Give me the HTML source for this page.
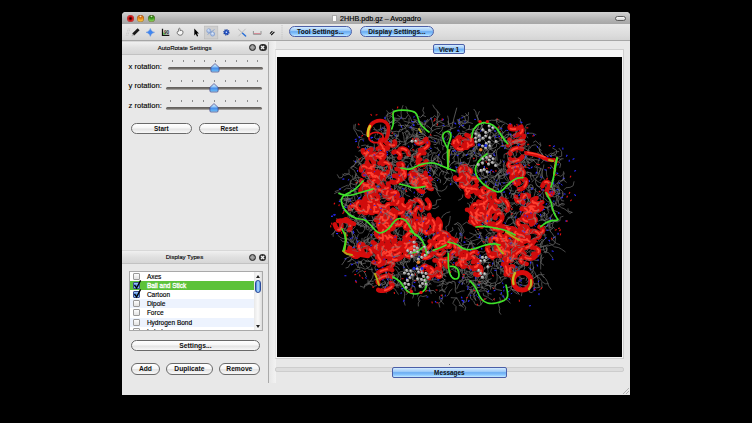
<!DOCTYPE html>
<html><head><meta charset="utf-8">
<style>
*{margin:0;padding:0;box-sizing:border-box}
html,body{width:752px;height:423px;background:#000;overflow:hidden;font-family:"Liberation Sans",sans-serif;color:#111}
.a{position:absolute}
#win{position:absolute;left:122px;top:12px;width:508px;height:383px;background:#e8e8e8;border-radius:4px 4px 0 0;overflow:hidden}
#title{position:absolute;left:0;top:0;width:508px;height:12px;background:linear-gradient(#d2d2d2,#b4b4b4 60%,#a6a6a6)}
#toolbar{position:absolute;left:0;top:12px;width:508px;height:16.6px;background:linear-gradient(#e9e9e9,#dcdcdc 70%,#d4d4d4);border-bottom:1px solid #a6a6a6}
.tl{position:absolute;top:2.8px;width:7px;height:7px;border-radius:50%;box-shadow:inset 0 0 0 0.6px rgba(60,0,0,0.45)}
.aq{position:absolute;border-radius:6px;border:1px solid #4b5fa8;background:linear-gradient(#d4ebff 0%,#9ccaf8 40%,#6aacf2 52%,#8fcaff 80%,#c8ecff 100%);font-weight:bold;text-align:center;color:#111;white-space:nowrap}
.dt{position:absolute;left:0;width:146px;height:14px;background:linear-gradient(#f0f0f0,#e0e0e0 50%,#d6d6d6);border-bottom:1px solid #c2c2c2;border-top:1px solid #d8d8d8;font-size:6.05px;line-height:13px;color:#000;-webkit-text-stroke:0.12px #000}
.dbtn{position:absolute;width:7.2px;height:7.2px;border-radius:50%;background:#2e2e2e}
.fbtn{position:absolute;width:7.2px;height:7.2px;border-radius:50%;border:1.4px solid #222;background:radial-gradient(circle at 45% 45%,#b0b0b0,#747474)}
.lbl{position:absolute;font-size:7.6px;line-height:9px;color:#000;white-space:nowrap;-webkit-text-stroke:0.12px #000}
.trk{position:absolute;height:2.6px;border-radius:1.5px;background:linear-gradient(#5e5b58,#7a7672 70%,#cfcfcf)}
.tk{position:absolute;width:0.8px;height:2px;background:#8c8c8c}
.pb{position:absolute;height:11px;border-radius:6px;border:1px solid #6a6a6a;background:linear-gradient(#ffffff,#f6f6f6 45%,#e4e4e4 55%,#f8f8f8);font-weight:bold;text-align:center;line-height:9px;color:#111;white-space:nowrap}
.row{position:absolute;left:0;width:125.5px;height:9.2px;font-size:6.5px;line-height:9.4px;padding-left:17.3px;white-space:nowrap;color:#000;-webkit-text-stroke:0.15px currentColor}
.cb{position:absolute;left:3.4px;top:1px;width:7px;height:7px;border:1px solid #9a9a9a;background:linear-gradient(#fdfdfd,#e2e2e2);border-radius:1px}
.cbk{border-color:#3a4a90;background:linear-gradient(#a8d0ff,#3a7ce0 60%,#9fd8ff)}
</style></head><body>
<div id="win">
  <div id="title">
    <div class="tl" style="left:4.7px;background:radial-gradient(circle at 50% 50%,#200000 0,#700000 22%,#e02020 48%,#ff7070 78%,#b01010 100%)"></div>
    <div class="tl" style="left:15.1px;background:radial-gradient(circle at 50% 18%,#fff0d0 0,#d07010 22%,#f09020 45%,#ffd850 80%,#f0b040 100%)"></div>
    <div class="tl" style="left:25.9px;background:radial-gradient(circle at 50% 18%,#e0ffd0 0,#2a7a10 22%,#4aa828 45%,#98e068 80%,#70c050 100%)"></div>
    <div class="a" style="left:209.5px;top:2.6px;width:5.2px;height:7.4px;background:#fbfbfb;border:0.5px solid #aaa"></div>
    <div class="a" style="left:218px;top:2px;font-size:7.2px;line-height:9px;color:#000;white-space:nowrap;-webkit-text-stroke:0.15px #000">2HHB.pdb.gz – Avogadro</div>
    <div class="a" style="left:493.2px;top:3.6px;width:10.5px;height:5px;border-radius:3px;border:1px solid #5a5a5a;background:linear-gradient(#fdfdfd,#d0d0d0)"></div>
  </div>
  <div id="toolbar">
    <svg class="a" style="left:0;top:0" width="170" height="17" viewBox="122 24 170 17">
      <g stroke="#b4b4b4" stroke-width="0.7" stroke-dasharray="0.8 0.8"><path d="M126.2 35.5 L128.5 28"/><path d="M127.8 35.5 L130.1 28"/></g>
      <path d="M137.6 28.2 L139.6 30.2 L134.2 35.6 L132.2 33.6Z" fill="#1a1a1a"/>
      <path d="M132.2 33.6 L134.2 35.6 L131.4 36.6Z" fill="#b8b8b8"/>
      <path d="M150.3 28.4 Q151 31.6 154.6 32.3 Q151 33 150.3 36.4 Q149.6 33 146 32.3 Q149.6 31.6 150.3 28.4Z" fill="#3f86f0" stroke="#2a6ad8" stroke-width="0.3"/>
      <path d="M162.5 28.8 V35.3 H169.3" fill="none" stroke="#111" stroke-width="1.3"/>
      <path d="M163.3 34.6 V32 Q165 34.6 166 34.6Z" fill="#28c028"/>
      <text x="164" y="33.6" font-size="4.6" font-family="Liberation Sans" fill="#222" font-weight="bold">90</text>
      <path d="M177.5 31.5 Q176.3 33 178 34.5 Q180 36 182 34.8 Q183.6 33 182.8 31 Q181.5 30 180.2 30.6 L180 28.5 Q179.2 27.8 178.6 28.8 L178.7 31.2Z" fill="#f6f6f6" stroke="#333" stroke-width="0.6"/>
      <path d="M194.3 28.6 L194.3 35.4 L195.8 34 L197 36.6 L198.2 36 L197 33.5 L199 33.4Z" fill="#000"/>
      <rect x="204.4" y="26.1" width="13.4" height="12.8" fill="#cfcfcf" stroke="#bababa" stroke-width="0.6"/>
      <path d="M207.5 34.5 L214.5 29.5" stroke="#7a9ad0" stroke-width="0.8"/>
      <g fill="#b4c8ea" stroke="#5a82c8" stroke-width="0.5"><circle cx="208.8" cy="30.8" r="2"/><circle cx="212.6" cy="34" r="2.1"/></g>
      <g fill="#dde8f8"><circle cx="208.2" cy="30" r="0.8"/><circle cx="212.4" cy="33.3" r="0.9"/></g>
    </svg>
    <svg class="a" style="left:96px;top:0" width="70" height="17" viewBox="218 24 70 17">
      <circle cx="226.4" cy="32.3" r="2.4" fill="#2656c8" stroke="#1b3f9a" stroke-width="1.6" stroke-dasharray="1 0.7"/>
      <circle cx="226.4" cy="32.3" r="0.8" fill="#dfe8ff"/>
      <path d="M238.2 29 L242.5 33" stroke="#b0b0b0" stroke-width="0.9"/>
      <path d="M245.6 28.8 L238.4 36.3" stroke="#b8b8b8" stroke-width="0.9"/>
      <path d="M242.6 33.2 L245.6 36" stroke="#2b70d8" stroke-width="1.5" stroke-linecap="round"/>
      <path d="M253.4 31 V34.3 H261 V31" fill="none" stroke="#8a8a8a" stroke-width="0.9"/>
      <path d="M254 33.5 H260.4" stroke="#d87080" stroke-width="0.7"/>
      <path d="M270 33.6 L272.4 31.2 M271.2 35 L274.4 31.8" stroke="#111" stroke-width="1.1"/>
      <path d="M282 25 V39.5" stroke="#bdbdbd" stroke-width="0.8" stroke-dasharray="0.9 0.9"/>
    </svg>
    <div class="aq" style="left:167px;top:2.4px;width:63px;height:10.9px;font-size:6.6px;line-height:9px">Tool Settings...</div>
    <div class="aq" style="left:238.4px;top:2.4px;width:73.2px;height:10.9px;font-size:6.66px;line-height:9px">Display Settings...</div>
  </div>

  <!-- left dock -->
  <div class="dt" style="top:28.6px"><span class="a" style="left:35.7px;top:0">AutoRotate Settings</span>
    <div class="fbtn" style="left:126.75px;top:2.1px"></div>
    <div class="dbtn" style="left:137.4px;top:2.1px"></div>
    <svg class="a" style="left:137.4px;top:2.1px" width="7.2" height="7.2"><path d="M2.1 2.1 L5.1 5.1 M5.1 2.1 L2.1 5.1" stroke="#f0f0f0" stroke-width="1.4"/></svg>
  </div>
  <div class="lbl" style="left:6.5px;top:49.5px">x rotation:</div>
  <div class="lbl" style="left:6.5px;top:69.2px">y rotation:</div>
  <div class="lbl" style="left:6.5px;top:89.3px">z rotation:</div>
  <div class="trk" style="left:46px;top:55.2px;width:94.5px"></div>
  <div class="trk" style="left:43.9px;top:75px;width:96.6px"></div>
  <div class="trk" style="left:43.9px;top:95px;width:96.6px"></div>
  <div class="tk" style="left:49.9px;top:48.2px"></div>
<div class="tk" style="left:60.9px;top:48.2px"></div>
<div class="tk" style="left:72.0px;top:48.2px"></div>
<div class="tk" style="left:82.1px;top:48.2px"></div>
<div class="tk" style="left:92.8px;top:48.2px"></div>
<div class="tk" style="left:103.0px;top:48.2px"></div>
<div class="tk" style="left:114.0px;top:48.2px"></div>
<div class="tk" style="left:124.5px;top:48.2px"></div>
<div class="tk" style="left:135.2px;top:48.2px"></div>
<svg class="a" style="left:88.4px;top:51.0px" width="10" height="10" viewBox="0 0 10 10"><defs><linearGradient id="tg" x1="0" y1="0" x2="0" y2="1"><stop offset="0" stop-color="#e4f6ff"/><stop offset="0.35" stop-color="#9accf8"/><stop offset="0.55" stop-color="#4a8eea"/><stop offset="0.85" stop-color="#62b2f4"/><stop offset="1" stop-color="#b4eeff"/></linearGradient></defs><path d="M5 0.6 L9.1 4.4 V7.9 Q9.1 9 8 9 H2 Q0.9 9 0.9 7.9 V4.4Z" fill="url(#tg)" stroke="#3f3f86" stroke-width="0.7"/></svg>
<div class="tk" style="left:48.0px;top:68.0px"></div>
<div class="tk" style="left:59.0px;top:68.0px"></div>
<div class="tk" style="left:70.0px;top:68.0px"></div>
<div class="tk" style="left:81.0px;top:68.0px"></div>
<div class="tk" style="left:91.6px;top:68.0px"></div>
<div class="tk" style="left:103.0px;top:68.0px"></div>
<div class="tk" style="left:113.1px;top:68.0px"></div>
<div class="tk" style="left:124.5px;top:68.0px"></div>
<div class="tk" style="left:135.2px;top:68.0px"></div>
<svg class="a" style="left:87.2px;top:70.8px" width="10" height="10" viewBox="0 0 10 10"><defs><linearGradient id="tg" x1="0" y1="0" x2="0" y2="1"><stop offset="0" stop-color="#e4f6ff"/><stop offset="0.35" stop-color="#9accf8"/><stop offset="0.55" stop-color="#4a8eea"/><stop offset="0.85" stop-color="#62b2f4"/><stop offset="1" stop-color="#b4eeff"/></linearGradient></defs><path d="M5 0.6 L9.1 4.4 V7.9 Q9.1 9 8 9 H2 Q0.9 9 0.9 7.9 V4.4Z" fill="url(#tg)" stroke="#3f3f86" stroke-width="0.7"/></svg>
<div class="tk" style="left:48.0px;top:88.0px"></div>
<div class="tk" style="left:59.0px;top:88.0px"></div>
<div class="tk" style="left:70.0px;top:88.0px"></div>
<div class="tk" style="left:81.0px;top:88.0px"></div>
<div class="tk" style="left:91.6px;top:88.0px"></div>
<div class="tk" style="left:103.0px;top:88.0px"></div>
<div class="tk" style="left:113.1px;top:88.0px"></div>
<div class="tk" style="left:124.5px;top:88.0px"></div>
<div class="tk" style="left:135.2px;top:88.0px"></div>
<svg class="a" style="left:87.2px;top:90.8px" width="10" height="10" viewBox="0 0 10 10"><defs><linearGradient id="tg" x1="0" y1="0" x2="0" y2="1"><stop offset="0" stop-color="#e4f6ff"/><stop offset="0.35" stop-color="#9accf8"/><stop offset="0.55" stop-color="#4a8eea"/><stop offset="0.85" stop-color="#62b2f4"/><stop offset="1" stop-color="#b4eeff"/></linearGradient></defs><path d="M5 0.6 L9.1 4.4 V7.9 Q9.1 9 8 9 H2 Q0.9 9 0.9 7.9 V4.4Z" fill="url(#tg)" stroke="#3f3f86" stroke-width="0.7"/></svg>
  <div class="pb" style="left:9px;top:110.9px;width:60.8px;font-size:6.4px">Start</div>
  <div class="pb" style="left:76.8px;top:110.9px;width:60.8px;font-size:6.4px">Reset</div>

  <div class="dt" style="top:238.4px"><span class="a" style="left:43.7px;top:0">Display Types</span>
    <div class="fbtn" style="left:126.6px;top:2.8px"></div>
    <div class="dbtn" style="left:136.9px;top:2.8px"></div>
    <svg class="a" style="left:136.9px;top:2.8px" width="7.2" height="7.2"><path d="M2.1 2.1 L5.1 5.1 M5.1 2.1 L2.1 5.1" stroke="#f0f0f0" stroke-width="1.4"/></svg>
  </div>
  <div class="a" style="left:6.6px;top:258.8px;width:134px;height:60.4px;background:#fff;border:1px solid #a9a9a9;overflow:hidden">
    <div class="row" style="top:-0.2px">Axes<div class="cb"></div></div>
    <div class="row" style="top:9px;background:#5cc23a;color:#fff;-webkit-text-stroke:0.3px #fff">Ball and Stick<div class="cb cbk"></div><svg class="a" style="left:3.2px;top:-1px" width="10" height="10"><path d="M1.5 4.8 L3.6 8 L7.6 0.4" fill="none" stroke="#000" stroke-width="1.3"/></svg></div>
    <div class="row" style="top:18.2px">Cartoon<div class="cb cbk"></div><svg class="a" style="left:3.2px;top:-1px" width="10" height="10"><path d="M1.5 4.8 L3.6 8 L7.6 0.4" fill="none" stroke="#000" stroke-width="1.3"/></svg></div>
    <div class="row" style="top:27.4px;background:#edf3fe">Dipole<div class="cb"></div></div>
    <div class="row" style="top:36.6px">Force<div class="cb"></div></div>
    <div class="row" style="top:45.8px;background:#edf3fe">Hydrogen Bond<div class="cb"></div></div>
    <div class="row" style="top:55px">Label<div class="cb"></div></div>
    <div class="a" style="left:124.5px;top:0;width:8px;height:58px;background:linear-gradient(90deg,#e8e8e8,#fafafa 50%,#dcdcdc)"></div>
    <div class="a" style="left:126.2px;top:3px;width:0;height:0;border-left:2px solid transparent;border-right:2px solid transparent;border-bottom:3px solid #222"></div>
    <div class="a" style="left:126.2px;top:53px;width:0;height:0;border-left:2px solid transparent;border-right:2px solid transparent;border-top:3px solid #222"></div>
    <div class="a" style="left:125.3px;top:8.6px;width:6px;height:13px;border-radius:3px;border:0.8px solid #2a4a9a;background:linear-gradient(90deg,#3a78d8,#b8e0ff 50%,#4a8ae0)"></div>
  </div>
  <div class="pb" style="left:9px;top:328.2px;width:128.8px;font-size:6.76px">Settings...</div>
  <div class="pb" style="left:9px;top:351.4px;width:28.8px;font-size:6.7px;height:11.3px">Add</div>
  <div class="pb" style="left:44.2px;top:351.4px;width:46.4px;font-size:6.7px;height:11.3px">Duplicate</div>
  <div class="pb" style="left:96.9px;top:351.4px;width:40.9px;font-size:6.7px;height:11.3px">Remove</div>
  <div class="a" style="left:146px;top:30px;width:1px;height:341px;background:#aaa"></div>

  <!-- view frame -->
  <div class="a" style="left:147px;top:29px;width:7px;height:342px;background:linear-gradient(90deg,#e6e6e6,#eeeeee 60%,#f2f2f2)"></div>
  <div class="a" style="left:153.1px;top:37.2px;width:348.6px;height:310px;border:1px solid #cfcfcf;border-left-color:#e4e4e4;background:#f6f6f6"></div>
  <div class="a" style="left:154.7px;top:45.1px;width:345.5px;height:300.1px;background:#000"></div>
  <div class="aq" style="left:311.2px;top:32.4px;width:31.6px;height:10.1px;border-radius:2px;font-size:6.7px;line-height:9.6px">View 1</div>
  <div class="a" style="left:153.3px;top:355px;width:348.5px;height:5.3px;border-radius:2px;background:#dddddd;border:1px solid #cdcdcd"></div>
  <div class="a" style="left:326.5px;top:352px;width:1px;height:1px;background:#777"></div>
  <div class="aq" style="left:270.1px;top:355.1px;width:114.5px;height:10.5px;border-radius:2px;font-size:6.4px;line-height:9.8px">Messages</div>
  <svg class="a" style="left:499px;top:374px" width="9" height="9"><path d="M2 8 L8 2 M5 8 L8 5" stroke="#9a9a9a" stroke-width="0.7"/></svg>
</div>
<svg style="position:absolute;left:0;top:0" width="752" height="423">
<path d="M516.9 238.5 L513.2 239.5 L511.7 242.7 M396.8 153.8 L395.9 150.8 L394.4 146.9 L390.4 146.0 L388.0 148.9 M532.0 218.0 L530.0 214.9 L527.1 214.8 L525.3 217.6 L526.8 220.3 M390.9 222.2 L393.2 218.5 L392.6 215.4 L394.2 212.0 L396.3 209.3 L399.7 207.7 M526.5 283.0 L528.7 280.1 L533.2 281.4 L534.0 283.8 L538.3 283.9 L540.1 287.1 M388.4 121.8 L387.2 117.6 L387.6 113.2 M441.6 218.2 L442.6 215.8 L446.5 212.9 L450.2 211.8 M436.5 264.5 L439.6 267.0 L442.4 268.2 L444.4 269.8 L448.0 270.3 M550.4 201.6 L548.8 204.5 L551.3 207.3 L552.2 210.7 L555.5 213.2 L554.9 216.2 M432.2 246.8 L431.1 250.4 L433.4 254.8 L437.1 257.4 L440.2 257.1 M518.9 162.3 L523.7 162.2 L528.4 161.9 L529.8 158.2 L532.5 157.9 L533.3 154.0 M430.9 252.7 L428.2 256.6 L423.5 258.3 L421.1 255.9 L416.3 256.1 L414.2 254.7 M494.4 180.5 L495.7 182.9 L499.3 182.8 L501.5 186.1 M518.5 180.9 L521.4 178.8 L520.6 175.2 L518.1 171.1 L514.8 170.4 M429.8 275.0 L429.0 271.4 L430.4 269.2 M417.6 171.0 L420.2 167.6 L420.8 164.5 M408.6 167.7 L406.3 170.2 L406.8 173.7 M490.6 203.0 L490.4 198.3 L493.4 197.2 L493.8 194.5 M452.1 252.7 L451.1 256.2 L448.1 257.1 L443.8 257.8 M518.7 268.0 L517.2 271.1 L514.6 272.5 L513.3 275.4 L515.5 279.5 M472.5 169.1 L470.0 171.0 L465.9 170.3 L465.6 167.5 M446.1 276.6 L444.2 273.9 L441.2 274.1 L439.7 270.4 L442.0 267.9 M545.9 195.9 L549.1 198.2 L551.0 200.6 M419.0 128.8 L423.3 129.2 L425.2 133.3 L423.7 136.5 L423.4 140.6 M527.9 242.8 L528.6 246.2 L532.2 249.7 M495.3 189.1 L497.8 189.3 L501.0 192.6 L502.4 195.7 L505.3 199.6 M435.7 132.1 L439.9 134.3 L442.6 135.3 M488.4 296.3 L487.8 293.5 L486.2 291.0 L483.6 290.7 L479.3 291.4 M527.0 273.4 L530.6 274.2 L533.4 270.3 M525.4 146.4 L524.7 143.4 L523.0 140.1 L521.0 138.1 L516.7 137.5 L515.7 135.2 M468.4 263.1 L471.3 260.4 L474.6 258.0 L476.1 254.8 L478.3 252.0 M493.0 195.4 L493.5 200.3 L494.3 203.9 M482.7 276.5 L483.5 274.0 L483.2 270.6 L485.6 267.7 L487.9 266.5 L488.6 261.8 M405.0 255.0 L407.8 258.5 L410.3 257.7 L414.5 257.5 L415.9 255.1 L419.1 254.9 M480.7 153.0 L477.0 153.8 L475.1 151.5 L471.4 150.5 L468.9 151.0 L467.4 153.5 M487.3 176.4 L487.7 172.6 L491.5 170.5 M419.7 179.9 L418.1 184.0 L417.4 186.9 L415.4 188.6 M494.2 166.2 L498.1 164.8 L501.0 163.1 L500.4 159.4 M401.8 127.2 L399.6 122.8 L397.1 121.6 L393.7 123.9 M489.5 220.6 L486.5 223.0 L484.3 224.8 L485.4 227.2 L488.3 227.0 L491.0 223.0 M351.8 231.6 L348.8 231.4 L345.2 230.2 L341.7 227.2 M369.5 165.4 L365.2 165.3 L361.4 165.4 M420.7 193.2 L424.3 193.5 L426.5 191.8 M540.6 253.1 L537.9 257.1 L534.8 256.4 L533.8 251.8 L530.1 250.7 L526.2 253.4 M424.1 229.1 L421.5 231.9 L422.9 234.1 L421.0 236.6 L416.6 236.2 L412.7 237.1 M469.1 135.4 L472.4 131.9 L473.4 129.2 M501.6 236.2 L497.7 235.8 L493.3 236.9 M535.4 235.7 L538.3 239.0 L539.4 242.1 M410.8 154.9 L413.1 158.7 L410.9 162.5 L408.2 165.1 L407.2 169.4 M457.2 119.4 L460.2 122.9 L461.8 125.7 L464.2 128.6 M398.5 261.6 L402.1 262.8 L403.4 265.4 L405.1 268.3 L403.9 271.3 M503.4 206.6 L507.3 209.7 L509.2 211.7 M489.7 179.1 L486.3 182.4 L485.9 186.0 L485.1 190.3 M517.0 238.9 L514.1 242.5 L512.1 245.9 L511.8 249.5 L510.1 252.1 M383.9 170.8 L382.0 168.3 L382.0 163.7 L383.3 159.6 M478.7 174.0 L481.9 177.7 L480.4 180.1 L477.9 181.8 M400.8 157.7 L405.5 158.2 L408.1 158.3 M542.9 193.2 L543.6 195.9 L543.6 199.4 L540.8 203.3 L539.1 206.8 M516.0 189.8 L514.7 193.7 L514.0 196.9 L512.6 199.2 M432.0 268.6 L429.2 266.3 L425.8 264.1 L421.9 262.7 M491.9 267.6 L490.7 271.3 L493.2 275.1 M463.0 254.4 L459.5 253.9 L458.6 251.0 L459.4 247.6 L461.5 245.8 M414.8 155.8 L411.6 157.9 L410.5 162.3 L410.6 165.3 L414.3 167.7 L415.1 171.8 M533.8 275.9 L530.7 277.9 L527.6 277.4 L524.4 274.6 M447.8 273.6 L446.7 270.5 L445.2 267.3 L445.0 263.1 L443.1 258.7 M388.8 120.1 L390.1 122.7 L387.8 126.5 L389.3 131.0 L389.4 135.4 L387.6 139.8 M526.0 280.9 L526.9 277.4 L530.6 276.2 M392.4 149.1 L394.4 152.2 L392.3 155.9 L392.8 158.8 L392.3 163.1 L394.6 165.5 M502.5 206.5 L502.6 210.0 L500.1 211.1 L496.0 211.3 L494.8 215.1 L491.5 218.6 M418.4 201.4 L415.3 202.8 L414.0 205.0 L414.1 208.4 M450.9 170.8 L452.7 174.5 L451.6 177.7 L452.1 180.9 L451.8 184.9 M509.3 291.1 L511.3 289.4 L514.9 289.8 L516.7 291.8 L519.4 294.6 M420.9 130.1 L417.0 128.7 L412.7 127.6 M390.8 163.8 L391.4 167.7 L391.3 172.5 L391.2 176.3 L387.8 179.1 M432.4 249.7 L433.4 253.0 L433.6 257.8 M351.0 238.5 L350.7 242.1 L354.6 243.6 L354.2 248.3 M380.7 124.5 L380.5 128.8 L377.4 130.3 L373.3 129.4 M361.9 263.5 L357.3 262.3 L352.7 264.1 L350.2 263.7 L348.3 267.3 L345.6 268.0 M404.3 257.0 L405.1 260.2 L401.7 262.8 L399.5 264.8 L397.0 263.5 L397.3 260.6 M529.5 202.0 L533.8 200.9 L537.0 200.7 L538.8 196.1 L542.3 193.2 L544.1 189.6 M478.3 165.3 L480.2 162.4 L483.1 161.5 L487.0 159.8 L489.0 157.3 L488.0 152.6 M519.6 268.7 L515.6 271.0 L512.6 272.1 L508.8 269.6 M499.6 297.2 L500.4 300.1 L498.5 304.6 L499.7 308.4 L499.2 312.0 L501.0 314.6 M516.5 270.6 L513.2 271.1 L512.3 274.5 M457.9 154.6 L459.6 151.0 L458.6 148.2 L454.7 146.6 L450.8 146.5 M413.0 211.2 L416.7 208.5 L420.2 206.7 M396.4 119.2 L393.8 119.3 L391.8 121.5 L392.7 124.0 M467.1 287.8 L470.5 290.2 L469.9 294.4 M454.2 137.8 L459.0 139.1 L461.3 138.0 L462.8 135.0 L467.6 134.7 M525.5 252.7 L522.7 253.4 L518.3 251.4 L516.3 248.8 L514.4 244.9 L511.1 244.5 M390.5 125.1 L389.2 129.7 L385.6 130.6 L382.5 127.4 M420.1 261.3 L423.5 260.3 L423.6 257.6 M354.5 177.8 L356.2 174.3 L354.2 170.1 L351.1 168.4 M364.7 157.1 L367.8 156.4 L369.0 153.0 L369.8 150.2 L371.1 146.3 M435.2 155.0 L438.1 156.4 L438.3 159.1 L436.8 161.9 M530.8 172.3 L530.5 177.2 L532.1 180.2 M395.6 137.4 L398.3 136.1 L398.4 133.4 L399.6 129.9 M394.8 142.9 L393.0 140.5 L388.8 141.4 L384.9 143.3 M392.9 138.6 L390.2 135.3 L387.9 131.2 L384.2 128.1 L385.1 125.6 M416.0 151.4 L420.4 149.8 L425.1 149.1 L427.2 147.3 L430.8 147.0 M359.3 151.1 L362.4 150.1 L367.2 149.3 L368.0 144.5 M487.4 199.1 L491.6 201.2 L492.9 203.5 L496.6 203.7 L499.8 203.8 L501.9 201.0 M359.9 227.0 L363.2 225.5 L366.9 222.3 L365.4 218.5 M501.9 228.2 L497.4 226.4 L495.9 223.4 M386.3 171.0 L382.1 169.2 L379.3 171.8 L374.9 169.7 L371.4 170.4 M486.3 177.4 L483.4 178.2 L480.4 177.7 M432.3 184.6 L436.6 186.0 L437.7 190.6 L441.8 191.1 L445.5 189.1 L447.3 185.7 M398.3 164.6 L393.5 165.6 L390.5 162.0 M346.5 226.7 L347.0 223.9 L345.7 220.6 L343.2 218.7 L339.7 220.3 L336.1 218.6 M470.4 239.8 L471.9 243.3 L472.4 247.0 L474.1 249.5 L477.8 250.4 M422.7 225.7 L426.1 222.2 L427.1 219.0 L425.8 214.5 L423.5 213.1 M413.7 241.4 L409.5 242.6 L404.6 243.7 L399.9 242.5 L395.8 242.4 L393.9 244.8 M485.8 235.8 L487.4 233.8 L491.3 233.0 L496.0 232.0 L499.6 231.9 L503.1 234.9 M479.9 180.7 L477.6 183.3 L476.4 186.9 L474.1 190.3 L476.9 193.7 L475.0 196.6 M401.5 215.0 L403.5 211.6 L401.0 207.5 L397.1 205.0 L396.5 200.2 L393.7 197.9 M424.3 176.0 L422.1 174.8 L419.6 176.7 L417.3 179.6 L413.0 181.9 M364.3 139.0 L360.0 139.6 L358.7 142.7 L358.6 145.4 L359.9 148.0 M492.3 162.3 L496.1 162.0 L498.3 164.1 L497.5 167.6 L500.7 169.9 L504.3 168.4 M486.0 255.6 L487.2 252.6 L489.1 250.9 M495.4 140.9 L494.1 136.3 L493.4 133.5 L490.0 131.4 L486.5 132.8 M529.1 239.7 L526.1 239.0 L523.6 239.9 L519.0 240.0 L517.9 237.6 M373.9 234.0 L375.5 237.6 L373.0 240.2 L370.3 241.7 M386.9 183.0 L385.5 179.8 L385.8 177.3 L388.2 176.0 M368.3 180.6 L371.7 179.9 L375.4 177.0 L377.3 173.4 L380.9 173.8 M557.8 218.7 L556.2 220.8 L553.2 222.3 L552.3 226.4 L554.7 228.5 M438.0 280.3 L438.0 277.3 L437.0 273.3 L436.9 270.1 M446.4 142.6 L451.2 143.8 L454.3 145.6 L453.5 149.3 M516.4 245.8 L518.1 249.9 L522.4 249.7 L523.8 247.6 L527.7 245.9 M522.9 148.5 L525.9 146.8 L528.7 145.2 M397.0 185.9 L399.5 187.5 L403.9 188.5 L407.5 191.5 M427.1 295.5 L422.9 296.5 L420.4 295.7 L418.6 298.0 L418.9 301.2 M404.3 237.2 L405.4 241.3 L408.2 243.5 L409.6 246.6 M523.0 160.4 L523.3 164.6 L526.4 165.6 M523.2 173.4 L526.6 173.2 L530.4 175.8 L533.1 175.9 L534.4 179.2 L531.6 182.3 M513.3 278.9 L510.5 275.9 L506.3 275.6 L503.8 272.0 L502.0 269.6 L504.4 265.7 M467.6 136.0 L468.9 138.9 L472.3 138.9 L475.2 138.2 M495.9 149.9 L493.3 153.0 L490.6 153.9 L486.7 153.1 L483.1 155.0 L482.7 158.6 M539.1 186.5 L542.8 186.6 L544.7 182.3 L544.4 179.5 L541.7 175.5 M366.1 195.0 L363.7 196.1 L364.4 201.1 L363.0 203.4 L358.6 205.7 M468.7 121.7 L465.6 120.7 L462.9 120.8 L459.5 123.1 M511.3 250.5 L508.7 250.4 L505.3 247.3 M514.3 169.2 L516.9 171.4 L519.3 173.9 L518.9 177.0 L522.3 178.8 M485.2 276.7 L488.1 274.3 L490.3 272.5 M401.4 224.7 L404.8 223.4 L406.6 225.4 L409.9 224.2 M373.7 255.6 L375.3 253.5 L373.3 249.7 L374.6 247.4 L371.2 243.9 L366.9 244.0 M530.1 245.2 L527.4 247.2 L523.9 250.6 L519.4 249.2 L519.2 244.3 L520.5 240.0 M400.7 222.5 L403.6 222.8 L405.5 226.1 L406.2 230.7 L409.6 233.4 L410.7 236.1 M416.8 150.4 L416.2 153.3 L412.6 154.6 L411.7 159.2 L412.8 161.7 M460.3 152.8 L457.6 155.6 L458.4 159.3 L458.3 162.0 L458.9 164.6 L460.7 168.9 M465.4 253.8 L467.2 249.2 L468.6 245.9 M499.9 216.7 L504.4 216.5 L506.8 212.8 L505.2 210.2 M476.5 144.5 L476.0 149.2 L474.0 153.4 L471.3 157.4 M515.1 172.4 L517.3 170.7 L519.8 167.2 M336.1 229.6 L333.1 233.4 L333.2 236.8 M526.8 204.4 L530.4 203.0 L533.0 199.7 L534.0 197.1 L537.8 196.2 M500.8 274.2 L500.9 269.2 L500.8 265.5 M344.0 233.3 L345.1 228.5 L347.5 225.8 L347.7 220.9 L347.9 217.5 L348.4 214.2 M358.4 234.2 L357.3 237.3 L356.0 242.0 L356.7 245.2 L357.5 248.2 M485.9 256.5 L489.4 257.6 L493.2 256.5 L497.9 255.3 L499.2 257.6 L500.8 261.7 M486.8 177.1 L482.4 179.0 L479.1 178.8 L475.9 175.8 M454.8 236.5 L453.9 240.7 L451.1 244.4 L447.4 245.1 L444.4 241.8 L445.9 239.3 M428.3 184.3 L429.3 181.7 L431.8 179.8 L435.5 178.0 M474.2 164.3 L472.9 168.6 L472.5 173.2 L475.7 175.1 L475.7 178.3 L477.2 180.4 M367.0 156.4 L363.4 156.1 L362.0 153.2 L360.8 150.7 M386.6 110.4 L387.9 112.5 L391.7 114.3 L393.9 111.8 L392.4 108.9 M347.2 231.6 L345.6 228.3 L340.8 229.1 L335.9 229.1 L334.2 232.8 L331.4 234.6 M361.4 265.2 L361.4 261.0 L363.7 259.4 L366.9 261.7 L370.9 261.4 L373.6 263.9 M465.1 252.0 L460.7 250.0 L458.5 251.2 L455.1 253.5 L451.7 253.1 M517.9 117.6 L520.5 119.1 L520.2 122.5 L522.3 124.5 M452.2 236.7 L450.7 239.6 L447.9 239.7 L445.7 238.3 L443.6 235.4 L444.5 232.9 M382.1 152.9 L384.0 155.7 L387.1 157.5 L391.8 157.3 L396.8 157.0 L399.6 159.4 M401.5 117.3 L401.0 113.1 L401.5 109.5 L403.1 105.1 M523.9 286.2 L528.0 284.6 L529.4 280.0 L527.4 277.4 L525.3 274.7 M516.6 199.3 L514.3 203.5 L510.1 205.7 L508.2 204.0 L503.8 203.7 L501.5 202.4 M453.7 148.5 L451.1 148.1 L450.1 145.6 M572.5 212.5 L568.1 211.0 L568.0 208.4 M343.5 251.4 L346.9 250.7 L350.3 250.6 L351.4 246.5 M491.5 216.6 L491.5 211.9 L493.3 208.9 L493.6 205.4 L497.0 204.5 L500.0 202.6 M421.1 150.5 L425.1 151.2 L427.3 147.5 M437.8 243.6 L434.0 245.0 L430.9 246.4 M464.3 180.8 L464.5 178.2 L467.6 177.4 L472.1 178.2 L474.7 174.6 L478.9 172.2 M377.2 134.9 L378.5 131.4 L381.5 128.0 L386.1 128.8 M537.2 276.3 L539.9 278.3 L541.8 281.6 L545.3 283.8 L548.5 283.7 M511.3 136.0 L514.9 134.9 L516.8 132.0 L517.4 128.6 M370.5 254.6 L372.0 257.4 L374.3 260.4 L375.9 262.6 L380.8 262.3 M507.9 179.9 L508.2 183.5 L507.6 186.6 L509.8 190.6 L513.8 191.1 M376.8 285.5 L373.2 286.5 L370.0 283.5 L366.5 285.3 L363.4 287.2 L360.0 286.1 M445.8 292.1 L441.7 290.5 L439.2 290.1 M498.4 218.7 L496.0 216.8 L491.8 218.6 L491.5 221.3 L488.7 224.0 L490.2 227.9 M506.3 203.2 L507.3 205.9 L508.7 208.1 L509.5 211.3 L513.8 213.8 L517.5 212.7 M494.3 163.1 L495.4 160.2 L495.5 156.6 M462.6 164.5 L464.7 167.2 L467.2 170.0 L468.9 172.9 M405.1 214.2 L405.8 217.2 L406.9 220.0 L411.3 222.1 L413.9 224.5 M510.6 142.4 L515.2 142.2 L516.9 138.6 M468.1 272.6 L465.3 269.9 L460.9 270.4 L457.5 268.8 L454.7 267.7 M365.8 195.3 L368.2 191.7 L368.5 188.6 L369.2 185.6 L373.2 184.8 M408.5 132.0 L405.7 131.5 L403.0 133.5 M414.7 241.3 L417.1 243.7 L417.6 247.4 M462.9 117.3 L465.8 115.8 L468.4 115.1 L468.5 112.1 M363.8 163.4 L365.6 165.9 L365.6 168.9 L363.4 171.2 L364.8 174.9 M349.4 218.2 L349.7 215.7 L350.2 213.0 L351.7 210.6 L354.0 208.1 L355.7 204.3 M447.5 130.5 L450.9 129.0 L453.6 128.2 L456.2 127.0 M375.4 186.0 L372.4 189.1 L370.1 191.1 L370.6 193.8 M433.1 234.1 L436.8 232.6 L438.6 229.1 M524.9 253.0 L527.4 250.7 L526.9 247.8 L528.3 245.2 M475.9 137.9 L473.6 138.9 L470.9 137.9 L468.1 136.8 L466.3 132.8 L461.9 131.0 M499.9 252.5 L501.4 255.9 L503.1 260.0 M540.7 269.5 L540.7 265.0 L540.6 260.5 L540.6 257.4 L542.1 254.5 M498.4 133.9 L498.2 129.9 L499.6 126.1 L496.5 122.9 L496.6 118.5 M484.8 266.7 L483.9 269.3 L480.8 272.7 L479.6 276.5 L475.4 278.1 L475.8 281.8 M532.2 189.3 L528.4 190.3 L527.7 193.7 L527.3 196.2 L528.8 201.0 L533.0 203.1 M380.2 234.7 L378.6 237.6 L379.7 240.3 L382.9 243.5 M403.7 167.4 L408.6 168.2 L411.1 167.8 L413.0 169.8 M387.7 221.2 L387.1 216.3 L389.1 212.4 L391.4 210.7 L394.5 210.7 M392.9 162.5 L388.4 162.9 L387.0 166.8 L385.7 170.8 L389.4 173.6 L389.2 176.4 M421.2 165.8 L417.8 163.1 L414.9 164.8 L414.5 169.7 M474.8 223.7 L471.9 224.8 L469.5 223.9 L466.4 222.2 L462.4 225.0 M488.1 205.5 L491.1 206.5 L494.4 204.5 L498.7 205.8 L501.6 205.5 M456.6 289.3 L458.4 284.9 L461.3 280.9 L464.6 280.1 M446.1 233.3 L446.4 230.2 L445.8 226.8 L448.5 225.1 L449.7 220.5 L450.3 216.0 M487.5 267.7 L488.1 271.5 L487.0 276.0 L486.9 278.7 M424.9 254.4 L422.2 253.7 L419.6 253.3 L415.5 252.5 L411.7 253.6 M349.6 229.4 L352.5 229.5 L355.5 226.4 M545.6 253.3 L547.2 248.8 L545.3 246.0 L541.8 246.6 L537.2 247.3 L533.4 246.2 M363.5 244.4 L367.7 242.1 L372.2 242.6 M490.5 289.5 L490.5 286.4 L486.8 284.6 L486.0 281.6 L483.3 280.0 L479.7 282.0 M416.7 250.5 L420.2 249.5 L423.6 250.9 L428.1 252.9 L431.2 255.3 M466.9 276.9 L468.4 279.4 L467.5 282.4 M394.8 117.5 L394.0 122.1 L389.5 122.6 L388.0 119.7 L389.9 117.8 L391.7 115.7 M440.8 246.8 L437.2 244.9 L434.7 246.3 L432.0 245.8 L431.1 243.5 L432.7 239.3 M514.5 266.6 L512.9 271.2 L508.6 271.8 L506.2 270.7 L503.8 271.5 M392.3 175.5 L390.1 177.9 L391.4 180.5 L394.8 183.8 L395.0 187.4 M364.2 267.5 L361.4 264.0 L358.3 260.7 M436.4 257.7 L436.6 260.2 L439.6 262.8 L442.0 263.8 L443.3 268.0 L444.3 270.4 M551.7 214.5 L550.0 218.2 L551.1 221.1 L548.8 223.7 L550.1 227.5 L553.0 228.3 M505.3 193.8 L505.9 196.7 L505.0 201.3 M355.2 206.6 L350.5 206.4 L349.2 210.1 L346.7 211.9 M513.3 239.2 L511.6 241.1 L512.9 243.9 L510.9 246.3 M366.5 209.6 L366.1 212.1 L362.6 213.9 L359.1 212.6 L356.0 210.1 L355.6 207.5 M536.6 274.9 L538.3 279.6 L538.5 282.3 L538.5 286.5 M403.8 162.5 L401.9 160.9 L399.3 162.1 L395.4 161.9 L391.7 161.5 M428.9 231.2 L430.8 227.0 L433.0 225.6 M498.6 283.3 L501.5 281.9 L502.8 279.3 L507.2 277.8 M492.3 201.2 L489.2 200.6 L486.6 200.7 L483.2 203.9 L480.0 202.8 M527.6 214.0 L530.6 215.5 L532.8 213.7 L535.0 211.6 L533.5 207.7 M486.0 239.2 L484.8 242.6 L487.7 246.5 M480.7 231.9 L480.3 235.0 L481.5 237.3 L481.5 240.3 L484.4 244.3 M489.0 226.9 L488.8 223.6 L486.3 222.7 M394.7 265.7 L397.8 267.3 L399.4 269.8 M544.6 198.4 L547.8 201.7 L552.4 202.2 L555.1 205.4 M365.3 241.7 L362.6 242.5 L361.4 247.3 L361.7 251.5 L361.3 254.5 M360.3 269.8 L355.5 269.2 L352.3 272.2 M350.4 180.3 L350.3 183.1 L350.6 187.3 L353.1 188.5 L355.8 189.7 L359.2 188.6 M417.1 200.3 L417.3 197.2 L419.7 194.2 M560.6 198.5 L563.2 195.3 L562.1 192.3 M504.4 201.5 L502.7 205.8 L498.7 206.4 M360.5 177.5 L355.9 177.8 L351.6 179.8 L350.6 182.7 L348.0 186.7 M334.2 193.7 L337.3 192.2 L339.9 192.3 L341.0 195.2 M407.1 186.7 L404.0 189.9 L403.6 194.5 M391.6 220.5 L393.5 222.6 L396.1 225.6 L395.3 228.1 L396.4 230.8 L397.0 234.4 M547.0 189.6 L544.7 186.1 L543.2 183.8 L539.3 182.4 L535.5 179.9 M470.4 137.6 L470.5 134.0 L473.4 132.9 L477.2 134.8 L480.4 132.1 M379.1 169.5 L382.7 167.3 L386.8 167.2 L390.0 163.5 L393.1 163.1 L397.8 161.7 M377.8 187.2 L381.4 184.8 L383.7 181.9 L385.3 177.2 M488.1 289.6 L484.3 288.1 L480.8 287.1 L477.0 287.7 L473.3 290.0 L471.0 293.9 M501.7 245.5 L501.0 240.6 L503.4 236.7 L506.7 234.2 L511.5 233.6 L514.2 230.1 M401.7 153.8 L406.3 152.8 L409.3 152.8 L410.5 149.2 L413.0 147.2 L412.5 144.8 M369.2 249.7 L372.4 246.2 L375.5 246.0 L376.2 243.4 M414.0 161.6 L411.9 157.3 L409.1 155.7 L407.0 157.3 L404.6 155.7 M546.4 169.6 L546.5 174.2 L547.3 177.4 M343.4 201.0 L347.3 199.4 L351.5 201.1 L354.1 200.3 M494.2 221.2 L492.9 223.9 L489.4 224.9 L485.9 223.5 M458.1 170.3 L459.9 172.8 L463.6 174.4 L466.2 177.5 M404.3 242.4 L407.6 244.2 L411.8 244.5 L415.4 246.7 M530.3 184.4 L528.2 187.9 L529.4 190.1 L530.8 192.7 L527.9 196.4 M442.7 141.1 L439.6 139.3 L436.9 139.2 L433.2 137.4 L430.6 136.7 M529.9 210.0 L527.5 207.4 L526.7 203.6 L528.8 199.9 L528.8 197.2 L530.7 195.2 M411.9 211.3 L412.3 215.6 L417.0 216.8 M495.9 213.5 L492.4 212.1 L491.5 209.3 L487.4 207.6 L484.1 206.9 M479.0 160.9 L481.0 156.6 L482.9 152.3 L484.8 148.2 M541.4 246.8 L542.6 242.3 L543.8 240.1 M519.7 230.2 L520.4 227.0 L525.0 225.3 L527.6 222.3 L528.9 219.3 M497.3 262.9 L500.7 260.5 L499.6 255.9 L497.1 254.5 M403.2 208.0 L400.5 208.6 L397.1 209.0 L394.6 206.7 L394.8 202.1 L397.3 200.7 M497.6 240.2 L498.0 243.9 L498.9 248.2 L496.2 251.6 L495.4 254.1 L498.4 257.7 M419.4 232.1 L416.8 234.7 L414.6 238.6 M512.1 165.9 L516.4 163.4 L518.8 164.6 M378.1 216.3 L382.1 216.1 L385.9 215.5 M399.2 210.3 L396.2 207.1 L396.3 204.1 M435.5 181.0 L432.7 179.3 L428.4 178.9 L425.5 181.4 L422.4 184.2 L422.7 189.0 M465.6 263.6 L464.5 261.2 L462.6 256.8 L464.7 253.1 L467.4 251.6 M442.9 131.7 L442.3 135.2 L440.9 138.0 L441.4 141.5 L441.8 145.2 L444.1 146.2 M411.8 254.3 L412.0 251.2 L414.5 249.4 L414.9 244.7 M353.0 198.8 L348.4 198.8 L347.2 196.5 L349.5 193.7 M528.2 245.7 L531.2 245.8 L534.7 246.4 L538.5 249.7 L543.1 249.8 L546.5 248.5 M404.1 236.4 L402.7 239.4 L401.4 242.1 L400.1 245.4 M433.4 174.7 L433.4 171.1 L436.4 168.6 L435.0 164.3 L433.6 160.8 L434.3 156.7 M364.9 240.2 L367.5 239.0 L370.8 235.8 M526.7 226.6 L527.6 223.9 L529.5 220.2 L529.2 217.4 L533.2 214.5 M482.2 273.8 L478.6 277.0 L477.0 280.4 L472.9 280.4 L469.5 280.6 M423.7 230.8 L419.9 228.5 L416.1 231.0 L413.6 231.6 L411.3 229.4 M512.9 128.6 L516.0 131.6 L517.1 136.3 L514.0 138.6 L511.6 137.4 L511.5 133.8 M374.2 261.1 L376.1 257.5 L378.6 255.9 L378.7 252.7 L376.3 251.2 L373.6 253.2 M502.1 134.7 L504.5 138.1 L502.6 140.9 L499.1 139.9 M424.7 153.2 L420.7 154.9 L419.8 157.6 M363.8 174.5 L362.9 170.6 L366.2 167.6 M464.6 290.8 L461.3 291.2 L456.8 293.1 M468.0 129.1 L472.0 129.9 L476.7 130.9 L480.3 134.1 L480.2 137.5 L478.5 140.0 M422.0 242.5 L417.3 241.8 L414.3 240.4 L411.1 240.0 L409.4 235.9 L410.9 231.6 M406.2 263.1 L403.7 260.2 L405.9 256.1 L409.6 256.8 M434.2 116.0 L432.3 117.7 L429.9 119.2 L426.8 122.7 L423.8 124.7 L419.7 122.8 M345.7 195.9 L349.3 193.8 L350.9 190.8 L355.8 190.7 L356.8 194.2 M470.8 274.3 L472.2 271.2 L475.5 268.6 L477.7 269.9 L478.5 274.4 L481.1 277.4 M391.2 208.4 L390.5 213.0 L388.2 214.0 M510.9 172.8 L513.9 175.7 L514.5 179.7 L512.3 182.1 M381.9 284.9 L384.8 288.7 L386.6 293.3 M521.6 235.5 L518.6 237.3 L515.9 239.3 L516.6 242.7 L515.9 246.3 L515.0 249.2 M391.0 211.5 L393.5 212.9 L396.9 211.4 L399.7 210.0 L402.4 207.2 M519.3 226.5 L523.1 229.5 L522.1 232.2 M423.2 217.4 L423.5 221.0 L420.2 222.6 M419.2 267.6 L423.6 265.5 L425.2 260.9 L427.3 258.8 L427.2 255.8 M399.7 252.7 L398.4 250.0 L394.6 250.1 M494.0 262.2 L492.1 266.6 L487.9 266.2 M404.8 221.9 L408.9 220.5 L411.7 219.8 L416.7 219.5 L418.3 222.1 L421.1 222.8 M474.3 259.2 L478.0 257.1 L477.6 252.6 L480.2 251.5 L483.3 252.2 L485.9 250.1 M465.6 176.3 L468.1 174.8 L468.5 172.1 L470.7 170.4 L472.4 166.8 M349.5 206.3 L346.6 205.2 L342.6 207.8 M416.1 266.6 L417.4 263.2 L413.7 259.9 L414.8 257.5 L417.9 257.9 L420.2 253.7 M375.5 154.6 L374.8 152.0 L375.8 149.6 M523.6 195.4 L521.0 193.4 L521.7 189.2 L521.6 186.3 M541.1 239.3 L543.5 240.3 L546.3 237.7 M515.8 139.7 L517.0 143.7 L521.7 144.6 L523.1 141.9 M426.6 141.2 L425.7 144.5 L427.1 148.4 L430.2 150.1 L432.1 153.1 M495.8 206.0 L493.0 203.2 L493.7 200.5 L491.0 198.2 L489.8 195.9 M508.5 270.1 L506.2 267.7 L502.5 269.0 M509.4 173.9 L506.8 170.1 L503.3 169.7 L501.1 171.6 L498.2 173.6 M364.0 288.6 L364.9 284.5 L368.7 283.8 L370.8 280.6 L372.6 277.8 L373.4 274.1 M475.0 146.5 L474.3 150.0 L472.6 152.4 L470.6 154.9 M521.4 251.4 L519.2 247.1 L517.8 244.0 L514.9 242.0 L513.0 237.9 L511.0 234.0 M379.3 196.5 L377.9 198.8 L377.0 202.9 L372.8 205.4 L369.4 208.2 M390.2 177.9 L393.6 176.8 L397.2 175.0 M402.9 271.3 L399.6 272.1 L397.0 274.7 L392.4 275.9 M432.4 166.5 L435.5 167.7 L438.6 164.9 L439.0 162.3 M433.1 131.2 L430.9 129.0 L427.4 125.4 M424.9 138.5 L422.6 136.2 L420.0 136.7 L417.2 135.7 L413.9 133.6 M541.5 150.5 L538.5 147.9 L535.2 144.7 L531.7 145.7 L529.7 148.7 M409.6 185.1 L405.8 183.9 L403.3 184.0 L399.9 180.9 L395.6 180.2 L390.6 179.8 M383.1 234.2 L384.1 230.9 L386.5 229.6 L388.5 225.7 L389.9 220.9 L387.4 218.3 M419.1 192.3 L417.7 189.2 L414.7 186.2 L411.0 187.1 L409.9 190.2 M463.0 146.1 L459.4 147.7 L457.2 151.5 L454.0 154.4 L450.6 153.8 M360.1 244.9 L364.4 247.3 L367.8 247.8 L370.9 245.0 M494.5 195.3 L494.0 199.5 L497.2 203.0 L497.0 205.7 M421.0 291.5 L418.1 293.6 L417.6 296.5 M489.5 249.3 L487.1 253.0 L483.2 255.5 L481.5 259.0 M507.7 257.7 L511.8 258.6 L515.7 259.8 L517.6 263.3 L521.0 264.4 M536.7 221.5 L536.7 217.7 L534.7 216.0 L535.4 213.3 L537.5 210.0 M500.7 209.7 L505.2 210.1 L507.7 210.4 M552.0 193.9 L554.6 190.0 L553.7 185.4 L552.3 183.3 L550.0 181.9 L546.6 184.1 M399.6 158.8 L404.1 161.0 L408.4 162.3 M511.7 147.6 L516.3 146.8 L518.2 143.0 L519.8 138.8 L520.5 135.9 L523.7 135.5 M514.9 279.2 L515.8 282.1 L520.0 284.7 L523.7 285.5 L526.2 286.0 M517.2 260.4 L518.6 257.9 L521.0 253.8 L523.9 254.0 L526.5 256.5 M554.7 155.5 L558.3 157.2 L561.7 156.1 L561.6 151.6 L558.8 148.0 M357.0 267.4 L360.6 267.3 L365.1 269.2 L367.6 268.1 L370.6 265.9 L370.7 262.8 M546.0 182.6 L546.2 187.2 L549.4 189.5 L553.5 188.8 M547.2 194.9 L549.7 193.1 L552.9 193.6 M490.3 179.0 L492.1 181.3 L494.3 185.0 L498.9 185.0 M388.3 116.3 L390.7 115.6 L392.9 117.8 L397.5 118.5 L401.9 118.1 L403.7 120.2 M516.2 196.6 L515.1 193.7 L510.8 193.6 M521.0 279.1 L518.4 282.9 L518.8 285.5 L522.6 288.5 L521.8 293.5 L521.3 296.2 M499.7 294.0 L503.5 295.6 L504.5 299.1 L507.6 300.1 L510.4 303.4 M377.2 238.1 L373.7 239.0 L370.7 241.6 L369.5 244.2 L367.0 246.3 M526.6 164.6 L523.3 167.5 L524.6 172.1 L528.9 172.5 M419.0 137.2 L416.4 136.2 L412.8 135.2 L410.1 134.8 L408.9 131.6 L405.6 129.9 M506.6 180.6 L504.4 177.3 L503.8 174.2 L506.1 172.4 L508.4 169.1 M417.2 229.5 L414.3 233.3 L414.4 237.2 L415.1 239.7 M474.5 252.9 L478.2 253.4 L480.7 257.2 M417.8 272.1 L420.7 271.0 L421.1 268.3 M374.6 210.8 L377.6 213.4 L382.4 214.5 L387.0 216.4 L390.6 218.3 L393.3 218.3 M353.5 191.3 L350.2 188.6 L346.5 188.2 L343.7 190.5 M396.8 225.7 L394.5 228.6 L395.9 232.2 L398.4 234.5 L402.8 235.8 M399.3 165.2 L398.4 169.0 L399.9 172.3 L402.4 176.5 L400.6 180.6 M359.4 217.4 L363.9 216.1 L365.2 213.2 M482.1 140.3 L479.1 137.0 L475.0 137.0 M374.9 243.3 L371.0 242.8 L368.1 242.3 L367.0 237.5 L369.3 233.1 M443.7 280.9 L441.4 285.2 L436.8 286.1 M393.3 269.7 L388.5 269.3 L385.7 271.9 L385.7 274.6 L382.5 276.7 M447.0 286.5 L444.5 290.3 L441.4 289.6 L439.4 291.9 M381.1 199.7 L378.5 198.7 L378.4 195.2 L375.8 192.2 L373.2 189.7 L372.2 187.2 M439.3 144.4 L439.1 141.6 L440.9 139.8 M506.3 274.5 L507.6 271.9 L509.3 269.3 L510.2 266.4 M505.6 222.9 L507.7 218.6 L511.4 217.4 L514.8 214.0 L516.1 211.5 M410.0 252.0 L414.8 251.9 L417.6 254.3 L421.2 256.8 L423.9 257.2 M483.0 274.4 L485.1 276.5 L486.1 279.3 L489.1 282.5 M538.6 275.4 L536.3 276.5 L533.2 278.2 M523.8 225.8 L522.9 229.2 L526.6 232.2 L528.7 230.7 L532.3 231.3 M450.7 179.5 L452.4 181.3 L455.2 182.9 L456.9 184.9 L458.9 187.7 L461.0 190.5 M351.1 257.5 L348.5 254.4 L349.9 249.6 M549.0 243.0 L551.7 244.5 L554.3 246.8 L558.6 247.6 L561.6 249.2 L565.5 252.0 M446.9 236.3 L446.4 233.8 L443.5 230.1 L439.1 231.2 L438.7 235.3 M529.1 149.9 L528.7 152.7 L525.0 155.4 L525.3 159.0 L521.5 162.0 M364.2 195.7 L366.7 196.1 L370.0 194.5 L372.3 196.4 L372.3 199.8 M464.7 300.3 L462.8 303.6 L465.7 307.3 L464.8 310.9 M516.5 204.2 L515.6 199.4 L517.3 196.9 M405.0 247.0 L402.3 245.3 L400.1 243.5 L400.3 238.8 L397.9 235.3 L397.4 232.6 M523.5 265.1 L519.5 267.7 L515.0 268.3 M462.8 194.5 L462.6 197.2 L460.8 199.2 L458.3 200.3 M387.9 242.7 L390.4 241.4 L392.7 239.4 L395.8 237.6 L398.0 234.8 L399.4 230.3 M431.7 161.7 L434.8 162.5 L436.2 166.4 L437.5 169.6 L434.4 173.3 L432.3 176.6 M544.9 153.9 L547.3 155.8 L551.1 153.1 L555.9 154.4 M412.5 237.8 L412.0 233.7 L409.8 230.6 M398.4 195.2 L394.3 194.9 L392.1 197.0 L390.2 198.8 L385.8 199.7 L383.2 202.5 M503.0 246.8 L506.0 247.0 L510.0 246.0 L513.5 246.9 M435.5 182.8 L435.9 186.8 L437.1 191.6 L438.6 194.6 L440.4 196.9 M433.6 152.5 L431.4 153.9 L428.2 155.9 L423.7 156.5 L422.8 159.6 L425.0 161.7 M452.1 163.1 L454.3 161.8 L453.9 157.6 L455.2 154.4 L459.7 154.0 L461.9 152.5 M466.1 240.6 L469.2 241.7 L470.3 245.0 M510.4 179.0 L512.1 176.6 L515.8 176.3 L518.8 177.8 L520.0 181.6 M496.4 214.1 L494.6 211.1 L493.8 207.9 M434.9 235.9 L434.6 240.1 L436.5 244.0 L439.8 246.9 L442.6 250.5 L440.6 253.3 M464.0 182.6 L464.5 179.1 L466.4 175.6 L465.2 170.8 L463.6 166.3 M399.5 248.0 L399.2 252.1 L396.5 253.9 L394.1 255.6 L389.6 253.5 L387.1 253.0 M362.4 188.2 L360.2 190.1 L360.8 193.2 L361.2 196.3 L357.5 199.5 M397.3 261.5 L393.2 258.8 L393.7 256.3 L393.0 253.1 L389.9 251.2 M538.1 165.4 L538.1 161.9 L539.3 158.8 L540.6 155.5 L537.5 151.8 M452.2 177.8 L447.6 179.2 L444.1 177.5 M446.3 169.8 L447.5 172.3 L444.6 176.1 L446.8 179.7 L450.4 180.9 M537.7 174.4 L537.4 171.4 L537.2 167.7 L534.0 166.6 M486.0 210.7 L489.0 210.6 L492.0 212.8 L491.3 216.1 L491.6 221.0 L493.8 225.3 M522.4 261.4 L519.6 260.8 L516.4 263.0 M488.8 176.9 L492.8 177.4 L495.0 180.3 M393.9 172.7 L392.7 170.0 L389.6 168.7 M473.3 139.0 L475.6 137.7 L480.0 137.7 M560.6 193.6 L558.0 193.6 L556.6 190.7 L553.8 191.0 L552.2 186.9 M494.5 225.1 L498.8 227.2 L502.8 228.5 L507.6 230.0 L511.3 231.2 L513.0 235.6 M428.3 127.7 L425.6 125.0 L425.6 122.2 L428.5 120.2 M392.9 150.1 L388.2 150.5 L384.4 150.7 L383.4 147.8 L380.0 147.9 M404.9 125.0 L409.5 125.9 L412.8 128.6 L413.5 131.8 L412.4 134.6 L410.3 138.0 M522.8 134.6 L525.5 135.0 L527.8 133.3 L532.2 133.2 L536.3 134.7 M490.3 241.0 L487.7 238.6 L484.7 239.9 L482.0 240.1 L479.2 242.6 L477.0 244.5 M391.6 162.9 L388.0 165.2 L385.6 167.9 L382.8 169.8 L382.1 172.3 L377.5 173.8 M397.9 199.4 L394.8 199.6 L391.5 198.2 M438.3 123.4 L435.9 120.3 L438.4 116.8 L439.8 114.3 L437.3 110.8 M494.7 201.2 L494.1 197.3 L493.0 194.4 L496.0 191.2 M471.1 168.8 L467.4 168.0 L466.8 163.7 L462.3 162.4 M452.6 281.8 L449.7 282.3 L446.5 284.8 L443.0 283.4 L439.2 284.5 M395.3 268.5 L397.8 271.7 L399.3 274.9 L397.2 278.7 L398.6 283.0 L402.0 286.1 M533.8 209.8 L530.6 210.6 L526.8 209.6 L524.7 213.4 M391.3 144.1 L391.3 141.0 L389.6 138.3 L386.0 135.6 L385.2 131.4 L388.3 128.6 M366.9 154.3 L363.9 156.4 L359.9 158.6 L356.2 161.3 L354.1 165.8 L350.9 167.3 M505.9 260.7 L507.9 258.3 L506.1 253.7 L502.1 253.6 L499.3 254.7 M455.2 137.2 L457.3 135.6 L459.3 132.4 M552.5 239.4 L554.3 241.7 L556.5 243.4 L560.1 244.8 M520.1 214.8 L521.7 211.1 L520.2 208.2 M564.0 189.9 L565.9 187.8 L570.1 187.3 L573.1 185.8 L574.1 181.3 M442.5 275.0 L440.0 276.3 L438.5 278.4 L434.9 279.9 L431.6 279.6 M546.4 235.0 L541.8 234.9 L538.0 234.6 L534.5 233.9 L531.9 233.0 L531.6 230.2 M360.4 244.6 L361.5 242.2 L359.2 240.2 M449.1 272.0 L445.8 273.3 L441.3 274.3 L436.5 275.0 M507.1 204.7 L504.9 201.8 L505.6 198.3 L506.5 195.9 M450.8 297.6 L454.0 297.9 L456.7 297.8 L459.1 301.7 L460.5 305.0 L463.6 307.5 M356.5 173.3 L355.3 177.3 L356.6 180.1 L359.6 181.6 L362.8 182.2 L364.5 179.1 M424.4 256.6 L424.3 252.9 L422.9 250.8 L420.4 247.6 M542.7 275.9 L545.6 278.7 L547.3 281.5 L548.8 286.1 L551.4 289.6 M409.2 254.4 L407.2 250.0 L406.3 245.5 L402.5 244.6 M417.0 223.9 L419.6 225.6 L420.1 228.1 L421.9 232.6 L424.8 234.3 L427.1 236.5 M505.6 240.2 L509.3 238.1 L511.1 235.9 L509.0 231.4 L510.2 227.9 M561.2 214.1 L557.3 211.7 L553.6 210.4 L552.6 207.6 L554.0 205.5 L556.5 202.4 M437.0 138.3 L432.9 139.3 L429.8 137.1 L426.4 138.3 L422.2 138.8 L418.4 136.9 M540.8 167.8 L539.3 172.5 L540.4 174.9 L540.2 177.7 M381.9 193.7 L386.7 192.5 L389.6 195.9 L391.6 198.0 L394.8 199.6 M461.5 246.1 L465.5 244.4 L468.9 244.4 L471.3 241.2 L474.8 240.2 L478.8 238.8 M480.4 190.3 L482.6 191.9 L485.7 195.5 L489.1 195.5 L493.5 196.6 L496.8 195.0 M533.4 285.1 L531.1 287.6 L528.7 286.4 L525.0 286.6 M514.9 235.5 L514.5 232.8 L511.0 232.1 L509.0 235.4 L506.7 237.3 L503.3 236.5 M463.2 155.3 L467.9 154.2 L472.2 156.0 M538.1 260.7 L533.8 259.9 L531.6 258.0 M496.6 235.5 L492.5 237.7 L489.8 239.4 L487.5 238.3 L486.4 235.8 M437.7 269.3 L435.4 266.4 L435.9 263.7 M550.4 156.6 L551.9 154.0 L555.3 151.8 L559.1 151.6 M469.8 134.0 L467.1 137.5 L467.3 140.8 M451.5 251.0 L448.1 252.1 L444.1 250.7 L443.4 247.5 M541.3 258.7 L541.3 255.2 L538.9 253.9 L535.9 251.7 L535.9 249.0 L537.2 246.7 M432.3 150.1 L428.4 153.0 L428.1 156.1 L427.8 158.7 L429.3 162.3 M487.6 225.6 L490.0 222.0 L492.9 218.7 L491.0 214.1 L491.9 210.1 M365.9 216.2 L363.0 219.7 L358.8 221.5 L358.1 224.6 M408.3 130.0 L405.4 132.9 L406.5 136.4 L406.0 141.0 L405.8 143.8 L402.4 145.1 M372.0 216.0 L373.2 219.9 L376.7 221.8 L377.3 224.9 L375.3 226.9 L373.6 229.1 M396.0 141.0 L392.9 141.5 L390.4 142.7 M528.1 138.2 L525.4 134.4 L525.5 131.4 L525.9 128.5 M386.7 130.0 L384.3 131.4 L383.1 135.2 L382.2 137.6 L384.6 140.7 M460.1 172.1 L463.9 171.5 L465.7 175.3 L469.8 176.3 L471.0 180.7 L469.0 182.4 M401.3 142.6 L398.8 145.3 L396.2 145.9 L393.1 144.0 M393.4 163.8 L396.1 165.5 L398.0 168.7 L396.0 171.7 L395.4 174.2 L394.9 178.0 M403.6 120.9 L408.3 122.3 L411.4 123.1 L415.4 122.3 M441.9 234.5 L445.3 234.4 L449.2 232.3 L453.1 230.1 L452.4 227.3 M377.6 178.4 L377.7 182.3 L376.9 186.1 L380.3 188.2 L380.6 191.3 L379.1 195.3 M469.0 294.2 L466.7 298.5 L466.3 301.6 L463.5 302.8 L461.5 306.0 L458.8 305.3 M378.6 271.5 L375.9 270.9 L374.8 267.7 L376.5 264.4 L380.2 264.1 M390.7 130.8 L392.8 133.1 L395.5 136.0 L398.6 136.3 M509.3 256.4 L505.6 259.6 L503.3 260.9 L500.7 259.5 L497.9 260.1 M462.1 165.4 L467.0 165.6 L468.7 162.6 M551.6 196.3 L555.0 197.0 L557.3 195.3 L560.3 197.1 L561.5 200.6 L564.1 201.0 M407.5 240.3 L404.2 237.7 L403.9 234.9 L403.7 231.2 L406.3 227.4 M348.9 169.4 L349.2 173.5 L344.7 175.5 L342.3 174.1 M526.9 264.2 L524.2 263.9 L521.9 265.6 L518.1 267.1 M391.9 155.6 L390.8 152.4 L386.6 149.8 M432.4 208.5 L435.2 208.6 L438.9 206.0 M464.4 175.8 L465.2 172.3 L461.8 169.7 L458.9 167.9 M478.6 190.2 L480.8 191.5 L485.2 189.8 L487.3 186.6 L489.8 182.7 M423.2 275.3 L426.2 278.8 L424.6 283.4 L425.4 285.9 L425.3 288.5 M543.4 246.0 L543.6 249.3 L544.7 252.1 L548.4 252.5 L550.2 254.6 L553.1 258.3 M402.2 238.9 L397.4 238.6 L393.6 238.6 L390.5 240.6 L387.4 238.7 L384.9 240.9 M375.4 233.9 L372.5 234.9 L371.2 238.1 L371.0 241.6 L374.4 243.8 L377.3 241.8 M362.4 173.2 L361.5 170.4 L362.4 165.7 M545.6 238.7 L544.4 233.9 L542.5 230.2 M371.5 224.5 L373.2 228.0 L370.5 231.0 M471.9 137.6 L467.6 137.7 L465.1 133.8 L462.4 133.0 M421.6 176.5 L424.2 177.8 L423.6 181.6 L420.2 183.0 L417.4 186.1 M506.0 198.3 L507.3 201.9 L510.3 203.0 L513.8 203.0 L516.7 205.3 L520.8 203.2 M487.3 121.2 L491.5 120.2 L495.2 120.4 L498.5 122.3 L502.5 120.9 M357.9 165.6 L359.9 162.7 L361.6 160.9 L362.5 158.4 L367.3 158.8 L369.9 160.2 M491.0 229.9 L488.5 226.1 L489.8 221.7 L488.7 219.4 L486.0 216.6 M519.7 222.6 L518.7 227.2 L521.4 229.3 L522.9 232.8 L524.2 235.7 L528.0 237.4 M351.6 176.3 L349.0 174.1 L344.2 173.6 L341.9 177.6 L339.2 178.0 L337.2 174.4 M424.2 190.7 L424.6 187.4 L420.6 185.6 L417.7 182.6 L415.2 183.3 M554.1 177.3 L551.8 180.7 L553.8 184.0 M464.6 277.7 L467.2 277.0 L471.3 275.7 L473.1 272.4 M443.1 256.8 L439.6 256.4 L437.7 253.1 L437.0 249.6 M395.7 212.5 L393.3 215.5 L394.7 218.8 L398.3 218.7 M465.2 284.3 L462.4 282.1 L459.3 280.5 M373.5 126.9 L375.8 130.4 L379.6 133.4 L383.1 133.9 L386.8 132.6 M396.6 244.0 L395.0 247.2 L392.5 250.7 L389.4 252.6 L389.6 255.4 M362.4 138.1 L358.0 136.6 L356.0 132.5 L353.7 128.9 L354.0 124.5 M463.7 259.3 L467.1 260.0 L469.4 261.5 L470.7 265.9 L472.7 268.7 L474.4 271.3 M482.0 233.1 L477.9 233.9 L475.0 234.5 L472.4 237.0 L468.7 239.4 L464.8 238.2 M518.4 240.1 L518.4 242.8 L520.3 244.9 L523.6 248.6 L525.5 251.4 M456.1 167.8 L459.7 166.5 L459.9 161.8 M472.8 173.7 L469.5 176.2 L464.7 176.0 L462.9 179.8 M424.1 279.6 L420.4 281.5 L418.1 282.5 M446.4 145.3 L442.9 146.6 L442.9 150.2 M424.5 203.0 L422.3 204.3 L419.9 207.2 L416.8 209.6 L416.0 213.2 M362.3 213.7 L364.8 217.5 L367.1 220.1 L366.8 224.3 L366.1 228.9 L368.3 230.1 M497.8 187.5 L498.5 183.8 L499.6 180.3 L499.9 176.1 L496.5 173.6 M463.5 175.1 L466.9 177.8 L468.4 181.5 M417.4 199.8 L415.7 202.2 L414.9 205.9 L412.4 208.4 M402.1 287.0 L398.9 285.4 L394.6 283.6 L392.4 279.7 M379.5 174.0 L382.5 173.5 L383.4 170.6 L380.7 166.8 L379.3 164.7 M394.3 209.4 L399.1 210.8 L403.2 212.8 L406.7 210.5 L405.6 206.7 M530.1 195.1 L529.3 191.1 L526.8 189.6 L524.7 185.6 M514.8 264.7 L515.9 267.2 L515.6 270.0 L515.4 274.5 L519.5 276.0 L522.0 279.2 M374.4 155.5 L372.6 153.4 L370.2 151.1 L369.6 147.4 M553.2 221.2 L557.5 221.5 L559.9 220.7 L560.2 217.3 L563.4 216.2 M416.8 160.4 L412.0 159.6 L407.6 157.6 L404.6 158.2 M532.9 278.9 L535.7 277.0 L538.6 274.7 L541.2 274.7 L544.4 274.7 M475.3 154.6 L476.7 158.3 L476.0 160.8 L472.9 161.0 M511.2 280.6 L509.6 276.5 L508.3 272.8 L506.9 270.3 L505.5 267.8 L503.0 266.6 M530.2 153.7 L525.5 153.0 L522.6 148.9 L524.7 145.6 M512.4 244.2 L509.2 246.3 L506.1 244.2 L502.9 245.2 L501.2 247.2 L498.6 248.7 M457.2 297.9 L454.8 299.2 L452.8 303.3 L456.0 306.5 L455.9 311.2 M419.8 196.2 L422.5 196.6 L423.9 193.8 L421.4 190.0 L416.7 188.3 M406.1 212.9 L407.4 216.6 L406.9 219.9 M357.6 168.9 L354.9 167.2 L352.7 166.1 L349.9 168.4 M405.4 216.2 L409.4 216.1 L413.7 213.4 L418.3 212.7 L420.5 216.9 L420.0 219.6 M398.5 178.5 L399.3 175.9 L400.0 172.8 L401.7 169.8 L403.2 166.2 M475.0 292.1 L473.1 295.4 L475.2 297.8 L475.7 300.3 M541.8 214.8 L542.0 217.5 L544.5 220.3 L547.3 219.0 L551.1 217.1 M540.1 239.9 L541.9 241.8 L540.7 244.6 L536.4 244.9 L535.5 247.6 L533.7 249.8 M494.8 244.6 L491.8 246.2 L488.9 243.2 L489.0 240.3 L487.6 236.5 L489.9 234.6 M477.0 259.8 L473.3 260.8 L472.0 262.9 L469.2 266.7 L466.4 267.8 M549.7 210.4 L547.5 208.2 L544.3 207.1 L541.2 206.2 L541.2 201.9 L539.8 197.9 M431.0 174.4 L427.6 170.9 L427.4 168.0 L426.3 165.7 L423.2 164.5 L419.9 166.2 M358.6 240.4 L357.3 242.5 L357.5 247.1 L360.6 250.1 M517.4 294.1 L514.0 291.7 L512.0 289.9 M397.2 190.3 L401.3 191.0 L403.2 193.4 L402.9 198.4 M365.2 152.4 L369.7 151.1 L370.1 146.2 M402.0 282.3 L400.0 284.0 L397.6 285.5 L392.7 285.2 L388.6 286.3 M529.7 251.3 L530.4 253.8 L531.4 256.7 L530.0 260.8 M499.4 141.0 L495.1 142.8 L492.4 140.8 L489.2 138.2 L490.1 134.1 L491.3 129.9 M425.5 146.2 L421.9 146.9 L419.8 145.0 L416.6 142.0 M524.2 182.4 L524.6 185.8 L528.1 187.5 L532.8 188.4 L536.3 191.0 L539.4 194.1 M348.2 251.8 L352.4 248.9 L353.9 245.8 L357.2 246.1 L359.6 241.9 M405.8 294.9 L407.7 293.0 L411.0 289.9 M564.4 172.7 L563.5 175.4 L563.9 180.3 L566.6 182.5 M512.6 269.0 L514.7 267.0 L517.5 267.2 M401.4 212.7 L398.5 212.0 L396.3 213.5 M472.7 253.6 L474.1 251.3 L476.9 248.6 M386.3 210.4 L390.3 210.8 L393.4 209.1 L396.5 207.6 L399.2 206.8 M532.1 258.5 L531.7 261.6 L530.1 266.2 L530.8 271.0 M479.3 281.5 L481.8 284.8 L481.7 287.6 L484.9 289.6 M479.6 247.8 L475.2 248.8 L472.9 245.4 L470.5 242.7 M444.2 125.2 L440.7 126.2 L437.0 126.7 L432.8 125.0 M543.3 185.5 L546.7 183.6 L550.4 186.9 L554.9 188.7 L555.0 192.5 M468.7 141.1 L467.9 136.7 L466.6 133.7 L463.5 133.8 L459.4 133.1 L456.4 136.8 M542.6 176.9 L541.8 174.0 L542.3 169.2 L538.3 167.5 L535.3 165.4 M414.7 212.1 L412.2 213.6 L411.1 216.7 L411.2 221.7 L408.2 223.6 M534.4 246.2 L536.1 248.2 L536.7 251.6 L536.3 255.6 L533.0 256.8 L530.9 259.6 M405.6 228.6 L407.9 232.1 L410.5 233.7 L413.8 236.6 M432.4 137.5 L428.6 136.6 L426.2 138.6 L427.4 143.3 L426.0 146.7 L421.1 146.6 M377.7 153.4 L378.2 157.2 L376.0 160.4 L375.6 164.5 L373.1 165.3 L370.4 166.2 M515.5 192.1 L519.4 192.8 L523.9 194.8 L525.1 198.0 L529.8 198.8 M515.2 227.9 L515.2 231.1 L515.4 233.7 M353.7 196.2 L350.3 199.0 L346.8 198.6 L343.2 198.6 L339.0 200.2 M499.7 267.2 L496.8 268.8 L492.3 268.0 M435.8 157.8 L432.9 161.1 L429.2 164.2 L430.2 168.8 L431.1 171.5 M480.2 269.5 L476.2 271.8 L471.4 272.6 L466.9 271.1 L463.3 274.0 M508.1 172.6 L504.1 171.1 L503.6 167.7 L503.2 164.0 L505.5 161.8 M398.0 183.6 L395.3 182.0 L392.8 183.4 L390.3 181.5 M487.4 276.3 L485.7 279.5 L487.8 281.8 L491.6 283.4 M369.4 203.7 L367.2 206.8 L363.3 208.0 L362.6 212.1 L361.9 216.5 M383.6 239.7 L387.3 239.3 L390.7 239.0 L393.6 235.9 M397.1 162.0 L395.0 160.1 L391.9 158.6 L388.2 158.1 L386.1 154.7 M384.0 199.0 L382.2 195.3 L378.2 194.7 M502.8 264.2 L505.8 261.0 L509.1 260.9 L510.1 256.6 L514.1 256.5 M418.3 169.7 L418.4 166.7 L421.9 165.8 L424.9 164.5 L429.8 165.5 L434.4 166.0 M504.7 278.3 L505.5 275.1 L504.3 270.8 L501.9 269.7 L498.8 268.8 L495.8 265.5 M411.5 272.9 L410.2 270.3 L408.1 267.7 L406.1 264.1 L407.9 260.9 L410.0 258.6 M498.6 278.0 L501.9 277.1 L505.5 275.4 M509.4 254.7 L510.3 251.9 L511.5 249.3 L515.5 248.5 L520.2 247.2 L524.3 249.2 M508.5 287.1 L512.5 286.0 L516.2 283.5 L519.6 281.2 L522.1 283.2 M458.8 238.9 L460.4 235.8 L462.0 231.2 L460.5 226.9 L456.8 223.8 L453.9 224.5 M495.0 137.8 L497.8 137.4 L501.6 140.2 L502.4 144.6 L505.9 146.1 M452.7 257.6 L453.0 253.3 L451.8 251.0 M373.5 238.3 L374.3 242.2 L373.2 245.9 M484.0 187.9 L481.2 186.6 L478.6 187.7 L475.6 186.5 M525.7 214.6 L523.8 218.5 L525.0 220.8 L525.1 223.5 L521.5 225.5 L520.8 229.0 M517.1 237.0 L518.2 232.3 L522.1 229.7 L525.6 228.1 L527.9 225.7 L532.6 226.4 M509.9 239.5 L509.8 244.0 L512.9 246.0 M372.8 238.9 L371.0 235.5 L373.8 231.5 L378.6 231.3 M509.0 256.7 L505.6 257.6 L503.4 261.7 L503.4 265.4 L507.4 267.0 L511.5 268.9 M509.0 260.2 L511.0 264.1 L507.7 267.7 L507.3 272.3 L502.8 274.2 M350.9 231.1 L352.7 235.3 L352.2 239.8 M389.5 208.1 L386.8 209.3 L384.3 208.3 M356.7 229.1 L359.2 233.2 L362.5 232.9 L364.7 229.5 M441.1 199.3 L436.6 200.1 L436.1 204.7 L431.3 206.1 L428.9 204.7 M478.0 218.7 L480.4 221.5 L483.1 221.3 L484.4 218.4 L486.6 214.1 L485.5 211.3 M492.7 148.1 L488.8 150.0 L487.8 154.7 L487.0 158.6 L485.4 161.4 M500.3 127.1 L501.2 130.3 L503.3 132.1 L502.0 135.7 L504.1 138.6 L502.3 142.8 M426.3 136.3 L423.5 133.6 L419.1 134.7 L414.6 137.0 L411.1 136.5 L408.3 138.7 M479.8 285.8 L478.4 281.1 L476.5 279.3 L474.5 274.8 L469.9 273.6 M395.9 213.2 L392.6 210.0 L388.0 211.3 M483.1 186.9 L483.6 183.7 L487.6 182.1 L492.4 181.1 L495.5 184.2 L497.1 186.3 M381.3 239.9 L383.8 239.5 L387.9 237.6 L388.2 233.9 L384.7 231.4 M469.0 264.0 L465.6 261.2 L464.5 258.5 L467.5 254.6 L471.9 252.2 M529.3 201.1 L531.5 199.6 L534.1 196.2 L534.9 193.4 L535.5 190.6 L535.8 187.9 M352.3 235.6 L352.4 231.8 L351.2 227.6 L351.3 224.1 M546.4 246.2 L549.0 245.7 L552.7 244.7 L554.9 243.6 L555.4 239.0 L555.3 235.8 M375.2 167.2 L380.2 167.6 L383.2 168.1 L387.3 166.7 L390.9 168.5 M503.8 204.3 L499.8 206.0 L498.1 208.5 M454.5 164.2 L458.7 163.1 L462.4 165.0 M371.1 198.6 L371.7 193.7 L375.7 192.2 L378.7 189.6 M512.6 265.6 L515.8 262.1 L519.2 261.8 M431.2 294.0 L430.7 291.1 L426.3 290.4 L424.3 287.2 M488.6 244.3 L486.3 240.0 L487.2 236.2 M416.4 121.5 L411.9 121.6 L410.1 117.0 L407.1 113.0 L407.3 109.8 L405.8 106.3 M428.8 181.2 L425.6 184.1 L423.0 183.4 L420.4 187.6 L421.5 192.0 L422.9 194.7 M397.7 175.4 L395.2 173.4 L394.3 170.6 L389.9 168.7 M355.4 251.7 L354.2 254.1 L352.0 257.3 L350.6 261.1 L347.3 261.8 M549.0 228.5 L548.7 224.6 L550.2 222.0 L550.3 218.5 L552.2 214.6 L555.0 212.1 M440.6 278.0 L441.9 275.0 L440.6 272.1 L441.3 267.9 L444.7 266.8 L445.2 262.3 M390.4 254.5 L387.2 250.8 L384.0 252.1 L380.7 255.9 L377.0 255.6 L373.8 254.8 M469.7 193.7 L471.0 196.7 L473.3 199.4 M398.8 135.3 L395.3 136.1 L393.8 134.1 M554.6 173.1 L556.7 174.8 L560.7 176.3 L563.2 174.4 L563.6 171.3 M397.2 262.2 L393.2 261.1 L391.1 259.3 M431.4 284.6 L428.6 282.5 L425.6 281.5 L421.8 278.8 L419.2 277.5 M496.9 241.3 L494.5 245.5 L493.6 250.3 L492.4 253.4 L490.2 257.7 L486.4 260.2 M469.4 232.8 L473.6 234.4 L476.5 235.8 M388.9 230.5 L387.8 233.1 L391.2 236.1 L394.1 238.3 L396.4 236.8 L395.0 232.3 M489.7 237.4 L491.3 241.4 L492.9 244.0 M537.3 245.2 L533.5 247.6 L534.4 251.5 L531.8 254.6 L528.9 256.7 L525.1 255.8 M414.7 206.1 L413.0 204.0 L411.2 202.2 L407.6 202.4 M442.9 280.2 L441.0 281.8 L438.1 282.2 L434.3 281.8 L432.2 280.0 L433.7 275.9 M508.7 180.5 L506.1 176.4 L503.7 173.6 L503.3 170.7 M386.4 193.9 L388.9 194.7 L391.2 196.0 M507.6 217.3 L512.2 217.2 L515.4 217.1 L517.2 213.3 L520.3 210.6 L523.1 208.3 M559.4 180.1 L557.5 183.1 L558.6 186.6 L559.8 189.9 L558.6 192.8 M397.4 278.9 L396.9 275.5 L399.8 274.0 L403.3 274.0 L406.4 272.2 M495.2 212.2 L498.4 212.5 L501.0 212.1 L505.0 210.3 M405.6 138.3 L408.6 137.2 L409.7 133.6 M457.0 263.7 L455.6 266.1 L454.3 268.3 L451.6 269.3 L449.2 271.6 L445.7 272.1 M513.6 223.7 L513.0 220.4 L511.5 218.3 L511.8 214.5 M447.4 251.6 L450.6 253.7 L452.0 257.1 L453.7 259.9 M373.0 189.7 L370.7 186.9 L370.1 181.9 L372.0 178.7 L375.5 177.2 M389.9 253.6 L392.6 255.2 L394.9 257.5 M429.8 136.3 L431.2 132.1 L433.9 130.0 L436.5 128.8 L440.5 128.2 M385.3 243.3 L383.7 247.1 L385.1 251.2 L385.3 254.6 M501.7 263.7 L502.2 259.3 L501.3 256.7 L498.0 254.8 M437.7 160.7 L437.6 157.2 L439.2 154.4 L440.6 151.7 L437.2 148.5 L434.3 147.1 M563.3 178.7 L560.4 182.1 L557.4 183.2 L553.3 185.9 M374.1 147.2 L373.6 149.7 L372.4 153.2 L375.4 155.9 L379.5 155.4 M368.6 216.7 L369.4 214.0 L371.9 211.7 M468.5 178.2 L471.3 180.5 L472.5 182.7 L471.3 185.9 M387.7 282.1 L386.4 286.1 L383.1 287.5 L380.8 288.9 M391.9 287.8 L394.7 288.8 L396.4 291.4 L398.5 294.6 M528.9 153.0 L526.3 154.1 L523.1 154.8 L521.7 158.9 L520.3 161.7 M388.0 255.8 L392.1 254.8 L394.9 258.8 L399.0 257.8 L400.1 253.6 M541.5 254.4 L539.3 251.0 L539.6 248.3 L543.8 246.0 L548.3 244.8 M447.5 253.5 L447.4 251.0 L446.4 247.2 L447.8 244.5 L444.8 241.4 M359.6 211.6 L362.8 210.1 L365.3 208.2 L368.8 208.2 M558.3 205.0 L561.5 207.7 L564.1 208.7 L566.9 210.7 L569.9 213.5 L572.1 212.1 M533.8 287.2 L534.5 289.8 L532.1 292.6 L529.6 292.2 L528.3 288.3 L526.5 284.9 M420.4 152.5 L416.0 152.5 L414.6 149.8 M424.8 266.0 L421.7 265.8 L417.8 267.0 L416.0 269.2 L413.3 269.1 L410.0 269.6 M473.3 289.6 L474.8 285.7 L474.2 282.9 L471.5 281.3 L467.7 282.2 M405.2 145.0 L408.8 142.2 L413.2 140.5 L414.5 137.2 L413.1 134.2 M381.5 263.0 L386.3 263.3 L389.7 260.1 L391.6 255.6 M527.3 250.5 L529.1 246.3 L528.9 242.3 L533.4 240.1 M469.1 171.8 L468.4 167.6 L466.5 163.8 L464.2 161.8 L460.5 163.0 M368.4 159.5 L366.7 163.6 L364.9 168.2 L363.6 170.4 L361.6 174.0 M491.2 230.1 L493.7 229.2 L493.7 225.4 L489.5 223.1 M386.6 207.6 L386.2 212.0 L384.8 214.4 M465.0 155.7 L467.9 153.9 L471.5 153.5 L475.0 155.6 L479.5 156.8 M402.7 167.2 L405.2 165.1 L404.7 162.2 L401.5 161.9 M483.2 292.9 L483.6 295.6 L486.5 296.4 L488.7 297.8 L492.5 300.3 L495.0 298.2 M430.4 230.9 L429.6 227.7 L429.8 224.1 L433.3 222.6 L437.4 221.9 L441.1 221.1 M494.2 228.7 L498.1 227.2 L500.8 228.6 L500.7 231.8 L498.7 236.2 M526.0 265.1 L522.7 263.5 L520.5 260.7 M475.2 229.9 L477.0 233.3 L480.1 235.8 M503.0 171.8 L499.8 172.7 L497.9 175.6 L499.9 178.0 L502.7 178.7 L505.0 176.1 M460.6 147.9 L457.5 146.6 L455.4 148.6 L454.1 151.3 L455.1 155.3 L452.5 158.8 M370.7 149.1 L368.9 146.9 L365.2 145.0 L361.1 145.8 M356.1 255.1 L359.4 254.2 L362.6 253.3 M556.5 191.9 L560.8 189.7 L562.9 191.9 L563.0 194.5 L561.9 197.6 M455.8 167.6 L457.6 170.9 L461.4 174.1 L465.9 173.0 L468.1 171.0 L470.4 167.9 M457.4 145.4 L460.4 145.1 L464.4 144.5 M514.1 243.3 L510.9 244.2 L509.9 248.4 L507.0 250.6 M440.3 267.5 L443.9 264.4 L447.2 264.1 M386.5 192.4 L384.1 188.7 L379.7 188.0 L375.7 186.1 L372.0 182.8 M502.3 199.1 L498.2 200.7 L495.6 201.6 L493.2 204.6 L491.4 208.7 M522.3 148.2 L517.8 149.8 L516.0 151.6 L516.5 155.4 L514.3 156.7 M420.7 133.2 L425.0 135.3 L427.4 137.6 L428.6 140.3 L433.0 141.9 L437.4 143.0 M379.8 200.6 L379.2 204.1 L379.6 207.1 L382.8 209.7 L385.5 210.3 L389.1 209.9 M508.9 198.0 L505.3 198.7 L503.0 201.7 L500.4 200.7 M347.2 232.1 L345.5 236.6 L345.7 240.7 M433.2 242.5 L432.7 238.8 L433.4 235.4 L433.5 232.8 L432.6 229.0 M345.1 243.8 L348.4 245.1 L348.2 248.1 L351.9 249.5 L354.1 252.2 L356.8 254.1 M396.2 221.1 L392.2 221.7 L389.7 223.9 L387.3 228.1 M412.7 169.0 L415.8 169.9 L418.4 170.7 L421.4 170.0 M514.8 269.9 L513.4 266.7 L511.8 263.8 L508.8 262.6 M394.6 139.2 L396.9 138.0 L400.1 140.5 L399.1 144.1 L397.1 147.2 L394.9 149.0 M410.7 226.7 L409.6 223.1 L408.5 220.7 L408.0 216.3 M382.0 151.5 L379.1 150.0 L379.1 146.9 L377.4 143.7 L379.5 139.7 L380.2 135.6 M419.8 236.2 L422.5 239.4 L425.3 240.4 M394.2 161.3 L394.2 157.4 L390.7 155.3 L387.2 158.6 L387.0 162.5 M373.1 194.9 L369.7 198.1 L366.5 196.4 L363.7 194.5 M398.5 208.8 L401.9 208.3 L403.6 205.1 M433.6 135.4 L437.9 135.9 L440.3 137.5 L443.8 138.9 L446.8 135.6 M351.0 221.0 L349.6 223.4 L345.3 223.3 L342.7 221.6 M444.1 304.3 L442.0 302.3 L439.4 298.6 L439.6 296.0 M508.6 200.1 L506.9 202.3 L502.3 201.6 L501.0 204.1 L496.4 204.2 M388.0 247.9 L385.0 250.6 L382.2 251.9 L381.1 255.1 M379.7 213.3 L376.8 212.1 L372.1 210.4 L372.3 207.9 M488.7 128.1 L490.2 130.7 L493.5 129.9 L496.5 132.8 L495.5 135.3 L491.2 137.3 M554.1 204.0 L550.5 202.3 L550.1 198.9 L549.2 194.5 M390.2 179.0 L391.6 176.9 L395.0 175.8 L396.9 172.9 M366.1 190.1 L367.3 194.0 L369.5 196.8 M502.4 202.3 L501.5 205.1 L504.0 207.9 L507.4 209.6 M352.5 175.4 L353.1 179.4 L356.8 181.1 L359.1 179.4 L357.8 175.8 L354.9 174.6 M362.0 245.0 L361.2 242.5 L357.9 241.7 L356.2 239.6 L354.9 235.1 L352.0 231.8 M458.1 238.8 L455.6 236.2 L456.8 232.5 M483.0 264.9 L485.0 261.1 L487.7 260.2 L490.3 256.8 M473.0 285.9 L475.4 285.2 L479.1 284.3 L483.5 283.4 L487.8 285.7 M384.1 179.2 L386.0 181.6 L386.1 184.7 M551.6 187.7 L553.4 190.8 L554.6 194.5 L558.1 195.5 L559.1 199.3 L558.1 202.3 M381.6 211.2 L383.3 215.9 L387.7 217.7 M517.5 194.5 L519.6 191.3 L520.3 186.5 L518.0 183.9 L516.4 181.6 M370.9 237.5 L367.1 240.0 L363.3 240.9 M374.0 211.0 L374.8 207.8 L372.8 203.7 L368.6 202.4 L365.6 204.0 M473.3 157.9 L470.4 154.1 L472.6 149.8 M465.7 266.6 L462.1 269.0 L462.8 273.3 L464.2 276.0 L462.0 279.6 M489.1 229.9 L492.1 230.6 L493.8 232.6 L496.3 236.6 M508.2 172.3 L505.1 169.0 L504.9 166.0 L508.6 164.2 L508.1 159.3 L509.2 156.5 M360.1 269.0 L358.2 266.2 L358.7 262.9 L362.0 262.0 M397.3 190.0 L399.0 185.6 L401.1 182.2 L404.3 178.9 M514.5 256.7 L512.4 254.2 L509.9 252.1 L506.5 254.3 L502.3 255.9 M524.6 128.7 L526.6 124.7 L530.5 123.8 M460.5 133.2 L460.3 137.1 L459.1 141.9 M517.7 235.4 L518.5 238.8 L521.2 242.1 M460.3 169.8 L458.5 172.3 L455.6 171.6 M482.4 169.6 L482.8 172.4 L484.3 176.6 L488.0 177.7 L489.8 181.2 L493.6 184.2 M401.4 203.5 L397.6 203.5 L392.8 203.3 L390.2 204.3 L389.0 207.1 M466.6 271.9 L464.0 275.9 L462.8 279.2 L458.9 281.8 M433.1 278.1 L431.7 280.3 L428.7 279.9 L425.9 278.7 M549.2 155.5 L554.0 155.4 L556.5 153.6 L556.5 150.3 L552.2 147.8 M471.6 205.1 L472.8 200.4 L475.1 198.2 L476.2 195.3 M479.4 154.4 L478.5 150.7 L476.8 147.6 L474.6 145.6 L470.4 146.7 L466.2 146.3 M487.8 209.9 L489.3 212.4 L487.4 215.8 L486.5 218.2 L484.5 219.7 L485.8 223.1 M359.3 257.5 L356.8 253.3 L357.2 248.4 M414.1 162.9 L416.3 160.2 L419.2 160.9 M367.4 135.5 L362.8 134.1 L361.4 131.1 L357.8 130.6 L354.8 128.5 L355.6 123.8 M396.9 196.6 L395.5 194.1 L394.1 190.5 L394.9 185.8 L391.3 183.1 M406.9 188.6 L405.8 191.0 L404.8 193.7 L406.8 195.4 L410.2 196.7 M501.3 182.4 L504.7 183.0 L509.1 182.1 L512.2 178.5 L512.0 173.6 M501.4 213.6 L505.4 214.0 L509.4 211.4 L508.6 207.9 M364.6 202.4 L363.9 204.9 L365.6 206.7 L366.5 209.2 M403.1 185.7 L400.0 187.0 L398.7 190.5 L398.3 194.0 L395.4 194.5 M348.4 202.9 L348.0 199.9 L343.9 198.8 L340.7 199.0 L339.5 201.8 M540.3 152.1 L538.7 147.9 L541.0 145.6 L539.9 142.2 M396.5 248.5 L392.9 247.0 L392.0 242.2 L388.2 239.1 M394.8 137.1 L391.8 139.0 L391.2 142.7 L389.9 146.9 L386.8 149.2 M370.2 198.1 L373.4 195.9 L377.9 196.6 L382.1 196.6 M501.4 193.8 L500.8 190.4 L501.9 186.7 L504.8 185.6 L507.6 184.2 L511.6 185.5 M361.1 226.9 L359.2 224.0 L357.3 222.2 L353.4 219.5 L349.1 219.1 M498.5 185.2 L493.6 186.0 L493.1 189.6 L491.8 193.8 M399.6 129.6 L402.5 129.4 L405.1 128.3 L407.3 125.0 L409.0 122.6 L409.0 117.8 M485.8 229.1 L487.6 231.9 L490.6 233.0 L491.3 236.0 L490.1 240.2 M475.7 271.3 L472.2 272.4 L468.7 274.8 L464.8 273.2 L464.4 268.7 L467.2 267.3 M496.6 143.7 L496.5 146.9 L492.0 149.0 L488.7 148.1 L487.5 145.8 M410.4 150.6 L414.3 151.1 L417.0 152.2 L419.7 151.8 L420.5 147.2 L422.2 143.7 M388.4 217.5 L392.4 215.7 L393.3 213.1 L397.7 213.0 L399.0 210.3 M492.9 135.3 L496.4 135.5 L499.9 133.8 M401.0 288.8 L404.7 291.9 L404.6 296.4 L403.8 300.8 L405.2 305.5 M476.5 211.7 L479.3 207.6 L477.2 204.7 L474.3 204.3 L469.8 202.4 M479.3 290.5 L481.7 289.1 L482.9 286.0 M446.9 140.4 L448.8 137.4 L449.6 134.3 L446.9 132.7 M509.3 272.2 L505.0 272.7 L501.5 271.2 L500.7 267.0 L499.3 264.4 L496.1 260.9 M428.1 282.3 L425.4 285.1 L422.3 287.8 L419.4 287.2 M366.0 263.0 L362.8 263.6 L360.5 265.2 M477.9 146.0 L476.1 149.2 L472.5 152.3 M501.0 280.6 L500.2 277.1 L496.7 274.2 L496.3 269.7 M379.3 245.7 L381.8 246.1 L384.2 247.5 L386.9 249.9 M524.9 159.4 L521.8 161.9 L517.9 162.4 M474.0 165.6 L477.1 165.6 L479.7 165.3 M474.2 272.3 L473.0 276.8 L469.8 277.7 L467.4 275.4 L466.5 272.7 M354.5 260.8 L351.6 259.0 L348.0 261.8 M433.5 125.4 L436.7 122.9 L437.5 120.2 L437.2 117.6 L434.2 115.4 M424.6 263.8 L423.0 267.6 L420.1 268.8 L417.8 271.2 M397.4 201.1 L400.3 199.7 L402.2 196.6 L401.3 192.2 L404.4 189.2 L406.7 185.2 M527.9 187.3 L529.8 184.8 L532.3 185.0 L533.3 187.8 L531.7 190.2 M518.2 131.2 L515.5 130.7 L514.2 128.2 L514.7 125.2 M373.9 220.4 L374.0 217.3 L378.7 215.7 L382.6 215.1 L386.0 217.5 M556.4 195.3 L557.1 198.6 L555.8 201.9 L554.5 204.7 L552.0 207.3 L554.2 211.1 M431.8 168.4 L433.1 172.6 L435.9 173.7 L438.0 175.6 M520.4 173.2 L522.2 169.2 L525.2 166.7 L529.0 167.9 M500.7 165.7 L496.6 163.7 L492.0 162.2 L487.9 163.1 M419.5 162.0 L417.1 163.4 L414.6 164.7 M448.2 123.2 L448.5 119.6 L447.6 115.7 M419.4 256.7 L415.0 258.9 L413.4 262.2 M366.4 265.8 L368.3 269.2 L372.9 269.7 M397.0 246.6 L399.0 244.6 L398.3 241.3 M408.2 274.5 L405.7 273.6 L403.8 269.5 L403.6 264.6 L402.8 261.5 L403.9 258.6 M528.6 234.2 L530.1 231.5 L532.5 227.9 M431.6 228.3 L435.4 227.5 L437.4 230.6 L439.1 232.6 L442.5 234.0 L444.8 231.3 M474.9 204.0 L474.5 207.9 L477.9 210.0 L479.9 212.2 M482.3 211.5 L478.7 209.2 L474.5 210.3 L469.8 209.0 L469.4 204.3 L467.1 203.0 M476.5 295.8 L478.8 297.7 L480.5 301.1 L481.0 305.2 M417.6 211.6 L416.5 208.5 L417.6 205.9 L421.2 205.2 M440.6 248.9 L438.5 246.1 L435.8 244.6 M554.2 204.1 L550.2 205.8 L547.7 207.4 L544.8 207.1 M397.6 178.2 L400.7 176.4 L402.6 174.8 L405.3 173.3 M392.0 149.2 L396.0 146.9 L399.1 146.9 L402.4 150.0 L406.3 151.2 M468.7 253.0 L466.1 250.2 L462.5 250.8 L460.8 254.8 L459.6 258.4 M547.9 195.9 L547.2 192.3 L544.5 190.4 L541.5 189.8 L539.9 187.6 L536.5 185.0 M481.8 240.2 L484.0 242.2 L487.6 241.6 L488.9 236.8 M361.4 242.0 L360.1 245.1 L355.6 246.9 L352.3 247.6 L350.7 245.5 M364.2 176.8 L368.2 176.0 L371.2 173.9 L374.4 172.2 L378.1 169.5 M543.9 164.5 L543.5 167.2 L542.1 171.5 L542.1 175.2 L542.2 178.0 L539.9 180.8 M541.1 220.6 L541.1 215.7 L543.8 212.9 L546.4 214.2 L547.9 217.7 M374.5 218.4 L371.7 222.6 L374.2 226.7 L372.8 229.5 L368.9 232.1 M519.7 206.0 L522.0 209.5 L526.8 208.5 L529.2 205.0 L531.7 203.3 L534.3 200.9 M370.6 184.4 L370.4 188.2 L371.2 191.9 L375.1 193.8 L376.7 196.0 M373.9 213.3 L370.0 211.6 L367.2 210.9 L362.4 210.2 L360.5 214.0 L358.0 217.9 M446.2 152.3 L449.9 151.1 L451.1 147.6 M357.9 266.9 L356.3 264.9 L355.2 261.2 M508.7 200.7 L509.0 205.7 L505.4 208.2 L502.5 208.4 L499.6 205.3 L497.0 205.9 M519.9 265.3 L515.8 262.7 L513.3 261.2 L512.0 257.4 L508.4 256.2 M465.6 253.8 L462.9 256.5 L463.5 261.1 L460.6 264.5 L461.7 267.4 L460.5 271.7 M382.8 201.4 L380.1 202.6 L379.2 205.9 L379.7 210.6 L381.9 213.0 L384.1 215.9 M536.2 204.5 L539.9 206.2 L543.0 206.2 L546.8 207.7 L550.8 206.2 L551.0 203.5 M513.9 222.0 L512.8 217.2 L511.6 214.5 L510.6 211.1 L512.9 206.9 M461.3 126.0 L462.2 123.3 L466.9 122.8 L469.5 122.5 L472.8 123.6 M426.3 180.5 L429.2 182.1 L431.7 181.8 L434.9 182.6 M487.0 297.9 L483.6 299.9 L482.5 302.5 L479.5 306.0 L475.2 304.5 L473.6 300.9 M387.6 162.6 L389.5 159.1 L386.7 155.8 L383.7 156.5 L379.4 156.1 M417.5 194.9 L418.4 191.1 L422.4 189.5 L423.0 185.1 M458.4 119.5 L461.1 122.1 L465.0 124.0 L468.1 121.0 L468.5 116.7 L465.3 113.2 M387.6 285.8 L385.6 283.9 L383.8 280.2 M369.5 230.4 L372.7 227.9 L372.5 224.9 L375.5 223.7 L379.2 221.8 M354.7 243.8 L351.7 240.1 L347.3 238.5 L343.0 238.7 L340.7 237.6 L337.8 235.3 M367.7 250.3 L366.7 253.0 L370.4 256.0 L374.2 255.0 L376.9 258.5 L378.3 261.4 M496.8 273.9 L497.2 276.9 L496.9 281.6 L494.1 283.0 L490.7 283.7 L489.6 287.1 M547.4 223.0 L545.3 221.4 L543.2 219.8 L540.2 220.2 L537.6 221.5 M489.2 191.1 L492.5 188.8 L495.2 185.8 L495.9 182.8 L498.1 179.2 L498.6 174.5 M512.1 170.4 L510.5 174.1 L506.8 173.8 L502.3 174.4 L500.1 172.3 L499.0 169.3 M415.1 273.0 L412.2 276.7 L413.2 280.1 L417.9 280.4 L419.6 283.6 L422.3 287.8 M423.6 164.7 L426.2 168.2 L425.2 172.2 L428.1 175.2 L427.4 178.8 L427.4 182.9 M373.6 147.1 L369.5 146.6 L366.9 146.2 L364.5 148.4 L361.8 149.1 L358.4 151.3 M479.5 218.4 L474.8 217.9 L474.0 215.5 L473.7 210.6 L476.3 208.9 L480.6 208.8 M550.6 231.6 L549.8 228.6 L550.0 224.0 L552.4 223.2 L554.7 221.4 L557.6 222.1 M440.8 281.5 L444.0 280.8 L447.8 284.0 M375.5 134.2 L374.5 137.6 L376.6 139.1 L379.5 138.3 M371.7 267.5 L372.1 271.7 L375.4 275.1 L379.1 275.0 L382.5 277.1 M554.2 163.5 L555.0 160.9 L558.3 158.4 L561.6 159.8 M506.9 254.8 L504.5 252.1 L506.8 248.3 L508.5 244.4 L510.9 241.1 M390.7 251.3 L393.5 250.8 L396.2 248.0 M517.3 189.4 L517.4 185.3 L516.4 180.8 L516.1 177.8 L518.2 174.9 M479.8 290.8 L475.1 290.9 L471.2 291.3 L468.4 294.6 M384.4 182.9 L382.9 185.0 L378.9 186.1 L377.3 188.0 L374.5 187.8 L371.7 189.6 M541.6 282.3 L541.8 284.9 L542.3 287.8 L538.7 290.4 M476.5 252.9 L472.1 252.1 L468.9 255.8 L465.7 258.3 L465.2 260.9 L462.5 264.2 M471.5 165.1 L469.6 167.1 L465.5 168.4 L460.6 168.9 L456.5 169.6 L455.8 172.8 M401.5 191.7 L400.9 189.2 L399.4 186.5 M407.6 214.4 L405.3 217.7 L400.5 218.5 M499.3 244.2 L500.0 248.5 L503.8 249.8 L504.8 254.1 L502.5 258.5 M478.7 231.0 L480.5 234.8 L482.9 237.7 M370.0 178.3 L365.8 178.3 L365.0 175.8 L361.5 174.8 M556.5 197.5 L558.2 202.0 L559.2 204.6 L563.8 205.1 M403.3 243.1 L400.0 243.0 L395.1 243.3 L392.9 244.5 M461.8 258.4 L465.6 260.5 L466.3 264.1 L469.0 265.6 L471.6 265.8 M351.7 167.9 L353.9 164.9 L357.3 162.3 L356.7 158.5 M360.4 165.2 L358.6 160.6 L358.2 158.1 L354.9 155.9 M485.4 247.3 L488.4 245.9 L492.2 247.1 L492.4 250.4 L491.2 254.9 M518.8 250.0 L516.7 254.5 L512.7 254.4 L509.9 255.3 M476.8 283.7 L479.5 284.3 L482.7 282.1 L486.3 280.9 M362.3 203.8 L358.9 204.6 L355.3 201.3 L354.6 198.0 L355.0 193.6 L353.9 190.1 M527.9 165.3 L527.9 162.1 L525.1 158.3 L526.2 153.6 L528.4 150.0 L529.4 145.8 M417.2 130.9 L416.2 134.7 L415.7 137.6 L412.8 139.5 M377.4 161.2 L378.6 163.4 L379.2 165.9 M457.4 266.7 L460.8 270.2 L461.9 273.6 L464.6 277.6 L466.7 280.9 L466.4 283.4 M442.2 165.0 L441.0 160.7 L438.4 157.0 L434.7 156.9 M420.1 300.5 L418.2 303.0 L418.4 306.4 M406.1 244.2 L403.1 243.4 L402.6 239.3 M383.1 245.1 L384.4 240.7 L387.8 239.4 L392.6 240.4 L394.0 244.3 M482.1 175.8 L481.4 172.0 L477.2 170.6 L474.5 168.2 M411.6 227.2 L407.0 227.0 L402.8 226.4 L399.4 226.9 L397.6 229.6 L395.3 231.9 M362.3 167.6 L364.8 163.3 L365.2 160.7 M357.8 199.4 L355.9 203.4 L356.2 208.0 L353.3 209.0 M531.6 277.8 L533.3 273.2 L531.5 271.4 M529.7 163.9 L527.1 160.9 L527.0 157.9 L522.8 156.2 L519.9 152.9 L520.2 149.9 M466.8 286.7 L470.6 287.4 L473.3 285.8 L473.3 281.2 M467.1 165.4 L469.1 163.0 L469.9 160.0 L470.9 157.0 L472.3 154.1 L470.1 150.5 M428.3 155.2 L426.1 151.4 L422.0 148.7 L419.4 148.5 L418.0 152.1 L416.0 154.6 M430.6 187.1 L426.7 188.5 L423.2 190.4 L419.3 191.4 M378.8 185.0 L376.8 188.0 L375.3 190.2 L371.9 189.1 L367.3 189.8 L363.8 192.6 M396.5 141.9 L400.9 141.3 L404.1 142.2 L407.2 139.8 L407.6 135.4 L408.7 132.6 M442.9 174.8 L443.5 171.4 L441.1 170.2 L439.8 168.0 L436.4 166.9 L435.9 163.9 M535.0 217.2 L532.5 214.2 L534.8 210.5 M404.2 212.6 L402.7 216.1 L405.6 218.6 L410.5 217.9 M406.3 212.1 L402.7 214.0 L400.0 212.3 M533.4 187.5 L530.7 187.5 L527.7 184.4 L524.4 184.8 L520.5 187.6 L517.6 190.8 M382.4 237.9 L377.4 237.4 L376.1 232.9 M347.8 185.1 L345.3 186.1 L341.6 187.8 L338.8 190.2 L334.8 191.6 M505.5 188.5 L508.5 188.1 L510.9 185.0 L513.2 183.4 L516.5 181.3 L519.2 181.1 M510.4 156.9 L512.5 160.9 L513.7 163.4 M389.0 165.6 L392.3 167.5 L392.9 172.4 L396.0 173.0 L399.3 175.0 L399.4 179.0 M516.9 247.6 L514.5 248.4 L511.3 250.6 L509.3 253.5 M553.0 227.6 L550.6 230.1 L546.5 230.4 L545.4 227.5 L548.0 224.9 M546.5 237.8 L544.1 239.8 L540.7 242.9 L540.5 247.3 M507.3 212.0 L508.5 208.3 L508.7 203.7 L507.3 201.0 M387.3 152.6 L384.7 149.8 L386.4 145.5 L384.7 143.1 M416.2 152.3 L416.4 149.2 L420.7 147.6 L422.3 144.7 L424.6 142.4 L424.8 137.7 M353.4 236.0 L354.3 238.9 L353.4 241.4 L350.3 241.3 L347.8 239.2 L345.5 240.8 M475.8 236.7 L479.5 238.1 L483.8 238.9 M426.6 167.5 L427.9 163.5 L424.7 159.7 L421.2 160.3 L418.4 164.4 M387.0 173.2 L388.2 176.5 L384.9 180.1 L381.1 181.6 M348.2 223.4 L350.9 223.1 L353.5 222.3 L355.5 218.9 M354.4 215.0 L351.8 215.8 L350.4 219.8 L346.0 219.7 L343.4 221.8 L341.0 224.5 M397.0 131.7 L401.2 131.1 L402.9 128.9 L401.0 126.2 M528.4 213.0 L524.5 216.1 L524.8 220.0 L524.7 224.1 L526.1 226.6 L525.1 230.8 M507.3 219.9 L510.4 216.3 L512.0 213.2 L514.3 211.1 M413.3 119.2 L417.7 120.8 L420.8 121.7 L423.1 123.0 M451.7 268.8 L454.5 270.8 L457.4 272.3 M368.0 152.8 L368.0 156.6 L365.9 160.5 L365.1 163.8 L362.5 164.5 L359.2 162.8 M460.9 152.6 L462.2 150.1 L464.5 148.9 L468.5 146.4 L470.6 143.7 M439.9 264.0 L443.8 261.4 L447.6 261.3 L450.8 262.2 L453.7 265.4 M496.4 213.5 L494.8 209.6 L491.1 208.0 L488.1 206.7 L485.4 205.6 L483.4 203.6 M387.1 275.2 L382.4 276.3 L379.8 272.7 L375.5 273.9 M420.5 216.8 L422.9 220.0 L426.0 223.5 L429.2 223.2 M549.4 186.9 L552.7 187.1 L555.8 185.3 L558.7 187.5 M511.9 206.3 L508.0 208.3 L508.2 212.4 M500.9 127.4 L498.7 130.1 L497.8 132.7 L494.5 134.3 L491.9 136.2 M353.7 215.5 L356.0 219.4 L355.7 223.8 L358.8 225.1 L362.6 222.5 L363.0 217.8 M412.4 131.2 L410.8 127.1 L413.0 123.6 L415.6 119.7 M436.1 124.7 L438.4 121.2 L442.6 120.5 M551.1 196.9 L549.5 192.7 L547.2 191.0 L547.1 187.1 L550.7 185.6 L552.2 183.2 M459.7 254.4 L456.3 256.2 L452.9 257.2 M369.2 247.3 L365.7 244.6 L363.9 240.8 L364.1 238.2 L366.3 236.8 M386.8 164.0 L382.9 163.5 L379.5 160.7 M445.1 159.9 L442.1 158.0 L443.0 154.6 L446.2 152.7 L448.9 148.9 M477.7 262.4 L476.1 266.0 L475.7 270.1 L478.2 271.8 L481.8 271.8 L484.6 272.7 M394.5 110.7 L390.7 112.9 L386.5 115.1 L385.5 118.1 L386.2 120.6 L387.4 123.1 M384.3 169.3 L388.3 171.6 L391.8 173.8 L392.0 176.8 L392.7 181.0 L396.1 181.6 M508.6 159.5 L511.0 157.4 L510.3 154.5 L507.6 152.7 L504.0 154.5 L504.0 158.3 M385.8 236.4 L384.2 232.4 L380.7 229.5 M422.6 138.5 L419.8 138.9 L417.9 140.4 M362.7 212.4 L365.5 212.3 L368.1 210.0 M410.9 163.5 L411.9 168.1 L413.8 171.5 L416.4 175.0 L419.7 177.0 L423.0 176.4 M500.8 129.7 L502.3 125.3 L505.7 123.1 L508.8 125.3 L511.2 124.5 M348.0 199.1 L346.1 201.0 L347.0 204.3 L343.6 207.1 M382.4 168.1 L384.6 171.9 L387.7 175.8 L389.4 178.7 L393.2 181.7 M489.9 212.7 L488.1 215.5 L487.8 219.0 M513.1 254.8 L516.4 253.2 L520.2 256.1 M355.1 190.6 L356.5 194.9 L358.2 197.7 L359.0 200.2 L363.9 201.2 M413.7 260.3 L418.4 259.3 L422.1 256.2 L421.5 253.2 L423.4 251.2 L426.5 251.6 M542.4 211.7 L544.1 214.2 L544.2 217.2 L547.4 220.1 L551.8 220.5 L556.2 221.0 M437.4 147.1 L438.5 150.7 L436.6 153.3 L433.5 152.5 M418.7 228.2 L418.3 230.8 L415.7 234.6 L416.5 238.0 M445.2 279.0 L443.1 281.7 L443.0 284.4 L441.7 287.6 L443.0 290.7 L445.1 292.5 M476.2 131.7 L479.8 134.6 L481.4 137.7 L480.4 141.0 L477.6 141.8" fill="none" stroke="#646464" stroke-width="0.75"/>
<path d="M475.3 175.3 l-1.3 -1.5 M344.3 178.9 l-2.0 0.4 M420.2 256.7 l-2.0 0.3 M470.7 140.6 l1.8 -0.8 M525.9 183.3 l-2.0 0.2 M391.5 187.1 l-1.6 -1.2 M499.8 137.2 l-1.3 -1.5 M412.1 127.2 l-1.8 0.9 M380.9 254.6 l-0.9 -1.8 M331.0 216.4 l2.0 -0.3 M496.4 270.2 l-2.0 0.2 M538.7 255.4 l-1.7 1.0 M492.3 256.8 l0.7 1.9 M460.4 174.3 l-2.0 0.0 M492.3 170.1 l-2.0 0.1 M558.5 189.7 l-2.0 -0.1 M505.7 175.0 l1.9 -0.5 M549.9 241.4 l-1.3 -1.5 M454.8 122.9 l1.4 1.4 M480.6 137.1 l-1.9 -0.6 M362.9 209.7 l1.7 -1.1 M491.4 253.1 l-1.4 1.4 M415.4 238.8 l1.9 -0.6 M394.1 154.1 l1.9 -0.5 M370.4 250.2 l-2.0 -0.0 M429.0 172.3 l-2.0 0.4 M355.4 280.1 l1.1 1.7 M534.9 207.3 l-1.5 1.3 M391.8 176.0 l-0.7 1.9 M478.4 237.3 l1.9 0.5 M501.3 146.5 l1.9 -0.5 M360.8 197.0 l-1.9 0.7 M558.0 194.2 l1.9 -0.7 M537.9 266.4 l-1.0 -1.8 M543.5 189.5 l-1.9 0.7 M479.6 256.5 l0.9 -1.8 M372.2 235.3 l-1.8 -0.8 M469.3 300.1 l-1.1 1.7 M548.6 183.8 l-1.3 1.5 M381.3 264.6 l-1.9 -0.7 M509.2 177.8 l1.5 -1.3 M504.3 149.0 l1.2 -1.6 M547.2 203.3 l-1.5 1.3 M456.8 168.0 l-1.2 -1.6 M353.1 230.8 l0.7 1.9 M457.6 244.6 l-0.1 2.0 M480.4 131.4 l1.5 -1.3 M363.5 166.5 l-1.3 -1.5 M417.5 267.0 l-1.1 -1.6 M371.8 244.8 l-1.4 1.5 M538.0 206.3 l1.3 -1.5 M503.1 192.2 l2.0 -0.3 M384.0 157.2 l-2.0 0.4 M396.7 197.0 l1.5 -1.4 M354.7 257.7 l1.4 1.4 M401.1 156.2 l0.8 1.8 M488.7 290.5 l-0.5 1.9 M430.7 177.2 l-0.6 -1.9 M431.2 230.9 l-1.0 1.8 M462.3 125.8 l1.8 -0.9 M481.9 249.7 l-0.3 -2.0 M431.3 252.7 l0.4 2.0 M450.9 183.2 l-0.7 1.9 M511.4 180.4 l0.8 -1.8 M346.6 207.2 l-2.0 0.2 M567.3 154.9 l-1.1 1.7 M530.4 263.6 l0.3 -2.0 M508.0 172.7 l-2.0 0.2 M360.3 199.8 l1.8 0.8 M566.1 219.9 l0.0 2.0 M464.0 300.8 l-1.3 1.5 M484.4 166.0 l-0.1 2.0 M574.2 171.3 l1.8 -0.8 M495.2 183.6 l0.9 1.8 M562.8 149.6 l0.1 -2.0 M387.1 252.9 l1.3 1.5 M497.1 247.7 l-1.9 0.7 M371.2 137.9 l1.9 -0.6 M503.3 146.9 l-0.9 -1.8 M370.7 140.8 l2.0 0.3 M438.4 165.2 l0.4 -2.0 M357.6 242.5 l-0.5 -1.9 M353.2 247.1 l1.4 1.5 M433.6 236.0 l0.6 -1.9 M464.8 168.5 l0.1 -2.0 M407.1 277.7 l-0.8 1.8 M344.4 275.7 l2.0 0.0 M496.2 130.9 l-2.0 0.3 M452.5 150.3 l1.1 1.7 M404.4 300.0 l-1.2 1.6 M461.2 233.3 l-1.9 0.5 M340.9 189.1 l-2.0 -0.1 M358.2 198.8 l1.7 -1.0 M495.2 194.1 l0.8 -1.8 M415.4 281.9 l-1.8 0.8 M335.1 215.0 l-2.0 -0.2 M413.8 250.8 l-1.5 1.3 M489.0 258.8 l1.4 -1.5 M506.8 265.0 l2.0 0.3 M485.2 182.6 l1.1 -1.7 M458.5 155.7 l-1.9 -0.7 M373.4 208.0 l-1.7 1.0 M487.7 124.0 l1.4 -1.4 M525.1 220.7 l0.3 2.0 M483.8 210.6 l-1.7 1.0 M500.2 184.6 l-0.4 -2.0 M509.4 151.4 l-0.7 1.9 M562.7 177.9 l1.9 0.7 M437.4 280.3 l1.9 -0.6 M522.1 166.4 l-2.0 -0.4 M422.7 257.4 l-0.1 -2.0 M371.2 136.8 l-0.1 2.0 M364.2 219.4 l1.8 -0.9 M529.0 306.1 l1.9 -0.7 M509.7 133.4 l1.0 1.7 M463.5 300.5 l-2.0 -0.1 M426.6 236.3 l-1.8 0.8 M528.8 133.3 l-2.0 -0.2 M389.0 141.2 l1.8 0.8 M366.6 149.3 l-1.5 -1.3 M507.1 292.0 l1.9 -0.6 M501.1 294.2 l0.4 -2.0 M480.4 179.0 l-0.9 -1.8 M503.3 226.1 l0.7 1.9 M498.2 233.2 l1.3 -1.5 M460.4 234.8 l2.0 0.4 M459.7 131.2 l-1.9 -0.7 M389.1 277.0 l-2.0 -0.4 M521.1 242.7 l-1.9 -0.6 M459.6 122.2 l-0.8 1.8 M481.3 257.7 l-2.0 -0.1 M527.3 153.5 l0.1 2.0 M491.9 208.7 l-0.8 1.8 M509.8 300.0 l-1.1 -1.7 M385.8 229.1 l1.2 1.6 M502.3 129.1 l-1.7 -1.0 M533.4 134.4 l1.2 1.6 M414.1 229.9 l0.2 2.0 M355.1 160.6 l0.8 1.9 M554.3 184.1 l-1.6 -1.2 M495.0 136.0 l1.3 1.5 M520.9 281.5 l0.3 -2.0 M443.2 263.0 l-1.8 -0.9 M449.2 162.6 l0.4 -2.0 M379.9 285.9 l0.8 -1.8 M436.4 302.7 l-1.4 -1.5 M449.4 243.5 l-1.9 -0.6 M520.6 210.5 l-0.0 2.0 M554.9 145.7 l-1.8 1.0 M383.4 278.7 l-1.0 1.7 M374.8 178.8 l-0.4 -2.0 M354.8 139.5 l1.9 -0.6 M334.5 215.8 l0.8 -1.8 M518.4 124.7 l1.6 1.2 M371.8 121.3 l1.9 0.5 M496.8 248.8 l-1.3 -1.5 M519.0 129.4 l1.1 1.7 M520.2 287.4 l-2.0 0.2 M496.6 226.1 l1.0 1.7 M417.1 216.6 l-1.2 1.6 M369.3 149.2 l-1.9 0.5 M495.9 220.0 l1.5 -1.3 M338.8 201.3 l1.9 0.5 M561.1 198.1 l1.9 -0.7 M429.4 168.7 l1.8 -0.8 M569.3 159.7 l-0.1 2.0 M555.0 237.1 l-1.8 0.9 M509.0 128.5 l1.7 -1.1 M558.1 232.8 l-0.0 2.0 M461.7 284.6 l0.9 -1.8 M336.1 233.5 l2.0 0.1 M391.2 194.3 l1.5 -1.4 M504.2 286.1 l-0.9 1.8 M362.5 173.0 l1.5 -1.3 M539.1 293.1 l-0.2 2.0 M494.0 250.1 l0.5 -1.9 M457.0 243.1 l0.3 -2.0 M369.3 248.9 l0.5 -1.9 M401.4 127.5 l-0.0 -2.0 M511.4 182.4 l-1.7 1.1 M540.7 213.8 l-0.5 1.9 M551.1 167.1 l-0.8 1.8 M533.5 290.0 l2.0 0.4 M528.2 246.7 l0.6 -1.9 M553.6 251.5 l-1.9 -0.7 M425.9 184.5 l-1.3 1.5 M519.8 194.2 l-1.1 1.7 M521.9 157.9 l-2.0 0.3 M532.5 166.7 l-1.5 1.3 M346.5 258.9 l-2.0 -0.1 M477.9 285.0 l1.8 0.9 M550.0 155.8 l1.7 1.0 M384.1 234.4 l1.8 0.8 M455.9 151.7 l-1.3 -1.5 M384.7 118.9 l0.3 -2.0 M392.2 143.8 l-1.4 1.4 M390.1 278.7 l0.5 1.9 M403.4 288.8 l-2.0 -0.4 M558.2 173.8 l-1.8 -1.0 M533.6 289.3 l1.1 -1.7 M460.3 164.0 l1.2 -1.6 M517.0 164.9 l2.0 -0.3 M493.7 291.0 l1.7 -1.0 M442.3 298.7 l-1.9 -0.6 M551.9 258.7 l1.5 1.3 M467.6 154.4 l-1.5 1.3 M404.9 149.5 l1.3 -1.6 M574.4 194.4 l1.4 1.4 M514.6 244.9 l1.9 0.5 M386.8 273.2 l-0.9 -1.8 M488.5 172.9 l1.7 -1.1 M572.6 159.5 l1.8 -0.9 M479.3 274.6 l2.0 0.3 M522.4 197.9 l1.9 0.5 M419.0 132.5 l2.0 -0.3 M540.7 194.7 l-1.6 1.2 M379.7 139.4 l-2.0 0.2 M452.0 256.6 l1.6 1.2 M440.4 274.3 l0.8 1.8 M345.2 248.3 l-0.5 1.9 M493.5 154.8 l1.8 0.9 M535.9 173.7 l0.7 -1.9 M427.3 185.2 l-1.9 -0.5 M507.9 274.7 l2.0 -0.0 M529.1 180.0 l0.4 2.0 M349.7 199.0 l0.9 1.8 M517.9 181.7 l-1.5 -1.4 M438.3 241.1 l1.8 -1.0 M518.3 201.1 l1.9 0.5 M542.0 210.5 l1.6 -1.2 M386.6 155.4 l1.3 -1.5 M546.4 170.2 l-1.9 -0.7 M345.2 210.4 l-2.0 0.4 M411.5 121.5 l2.0 0.3 M496.1 202.3 l1.7 -1.1 M565.6 194.3 l-1.9 -0.6 M549.6 217.6 l1.3 1.5 M516.1 198.4 l1.4 1.4 M358.9 138.2 l0.9 -1.8 M380.7 151.0 l-0.2 -2.0 M373.8 149.4 l-0.0 -2.0 M487.7 217.1 l-1.5 -1.4 M399.4 249.0 l-0.1 -2.0 M386.2 209.5 l-1.9 0.5 M379.0 186.6 l-1.9 0.6 M547.9 224.7 l-1.1 1.7 M403.9 189.3 l-1.9 -0.7 M522.2 145.7 l-1.5 -1.3 M442.7 124.9 l1.7 1.0 M550.0 190.9 l0.4 2.0 M468.2 139.5 l1.2 -1.6 M523.5 203.8 l1.5 1.3 M462.3 298.4 l-1.1 -1.7 M530.8 288.7 l-2.0 -0.2 M494.5 238.8 l-1.8 -0.8 M392.0 256.3 l0.0 2.0 M411.9 275.2 l-1.9 0.5 M479.6 156.0 l1.2 -1.6 M429.0 257.8 l-0.2 2.0 M355.2 141.6 l1.9 -0.5 M488.1 244.2 l-1.2 1.6 M443.7 118.9 l-1.1 1.6 M487.1 236.9 l-1.5 1.3 M501.9 266.1 l-1.8 0.9 M426.8 253.4 l-0.2 -2.0 M430.5 241.1 l-0.2 2.0 M502.6 295.7 l1.0 1.7 M487.9 225.3 l1.1 -1.7 M465.4 242.4 l-1.9 -0.5 M523.4 204.3 l-2.0 0.0 M392.0 198.2 l-1.9 -0.7 M380.0 140.3 l-0.4 2.0 M421.3 178.4 l-1.8 -1.0 M351.0 264.9 l1.9 -0.7 M520.5 121.8 l1.8 0.9 M446.7 264.6 l1.4 -1.5 M348.6 242.6 l-1.9 -0.7 M414.3 125.9 l-1.2 -1.6 M381.6 267.4 l2.0 -0.4 M553.9 220.4 l-1.9 0.7 M402.4 242.3 l-1.1 1.6 M337.2 229.8 l-1.0 1.7 M525.2 156.3 l0.7 1.9 M405.0 287.2 l-0.1 2.0 M421.3 193.2 l0.6 1.9 M519.2 188.1 l-1.0 1.7 M429.1 289.7 l0.8 1.8 M424.3 260.0 l0.7 -1.9" fill="none" stroke="#2a2aff" stroke-width="1.1"/>
<path d="M521.5 230.9 l1.3 1.6 M525.2 137.7 l-0.9 -1.8 M549.7 167.8 l-2.0 -0.0 M341.5 231.8 l0.4 2.0 M360.7 158.3 l-1.5 1.3 M430.9 166.3 l-0.4 2.0 M507.4 153.1 l-1.6 1.1 M507.0 272.2 l-1.8 0.8 M449.7 264.6 l-1.6 1.2 M516.3 151.9 l2.0 -0.1 M377.4 114.4 l-1.8 0.8 M397.3 108.4 l0.7 -1.9 M465.0 238.7 l-0.3 -2.0 M423.3 168.3 l2.0 -0.1 M451.7 145.2 l-0.0 -2.0 M541.6 188.5 l0.0 2.0 M391.5 236.3 l0.4 -2.0 M330.9 227.4 l-0.4 -2.0 M459.7 181.2 l-1.0 -1.7 M442.1 296.2 l-1.4 -1.4 M392.4 113.0 l-0.1 2.0 M497.0 118.6 l1.1 1.6 M391.7 133.8 l1.3 -1.5 M422.8 206.8 l1.4 -1.5 M485.4 132.9 l1.3 -1.5 M417.2 171.2 l-0.7 1.9 M519.4 301.7 l-0.1 -2.0 M417.4 209.1 l1.4 -1.4 M389.1 260.9 l1.2 -1.6 M475.3 290.5 l-2.0 0.3 M404.0 165.0 l-1.6 1.2 M409.1 236.8 l-0.2 -2.0 M452.0 264.9 l2.0 -0.1 M531.5 241.6 l2.0 -0.4 M512.4 209.9 l-1.2 -1.6 M464.8 274.6 l-2.0 -0.1 M535.2 222.4 l-2.0 -0.0 M389.6 268.4 l2.0 -0.2 M442.3 118.4 l-0.1 2.0 M394.6 190.8 l1.4 1.4 M461.1 168.6 l0.8 -1.8 M394.5 294.0 l-0.3 -2.0 M359.3 274.6 l0.9 1.8 M529.2 144.3 l-2.0 0.1 M499.0 230.3 l-0.2 2.0 M530.7 195.7 l-0.6 -1.9 M343.5 212.2 l-0.9 1.8 M535.8 241.5 l2.0 0.4 M477.7 175.8 l-1.9 0.7 M559.5 231.1 l1.0 -1.7 M347.7 234.6 l-1.0 1.7 M387.9 272.8 l1.9 0.6 M551.6 239.6 l0.2 -2.0 M500.8 131.5 l-1.8 0.9 M339.4 204.3 l-0.6 1.9 M442.9 134.8 l-0.8 1.8 M528.3 128.0 l-2.0 -0.4 M554.1 164.7 l1.6 1.2 M363.2 278.7 l-1.5 -1.3 M412.5 148.9 l1.4 1.4 M365.9 271.2 l-1.9 0.7 M434.9 119.9 l-0.0 -2.0 M524.1 180.9 l-1.8 0.9 M418.4 214.3 l0.8 1.8 M381.1 216.1 l-2.0 -0.4 M412.6 186.4 l1.4 -1.5 M331.7 222.6 l0.1 2.0 M355.6 181.9 l1.5 1.3 M560.0 227.9 l-1.9 0.7 M539.9 164.5 l-2.0 0.1 M514.7 142.4 l-1.6 1.2 M376.8 157.9 l-1.5 1.3 M555.3 175.8 l0.9 -1.8 M509.9 265.8 l1.7 -1.1 M540.4 192.3 l-1.6 -1.3 M387.2 185.7 l-0.7 1.9 M556.7 229.6 l-1.9 0.6 M524.0 135.7 l2.0 0.0 M520.7 168.3 l0.8 1.8 M474.6 261.8 l-0.3 2.0 M543.5 226.1 l1.8 0.8 M423.7 245.1 l-2.0 0.0 M401.7 248.2 l1.0 -1.7 M362.2 170.3 l-0.6 1.9 M474.5 144.3 l-0.8 1.8 M430.1 134.2 l1.3 1.5 M445.3 236.7 l1.3 1.5 M432.4 303.4 l-0.6 -1.9 M344.3 212.4 l-0.7 -1.9 M522.7 228.5 l-1.5 1.3 M460.1 248.6 l-1.7 -1.1 M415.6 275.3 l-0.6 -1.9 M567.5 195.7 l-0.7 1.9 M454.7 178.1 l-2.0 -0.1 M541.3 289.2 l0.2 -2.0 M529.7 165.7 l-1.7 -1.1 M333.9 204.4 l1.0 -1.7 M356.2 274.4 l-1.9 0.4 M568.0 221.0 l-2.0 0.1 M511.7 231.2 l-0.1 -2.0 M416.3 280.7 l-2.0 0.0 M409.9 257.8 l-1.0 1.7 M467.9 297.4 l-1.9 0.6 M571.7 199.7 l-1.4 1.4 M435.6 289.7 l1.9 0.6 M439.2 162.3 l-1.3 -1.5 M496.1 171.9 l-0.3 -2.0 M462.6 276.1 l0.4 2.0 M555.9 169.3 l-0.6 1.9 M404.5 284.0 l0.6 -1.9 M485.7 161.3 l1.5 1.4 M426.5 290.1 l-0.9 1.8 M396.0 204.0 l-1.5 1.4 M492.2 275.2 l1.7 1.1 M521.2 137.9 l-1.7 -1.1 M478.9 229.9 l-1.8 -0.8 M535.4 219.7 l1.8 0.8 M416.7 209.7 l-0.3 -2.0 M491.3 210.5 l-1.8 -0.9 M513.4 261.6 l-1.8 1.0 M490.3 266.1 l-0.9 -1.8 M388.6 272.8 l-0.4 2.0 M528.2 257.7 l-0.4 -2.0 M380.3 182.8 l-1.7 1.1 M382.1 172.3 l-1.3 -1.5 M384.3 167.6 l0.4 2.0 M546.4 179.3 l1.3 -1.5 M412.6 138.0 l0.2 2.0 M476.8 303.8 l1.2 1.6 M474.1 274.7 l1.3 1.5 M557.9 163.1 l0.1 -2.0 M480.8 299.7 l1.8 0.9 M545.0 230.9 l-1.0 -1.7 M419.9 162.4 l0.9 1.8 M444.5 248.1 l-1.7 1.0 M401.9 200.8 l-0.5 1.9 M436.5 302.8 l2.0 -0.1 M435.0 120.3 l-1.7 1.1 M569.0 193.7 l1.0 -1.7 M449.5 138.6 l1.3 -1.5 M550.8 145.7 l-2.0 -0.1 M484.6 242.3 l-1.8 -0.9 M451.0 271.1 l-0.7 1.9 M474.6 158.0 l-1.7 1.0 M501.6 300.1 l1.8 0.9 M510.9 214.5 l1.8 -0.9 M529.8 214.1 l-2.0 -0.4 M390.8 245.6 l-1.8 -0.9 M418.7 230.5 l1.0 -1.7 M536.3 163.5 l1.4 1.4 M405.5 190.2 l1.3 1.6 M525.8 222.0 l-0.8 -1.8 M406.5 290.9 l1.0 1.7 M507.9 185.3 l-1.8 0.8 M503.7 145.3 l-2.0 0.3 M371.8 115.6 l-1.2 -1.6 M571.0 175.8 l-1.0 1.7 M516.7 123.9 l0.8 1.8 M475.9 252.9 l-1.1 -1.6 M473.0 248.3 l-2.0 0.1 M411.0 289.8 l-0.0 -2.0 M498.7 126.5 l-0.9 1.8 M488.5 156.8 l1.9 0.7 M494.1 171.4 l-2.0 0.3 M359.4 125.1 l-1.4 -1.5 M533.9 289.8 l1.6 -1.1 M375.6 253.2 l1.8 -0.8 M417.9 166.0 l-0.5 1.9 M532.3 136.3 l1.8 -0.9 M491.7 259.9 l2.0 -0.2 M499.7 237.7 l-1.2 -1.6 M393.7 209.3 l2.0 0.2 M373.4 174.4 l1.6 -1.1 M517.4 270.0 l-0.8 -1.8 M486.0 167.9 l1.7 1.1 M483.8 298.7 l1.9 0.6 M385.4 181.3 l-0.1 -2.0 M357.4 146.5 l1.1 1.7 M423.7 257.9 l1.5 -1.3 M496.6 208.1 l0.2 -2.0 M552.3 210.7 l1.5 -1.3 M494.4 287.6 l-1.6 1.2 M414.3 155.8 l0.0 2.0 M405.0 219.7 l1.3 1.5 M532.2 233.8 l-1.9 -0.6 M501.5 137.5 l-1.9 0.5 M560.8 233.4 l-0.6 1.9 M401.6 278.7 l2.0 -0.0 M548.7 187.3 l-1.2 1.6 M386.4 267.2 l1.6 -1.2 M514.4 229.3 l0.3 2.0 M361.4 136.4 l1.5 -1.3 M423.1 214.8 l-0.9 1.8 M374.1 287.3 l-2.0 -0.3 M396.6 225.5 l-0.2 -2.0 M464.1 256.2 l-1.7 -1.1 M437.6 123.5 l-0.4 2.0 M494.5 300.4 l-0.8 -1.8 M515.8 185.7 l1.4 1.4 M392.3 273.0 l0.0 2.0 M496.5 197.9 l-1.1 1.7 M514.2 127.5 l0.9 -1.8 M513.4 281.6 l-0.7 1.9 M426.6 270.6 l-2.0 -0.0 M501.9 138.8 l-1.0 -1.7 M455.4 145.3 l-1.8 -0.8 M526.0 168.0 l-0.7 -1.9 M500.3 212.9 l-0.4 -2.0 M482.4 211.8 l1.2 1.6 M355.5 281.1 l1.0 1.8 M442.4 232.3 l0.2 -2.0 M480.3 282.6 l-1.8 -0.8" fill="none" stroke="#e01010" stroke-width="1.1"/>
<path d="M521.3 126.7 L520.0 127.4 L518.6 128.1 L517.0 128.6 L515.4 129.0 L513.9 129.1 L512.5 129.1 L511.4 128.9 L510.5 128.6 L509.9 128.0 L509.7 127.4 L509.8 126.6 L510.3 125.8 M519.1 127.7 L520.3 127.9 L521.3 128.3 L522.0 128.9 L522.4 129.6 L522.4 130.5 L522.1 131.4 L521.4 132.4 L520.5 133.3 L519.2 134.1 L517.9 134.8 L516.4 135.3 L514.9 135.6 M523.8 135.8 L523.8 136.7 L523.3 137.8 L522.3 138.8 L520.8 139.9 L518.9 140.7 L516.9 141.4 L514.9 141.8 L513.0 141.9 L511.5 141.7 L510.3 141.3 L509.6 140.6 L509.5 139.6 M508.2 145.3 L509.1 144.4 L510.5 143.4 L512.2 142.5 L514.3 141.7 L516.5 141.1 L518.6 140.8 L520.5 140.7 L522.0 140.9 L523.0 141.4 L523.4 142.1 L523.2 143.0 L522.5 144.0 M510.4 154.0 L510.1 153.3 L510.2 152.4 L510.8 151.4 L511.7 150.5 L512.8 149.6 L514.3 148.9 L515.8 148.4 L517.4 148.0 L518.9 148.0 L520.2 148.1 L521.2 148.5 L521.9 149.1 M522.4 156.6 L521.8 157.5 L521.0 158.4 L519.9 159.2 L518.7 159.9 L517.2 160.5 L515.8 160.9 L514.3 161.1 L513.0 161.1 L511.9 160.8 L510.9 160.4 L510.3 159.8 L510.0 159.1 M517.0 166.5 L515.1 167.0 L513.1 167.3 L511.4 167.3 L509.9 166.9 L508.9 166.3 L508.4 165.5 L508.3 164.5 L508.9 163.3 L509.9 162.2 L511.3 161.1 L513.0 160.2 L514.9 159.5 M508.8 171.9 L509.1 170.9 L509.7 170.0 L510.7 169.0 L511.9 168.1 L513.4 167.4 L515.0 166.8 L516.7 166.5 L518.2 166.4 L519.6 166.5 L520.7 166.9 L521.5 167.4 L521.9 168.2 M380.0 257.8 L381.5 257.0 L383.2 256.4 L384.9 255.9 L386.7 255.6 L388.3 255.4 L389.8 255.4 L391.0 255.6 L392.0 256.0 L392.5 256.5 L392.7 257.2 L392.5 257.9 L391.9 258.7 M379.1 265.4 L380.9 264.4 L383.0 263.4 L385.3 262.7 L387.7 262.3 L389.8 262.2 L391.5 262.4 L392.6 263.0 L393.1 263.8 L392.9 264.8 L392.0 265.8 L390.6 266.9 L388.6 268.0 M377.3 274.6 L377.5 273.8 L378.2 273.0 L379.2 272.1 L380.6 271.3 L382.1 270.6 L383.9 270.0 L385.6 269.5 L387.4 269.2 L389.0 269.1 L390.3 269.3 L391.4 269.6 L392.1 270.1 M378.1 282.6 L377.7 281.8 L377.8 280.8 L378.4 279.8 L379.4 278.8 L380.8 277.8 L382.4 277.0 L384.3 276.3 L386.1 275.9 L387.9 275.7 L389.5 275.8 L390.8 276.2 L391.6 276.8 M390.9 283.0 L391.9 283.6 L392.5 284.4 L392.4 285.5 L391.7 286.6 L390.6 287.8 L388.9 288.8 L387.0 289.7 L384.9 290.4 L382.9 290.7 L381.0 290.8 L379.4 290.5 L378.3 289.9 M384.2 152.0 L384.4 153.0 L384.3 153.9 L383.8 154.8 L382.9 155.6 L381.8 156.2 L380.5 156.6 L379.1 156.7 L377.7 156.5 L376.5 156.1 L375.5 155.4 L374.8 154.6 L374.5 153.6 M372.1 159.0 L371.6 158.3 L371.3 157.6 L371.4 156.8 L371.6 156.1 L372.2 155.4 L372.9 154.8 L373.9 154.4 L374.9 154.1 L376.1 154.0 L377.2 154.1 L378.3 154.3 L379.2 154.8 M377.6 148.8 L378.8 148.2 L380.1 147.8 L381.4 147.7 L382.5 147.9 L383.4 148.4 L384.1 149.1 L384.4 150.0 L384.3 151.0 L383.9 152.1 L383.2 153.1 L382.2 153.9 L381.0 154.6 M375.6 156.1 L376.4 155.2 L377.4 154.4 L378.6 153.8 L379.8 153.5 L381.0 153.3 L382.1 153.4 L383.1 153.8 L383.8 154.4 L384.2 155.1 L384.3 156.0 L384.0 156.9 L383.5 157.9 M371.6 149.3 L371.0 150.3 L370.2 151.2 L369.3 152.0 L368.2 152.7 L367.2 153.1 L366.1 153.4 L365.1 153.4 L364.2 153.1 L363.6 152.7 L363.1 152.0 L362.9 151.2 L362.9 150.3 M369.1 157.5 L368.1 157.4 L367.3 157.1 L366.7 156.5 L366.3 155.7 L366.2 154.8 L366.4 153.7 L366.8 152.7 L367.5 151.8 L368.4 150.9 L369.4 150.3 L370.4 150.0 L371.4 149.9 M367.3 158.6 L367.7 157.9 L368.3 157.2 L369.0 156.5 L369.8 156.0 L370.6 155.6 L371.4 155.4 L372.2 155.3 L372.9 155.4 L373.5 155.7 L374.0 156.1 L374.3 156.7 L374.5 157.4 M374.5 159.9 L374.5 158.5 L374.8 157.3 L375.4 156.5 L376.3 156.1 L377.4 156.1 L378.6 156.6 L379.8 157.4 L380.9 158.6 L381.8 160.0 L382.5 161.5 L382.8 163.0 L382.8 164.3 M372.5 160.2 L373.2 161.4 L373.7 162.8 L374.0 164.1 L373.9 165.2 L373.5 166.1 L372.8 166.7 L371.9 166.8 L370.9 166.6 L369.8 166.0 L368.8 165.1 L367.9 163.9 L367.2 162.6 M399.4 151.8 L399.3 150.7 L399.7 149.7 L400.4 149.0 L401.4 148.6 L402.5 148.5 L403.8 148.8 L405.2 149.4 L406.4 150.2 L407.4 151.3 L408.1 152.4 L408.5 153.6 L408.6 154.8 M393.6 152.3 L394.3 151.8 L395.1 151.6 L396.2 151.6 L397.2 151.9 L398.2 152.4 L399.1 153.2 L399.8 154.0 L400.3 155.0 L400.4 155.9 L400.3 156.7 L399.9 157.4 L399.3 157.9 M394.6 141.4 L395.0 142.5 L395.1 143.6 L394.8 144.4 L394.2 145.1 L393.2 145.4 L392.1 145.5 L390.7 145.2 L389.4 144.7 L388.0 143.9 L386.8 142.9 L385.8 141.7 L385.1 140.6 M387.7 148.5 L386.4 148.4 L385.1 147.9 L383.8 147.2 L382.6 146.3 L381.6 145.3 L380.8 144.2 L380.3 143.1 L380.2 142.1 L380.3 141.1 L380.8 140.4 L381.5 139.9 L382.5 139.6 M420.1 159.4 L419.1 159.1 L418.3 158.6 L417.8 157.9 L417.7 157.0 L417.8 156.1 L418.3 155.2 L419.0 154.4 L420.0 153.7 L421.1 153.2 L422.2 153.0 L423.3 153.0 L424.3 153.2 M426.3 161.3 L425.8 162.3 L425.0 163.1 L424.1 163.9 L423.1 164.4 L422.0 164.7 L420.9 164.8 L419.9 164.7 L419.0 164.3 L418.3 163.6 L417.9 162.8 L417.7 161.9 L417.9 161.0 M426.2 138.9 L425.4 140.0 L424.4 141.0 L423.2 141.9 L421.9 142.6 L420.5 143.1 L419.3 143.4 L418.1 143.4 L417.2 143.1 L416.6 142.6 L416.4 141.9 L416.4 141.0 L416.9 139.9 M427.7 142.5 L428.2 143.0 L428.3 143.7 L428.2 144.5 L427.9 145.3 L427.3 146.2 L426.5 147.1 L425.5 147.9 L424.5 148.6 L423.3 149.3 L422.1 149.7 L421.0 150.0 L420.0 150.1 M466.4 135.1 L467.6 135.4 L468.7 135.9 L469.7 136.6 L470.5 137.5 L471.0 138.4 L471.3 139.3 L471.2 140.3 L470.8 141.1 L470.2 141.8 L469.3 142.3 L468.3 142.6 L467.1 142.6 M462.8 144.4 L461.7 144.2 L460.6 143.9 L459.5 143.4 L458.6 142.7 L457.9 141.9 L457.4 141.0 L457.1 140.1 L457.1 139.3 L457.4 138.5 L458.0 137.9 L458.8 137.4 L459.7 137.1 M456.7 146.8 L455.7 146.0 L454.8 145.2 L454.2 144.3 L453.8 143.4 L453.7 142.5 L453.8 141.8 L454.2 141.1 L454.9 140.7 L455.8 140.5 L456.8 140.5 L457.9 140.7 L459.0 141.1 M471.7 140.9 L472.1 141.8 L472.3 142.6 L472.3 143.4 L472.0 144.2 L471.6 144.7 L471.0 145.1 L470.2 145.3 L469.3 145.3 L468.4 145.0 L467.5 144.6 L466.6 144.0 L465.9 143.3 M463.5 139.3 L464.7 139.9 L465.8 140.8 L466.8 141.8 L467.6 143.0 L468.1 144.2 L468.3 145.3 L468.2 146.3 L467.7 147.1 L467.0 147.6 L466.1 147.7 L464.9 147.6 L463.8 147.1 M462.8 144.6 L463.3 145.9 L463.5 147.1 L463.2 148.2 L462.5 148.9 L461.5 149.3 L460.3 149.4 L459.0 149.0 L457.6 148.3 L456.4 147.3 L455.4 146.1 L454.8 144.8 L454.4 143.5 M398.4 164.1 L399.5 163.7 L400.5 163.5 L401.4 163.6 L402.2 163.9 L402.7 164.5 L403.0 165.2 L403.0 166.2 L402.8 167.1 L402.2 168.1 L401.5 169.0 L400.5 169.8 L399.5 170.4 M404.3 169.3 L404.7 170.0 L404.8 170.8 L404.5 171.7 L404.0 172.7 L403.2 173.7 L402.2 174.6 L401.1 175.3 L399.9 175.9 L398.8 176.2 L397.7 176.3 L396.8 176.1 L396.2 175.6 M399.9 173.5 L401.1 172.9 L402.4 172.6 L403.5 172.6 L404.4 172.9 L405.0 173.5 L405.3 174.4 L405.1 175.4 L404.7 176.5 L403.8 177.6 L402.8 178.6 L401.6 179.4 L400.3 179.9 M379.5 163.3 L380.4 162.8 L381.6 162.5 L382.9 162.3 L384.3 162.3 L385.7 162.5 L387.0 162.9 L388.1 163.5 L389.1 164.2 L389.8 165.0 L390.2 165.8 L390.3 166.7 L390.1 167.5 M388.1 171.6 L387.9 172.3 L387.5 172.9 L386.8 173.5 L385.8 173.8 L384.7 174.1 L383.4 174.1 L382.1 174.0 L380.9 173.8 L379.7 173.3 L378.7 172.8 L377.8 172.1 L377.3 171.4 M375.8 173.1 L377.0 172.7 L378.4 172.5 L379.9 172.6 L381.3 172.9 L382.5 173.5 L383.4 174.2 L384.1 175.1 L384.3 176.0 L384.1 176.9 L383.5 177.7 L382.6 178.4 L381.4 178.8 M396.5 168.9 L397.8 168.7 L399.2 168.8 L400.6 169.1 L401.9 169.6 L403.1 170.3 L404.0 171.1 L404.6 172.0 L404.8 172.9 L404.7 173.7 L404.2 174.5 L403.3 175.0 L402.2 175.4 M394.0 175.7 L395.5 176.1 L396.9 176.8 L397.9 177.6 L398.6 178.6 L398.9 179.6 L398.7 180.6 L398.1 181.4 L397.2 182.0 L395.9 182.4 L394.4 182.5 L392.8 182.4 L391.4 181.9 M388.1 183.6 L388.4 184.8 L388.6 186.0 L388.4 187.0 L388.1 187.8 L387.5 188.3 L386.8 188.6 L386.0 188.5 L385.0 188.1 L384.1 187.4 L383.2 186.5 L382.4 185.4 L381.7 184.2 M374.3 188.0 L373.4 186.8 L372.8 185.4 L372.5 184.0 L372.4 182.7 L372.6 181.7 L373.1 180.8 L373.8 180.3 L374.7 180.1 L375.7 180.3 L376.8 180.9 L377.8 181.7 L378.8 182.8 M363.8 175.0 L364.4 174.2 L365.4 173.6 L366.6 173.2 L367.9 173.0 L369.3 173.0 L370.7 173.2 L372.0 173.6 L373.0 174.2 L373.9 174.9 L374.4 175.8 L374.5 176.6 L374.3 177.5 M372.3 182.1 L371.9 182.9 L371.1 183.7 L370.0 184.3 L368.7 184.6 L367.2 184.8 L365.7 184.6 L364.3 184.3 L363.1 183.7 L362.1 183.0 L361.5 182.1 L361.3 181.2 L361.5 180.3 M362.7 185.0 L364.0 185.1 L365.2 185.3 L366.4 185.6 L367.4 186.0 L368.3 186.5 L369.0 187.1 L369.5 187.7 L369.7 188.3 L369.7 188.9 L369.4 189.5 L368.8 190.0 L368.0 190.4 M380.3 176.2 L379.4 176.7 L378.2 177.0 L376.9 177.1 L375.5 177.0 L374.2 176.7 L373.0 176.2 L372.0 175.6 L371.3 174.8 L370.8 174.0 L370.8 173.2 L371.0 172.4 L371.6 171.7 M370.1 176.4 L371.1 175.9 L372.3 175.6 L373.5 175.5 L374.8 175.6 L376.0 175.9 L377.1 176.5 L377.9 177.2 L378.4 178.0 L378.6 178.9 L378.4 179.7 L377.9 180.5 L377.1 181.1 M361.0 170.4 L361.1 169.1 L361.4 167.9 L362.0 167.0 L362.9 166.4 L363.9 166.1 L364.9 166.3 L366.0 166.9 L367.0 167.8 L367.7 168.9 L368.2 170.3 L368.5 171.6 L368.4 173.0 M367.6 171.3 L367.7 170.4 L368.0 169.5 L368.4 168.9 L369.0 168.4 L369.6 168.2 L370.3 168.2 L371.1 168.5 L371.8 169.0 L372.4 169.7 L372.9 170.6 L373.3 171.6 L373.4 172.6 M376.8 177.7 L375.9 177.9 L375.0 177.8 L374.0 177.4 L373.1 176.8 L372.3 175.9 L371.7 174.9 L371.3 173.8 L371.2 172.6 L371.3 171.5 L371.6 170.5 L372.1 169.8 L372.9 169.2 M369.2 196.0 L368.6 195.0 L368.3 193.9 L368.3 192.9 L368.6 192.1 L369.2 191.4 L370.0 190.9 L371.0 190.6 L372.1 190.7 L373.3 191.0 L374.4 191.5 L375.4 192.3 L376.2 193.2 M366.6 193.2 L367.7 193.5 L368.7 194.0 L369.7 194.8 L370.5 195.7 L371.2 196.7 L371.6 197.7 L371.8 198.7 L371.7 199.6 L371.3 200.3 L370.7 200.8 L369.9 201.2 L369.0 201.2 M387.6 204.3 L387.3 205.2 L386.8 205.9 L385.9 206.4 L384.9 206.7 L383.7 206.7 L382.4 206.3 L381.1 205.8 L379.9 205.0 L378.9 204.1 L378.1 203.0 L377.6 201.9 L377.5 200.9 M380.3 209.0 L379.2 208.9 L378.1 208.6 L377.1 208.1 L376.1 207.4 L375.4 206.7 L374.8 205.8 L374.4 204.9 L374.3 204.0 L374.5 203.2 L374.9 202.5 L375.6 201.9 L376.4 201.5 M378.6 208.6 L378.8 209.4 L378.8 210.2 L378.6 210.8 L378.1 211.3 L377.5 211.7 L376.8 211.8 L375.9 211.8 L374.9 211.6 L374.0 211.3 L373.0 210.7 L372.1 210.1 L371.3 209.3 M376.0 192.3 L376.2 191.4 L376.8 190.6 L377.6 190.1 L378.6 189.9 L379.7 190.0 L380.9 190.4 L382.0 191.0 L383.0 191.9 L383.8 192.9 L384.4 194.0 L384.6 195.1 L384.6 196.1 M377.6 195.8 L377.9 196.7 L378.1 197.6 L378.1 198.4 L378.0 199.1 L377.6 199.6 L377.1 200.0 L376.4 200.2 L375.7 200.2 L374.8 200.0 L374.0 199.6 L373.1 199.1 L372.3 198.4 M372.9 199.0 L373.0 199.9 L372.8 200.8 L372.4 201.4 L371.8 201.9 L371.1 202.2 L370.2 202.2 L369.2 202.0 L368.2 201.6 L367.2 201.0 L366.3 200.2 L365.6 199.3 L365.0 198.3 M360.5 191.0 L361.0 189.6 L361.8 188.2 L362.6 187.0 L363.6 186.1 L364.5 185.6 L365.4 185.5 L366.1 185.7 L366.7 186.4 L367.0 187.4 L367.0 188.6 L366.8 190.0 L366.4 191.5 M367.3 197.7 L367.3 196.6 L367.6 195.4 L368.0 194.3 L368.6 193.3 L369.3 192.5 L370.1 191.9 L371.0 191.6 L371.8 191.6 L372.6 191.9 L373.3 192.4 L373.8 193.2 L374.2 194.1 M368.8 181.6 L370.2 181.2 L371.4 181.2 L372.3 181.4 L372.9 182.0 L373.2 182.8 L373.0 183.7 L372.5 184.8 L371.6 185.9 L370.4 187.0 L369.1 187.8 L367.7 188.5 L366.3 188.9 M366.9 191.4 L368.0 190.4 L369.3 189.5 L370.6 188.8 L372.0 188.4 L373.2 188.3 L374.2 188.5 L374.9 189.0 L375.3 189.8 L375.3 190.8 L374.9 191.8 L374.2 193.0 L373.2 194.0 M386.0 194.7 L387.1 194.0 L388.5 193.4 L389.9 192.9 L391.3 192.6 L392.7 192.5 L394.0 192.6 L395.1 192.9 L395.9 193.4 L396.4 194.0 L396.7 194.7 L396.5 195.6 L396.0 196.4 M386.9 209.8 L386.0 209.4 L385.5 208.7 L385.2 208.0 L385.4 207.2 L385.9 206.3 L386.7 205.5 L387.8 204.8 L389.0 204.2 L390.4 203.7 L391.8 203.5 L393.2 203.4 L394.4 203.6 M400.0 207.0 L401.3 208.2 L402.3 209.4 L402.8 210.6 L402.9 211.6 L402.5 212.5 L401.7 213.0 L400.5 213.2 L399.0 213.1 L397.5 212.6 L395.9 211.9 L394.4 210.9 L393.1 209.7 M395.5 216.1 L394.4 215.9 L393.2 215.6 L392.0 215.1 L390.8 214.4 L389.7 213.6 L388.7 212.7 L387.9 211.8 L387.4 210.9 L387.1 210.1 L387.1 209.3 L387.3 208.7 L387.8 208.2 M383.5 213.4 L383.8 212.5 L384.7 211.9 L385.8 211.7 L387.2 211.8 L388.8 212.3 L390.3 213.0 L391.8 214.0 L392.9 215.1 L393.8 216.3 L394.1 217.5 L394.1 218.5 L393.6 219.2 M397.9 197.0 L398.3 197.9 L398.6 198.9 L398.7 199.9 L398.6 200.9 L398.4 201.9 L398.1 202.7 L397.6 203.4 L397.0 203.8 L396.3 204.1 L395.6 204.0 L394.9 203.8 L394.2 203.3 M408.0 204.3 L407.6 205.3 L406.9 206.0 L406.2 206.5 L405.3 206.6 L404.4 206.3 L403.5 205.8 L402.8 204.9 L402.2 203.9 L401.9 202.7 L401.9 201.6 L402.1 200.5 L402.5 199.5 M388.3 198.6 L387.7 197.9 L387.2 197.0 L386.8 195.9 L386.7 194.8 L386.7 193.7 L386.9 192.7 L387.3 191.8 L387.9 191.0 L388.6 190.4 L389.3 190.1 L390.2 190.0 L391.0 190.2 M397.3 202.3 L396.4 202.4 L395.5 202.2 L394.7 201.7 L394.0 201.0 L393.4 200.1 L393.0 199.0 L392.9 197.8 L392.9 196.6 L393.2 195.5 L393.6 194.5 L394.3 193.8 L395.0 193.2 M392.0 192.7 L392.1 193.9 L392.0 195.1 L391.8 196.2 L391.3 197.1 L390.8 197.8 L390.1 198.2 L389.3 198.4 L388.6 198.3 L387.8 197.8 L387.1 197.2 L386.6 196.3 L386.2 195.2 M391.9 196.0 L391.9 194.9 L392.1 193.8 L392.5 193.0 L393.0 192.3 L393.8 191.9 L394.6 191.7 L395.4 191.9 L396.2 192.3 L396.9 193.0 L397.5 193.9 L397.9 195.0 L398.1 196.1 M410.1 201.4 L410.5 202.4 L410.6 203.5 L410.6 204.6 L410.4 205.7 L410.1 206.7 L409.5 207.5 L408.9 208.1 L408.2 208.5 L407.4 208.7 L406.6 208.5 L405.8 208.2 L405.1 207.6 M415.4 210.1 L414.9 211.3 L414.1 212.2 L413.3 212.7 L412.4 212.9 L411.5 212.8 L410.7 212.3 L410.0 211.4 L409.5 210.3 L409.2 209.0 L409.1 207.6 L409.3 206.2 L409.6 204.8 M363.7 200.5 L365.1 201.2 L366.4 202.2 L367.6 203.4 L368.5 204.7 L369.2 206.0 L369.4 207.2 L369.2 208.2 L368.7 208.8 L367.7 209.1 L366.6 209.0 L365.3 208.5 L363.9 207.6 M364.1 208.8 L364.1 209.8 L363.7 210.6 L363.1 211.1 L362.1 211.3 L361.0 211.2 L359.7 210.7 L358.5 209.9 L357.3 209.0 L356.3 207.8 L355.5 206.6 L355.0 205.4 L354.9 204.3 M349.9 209.1 L349.9 207.9 L350.2 206.9 L350.9 206.1 L351.9 205.7 L353.2 205.6 L354.6 205.9 L356.0 206.6 L357.2 207.5 L358.3 208.6 L359.1 209.8 L359.5 211.1 L359.5 212.2 M358.0 209.9 L357.4 209.0 L356.9 207.9 L356.6 206.7 L356.5 205.4 L356.7 204.2 L357.1 203.2 L357.7 202.4 L358.4 201.9 L359.2 201.7 L360.0 201.9 L360.8 202.4 L361.5 203.2 M369.0 209.7 L368.5 210.7 L367.9 211.4 L367.2 211.8 L366.3 211.9 L365.5 211.7 L364.7 211.2 L364.0 210.4 L363.4 209.5 L363.0 208.3 L362.9 207.1 L362.9 206.0 L363.2 204.9 M364.5 201.9 L365.5 202.7 L366.5 203.8 L367.3 205.3 L367.9 206.9 L368.1 208.6 L368.0 210.1 L367.6 211.4 L367.0 212.4 L366.1 212.9 L365.0 212.9 L363.9 212.4 L362.9 211.5 M371.1 203.4 L372.0 204.0 L372.8 204.9 L373.5 206.0 L374.0 207.2 L374.3 208.6 L374.4 209.8 L374.2 211.0 L373.8 212.0 L373.2 212.6 L372.5 213.0 L371.6 213.0 L370.7 212.7 M374.0 204.5 L374.7 203.8 L375.6 203.5 L376.5 203.6 L377.6 204.1 L378.5 204.8 L379.3 205.9 L380.0 207.1 L380.4 208.5 L380.5 209.8 L380.4 211.1 L380.0 212.1 L379.4 212.9 M340.3 220.8 L340.9 222.5 L341.3 224.3 L341.4 226.1 L341.2 227.6 L340.7 228.8 L340.0 229.6 L339.1 229.9 L338.1 229.6 L337.1 228.9 L336.1 227.6 L335.4 226.1 L334.8 224.4 M345.1 219.5 L345.9 219.3 L346.8 219.5 L347.7 220.1 L348.6 220.9 L349.3 222.0 L349.9 223.2 L350.3 224.6 L350.5 226.0 L350.5 227.3 L350.3 228.4 L349.8 229.4 L349.2 230.0 M388.3 212.8 L388.7 213.4 L389.0 214.1 L389.1 214.9 L389.1 215.8 L388.9 216.8 L388.6 217.7 L388.2 218.5 L387.6 219.3 L387.0 219.9 L386.3 220.3 L385.6 220.6 L385.0 220.6 M394.4 222.9 L393.9 224.0 L393.2 225.1 L392.4 225.9 L391.5 226.5 L390.6 226.7 L389.8 226.6 L389.1 226.2 L388.6 225.4 L388.4 224.5 L388.3 223.3 L388.6 222.1 L389.0 220.9 M389.8 211.3 L391.3 211.9 L392.6 212.7 L393.8 213.7 L394.5 214.8 L394.8 216.0 L394.7 217.1 L394.1 218.0 L393.2 218.6 L391.9 219.0 L390.5 219.0 L388.9 218.7 L387.5 218.0 M382.0 222.8 L381.1 222.0 L380.3 221.0 L379.9 220.1 L379.8 219.1 L380.1 218.3 L380.7 217.6 L381.6 217.1 L382.6 216.8 L383.9 216.8 L385.1 217.1 L386.4 217.6 L387.4 218.3 M395.8 219.4 L396.6 220.3 L397.2 221.3 L397.5 222.3 L397.7 223.2 L397.6 224.0 L397.2 224.7 L396.7 225.1 L395.9 225.4 L395.0 225.4 L394.0 225.2 L393.0 224.8 L392.0 224.2 M393.0 228.3 L392.3 228.8 L391.5 229.1 L390.5 229.0 L389.4 228.8 L388.2 228.3 L387.0 227.5 L385.9 226.6 L385.0 225.6 L384.2 224.5 L383.6 223.3 L383.3 222.3 L383.2 221.3 M380.7 229.3 L379.8 228.4 L379.1 227.4 L378.6 226.3 L378.4 225.3 L378.4 224.4 L378.7 223.6 L379.2 223.0 L379.9 222.6 L380.8 222.4 L381.9 222.4 L383.0 222.7 L384.1 223.1 M388.6 211.9 L387.4 212.5 L386.1 212.7 L384.9 212.8 L383.8 212.5 L383.0 212.0 L382.5 211.2 L382.3 210.4 L382.5 209.4 L383.0 208.4 L383.9 207.6 L385.0 206.8 L386.2 206.3 M389.7 218.6 L389.1 219.2 L388.3 219.7 L387.5 220.2 L386.6 220.4 L385.8 220.5 L385.0 220.5 L384.3 220.3 L383.6 219.9 L383.2 219.4 L382.9 218.8 L382.8 218.2 L382.8 217.5 M376.0 220.1 L377.1 218.7 L378.3 217.6 L379.5 216.9 L380.6 216.7 L381.5 217.0 L382.2 217.6 L382.6 218.7 L382.7 220.1 L382.5 221.7 L381.9 223.4 L381.1 225.1 L380.1 226.5 M379.3 223.3 L380.1 222.2 L381.1 221.4 L382.0 220.7 L382.9 220.4 L383.7 220.4 L384.4 220.6 L385.0 221.1 L385.3 221.9 L385.5 222.9 L385.5 224.1 L385.2 225.4 L384.8 226.7 M380.0 231.0 L380.5 229.3 L381.2 227.5 L382.2 225.9 L383.3 224.5 L384.6 223.4 L385.8 222.9 L386.9 222.8 L387.8 223.2 L388.4 224.1 L388.7 225.3 L388.7 226.9 L388.3 228.6 M395.2 236.9 L394.7 237.5 L394.0 237.9 L393.2 238.0 L392.3 237.9 L391.4 237.5 L390.5 236.9 L389.7 236.1 L389.0 235.2 L388.6 234.1 L388.3 233.1 L388.2 232.0 L388.4 231.1 M384.6 236.8 L383.9 236.0 L383.2 235.1 L382.7 234.1 L382.4 233.1 L382.3 232.1 L382.5 231.2 L382.8 230.4 L383.3 229.8 L384.0 229.4 L384.8 229.2 L385.6 229.3 L386.5 229.6 M383.7 233.9 L383.8 235.1 L383.6 236.2 L383.2 237.1 L382.5 237.8 L381.6 238.1 L380.6 238.1 L379.6 237.7 L378.6 237.1 L377.7 236.2 L376.9 235.1 L376.4 233.8 L376.1 232.6 M403.0 216.4 L403.0 217.7 L402.8 219.1 L402.5 220.5 L401.9 221.8 L401.3 223.0 L400.5 224.0 L399.7 224.7 L398.9 225.0 L398.2 225.0 L397.5 224.6 L397.0 223.9 L396.7 223.0 M403.5 220.3 L404.2 219.5 L405.0 219.0 L405.8 218.7 L406.7 218.8 L407.5 219.1 L408.1 219.7 L408.7 220.5 L409.1 221.5 L409.3 222.7 L409.3 223.9 L409.1 225.2 L408.7 226.3 M408.6 228.6 L407.3 228.6 L406.2 228.4 L405.4 227.9 L405.0 227.3 L405.0 226.4 L405.4 225.5 L406.1 224.6 L407.2 223.7 L408.4 222.9 L409.9 222.3 L411.3 221.9 L412.7 221.8 M408.7 238.8 L407.6 238.6 L406.7 238.1 L406.3 237.4 L406.3 236.5 L406.7 235.6 L407.5 234.6 L408.6 233.6 L410.0 232.8 L411.5 232.2 L413.0 231.9 L414.4 231.8 L415.6 232.0 M364.9 254.0 L363.6 253.5 L362.4 252.7 L361.2 251.6 L360.2 250.3 L359.4 248.9 L359.0 247.5 L358.9 246.2 L359.2 245.1 L359.8 244.4 L360.7 244.0 L361.8 244.0 L363.0 244.4 M362.3 250.4 L362.5 251.6 L362.5 252.6 L362.1 253.5 L361.6 254.2 L360.8 254.6 L359.9 254.8 L358.8 254.6 L357.7 254.2 L356.6 253.5 L355.6 252.6 L354.7 251.6 L354.0 250.4 M357.6 256.3 L356.8 256.7 L355.8 256.8 L354.8 256.6 L353.6 256.1 L352.6 255.3 L351.5 254.4 L350.7 253.3 L350.0 252.1 L349.6 250.8 L349.4 249.7 L349.5 248.6 L349.9 247.8 M372.9 242.3 L374.0 243.1 L375.1 243.9 L375.9 244.9 L376.5 245.8 L376.9 246.7 L377.0 247.5 L376.8 248.2 L376.4 248.7 L375.7 249.0 L374.8 249.1 L373.7 249.0 L372.6 248.7 M364.9 246.9 L366.2 247.1 L367.4 247.6 L368.6 248.3 L369.6 249.1 L370.5 250.1 L371.0 251.1 L371.3 252.0 L371.2 252.8 L370.8 253.5 L370.1 254.0 L369.2 254.2 L368.1 254.2 M414.3 238.3 L413.5 239.5 L412.4 240.7 L411.0 241.8 L409.5 242.8 L407.9 243.4 L406.5 243.8 L405.4 243.7 L404.5 243.4 L404.1 242.7 L404.1 241.7 L404.6 240.5 L405.4 239.3 M415.6 244.6 L415.2 245.7 L414.6 246.7 L413.8 247.6 L412.8 248.3 L411.8 248.9 L410.8 249.3 L409.7 249.4 L408.8 249.3 L408.0 249.0 L407.4 248.4 L407.0 247.7 L406.8 246.8 M413.5 246.4 L414.4 246.4 L415.3 246.6 L415.9 247.0 L416.5 247.5 L416.8 248.2 L416.9 249.1 L416.8 250.0 L416.5 251.0 L416.0 251.9 L415.3 252.8 L414.5 253.6 L413.5 254.3 M380.3 232.4 L381.0 232.5 L381.6 232.8 L382.2 233.6 L382.6 234.5 L382.9 235.8 L383.0 237.1 L383.0 238.6 L382.7 240.1 L382.4 241.6 L381.8 242.9 L381.2 244.0 L380.5 244.8 M382.2 238.8 L382.8 237.5 L383.5 236.5 L384.3 235.9 L385.1 235.7 L385.8 236.0 L386.5 236.6 L387.0 237.6 L387.3 238.8 L387.4 240.3 L387.3 241.8 L387.0 243.3 L386.5 244.7 M393.0 240.0 L393.5 241.5 L393.7 243.2 L393.7 245.1 L393.3 246.9 L392.7 248.6 L391.9 249.9 L390.9 250.8 L389.8 251.2 L388.8 251.1 L387.8 250.4 L387.1 249.3 L386.6 247.8 M389.9 247.0 L390.6 248.3 L391.1 249.7 L391.4 251.1 L391.4 252.4 L391.2 253.5 L390.8 254.3 L390.1 254.7 L389.3 254.7 L388.3 254.4 L387.4 253.7 L386.5 252.7 L385.8 251.4 M376.7 252.7 L375.7 251.6 L375.0 250.4 L374.6 249.1 L374.6 247.8 L374.9 246.7 L375.5 245.9 L376.4 245.4 L377.5 245.2 L378.6 245.5 L379.8 246.1 L380.8 247.1 L381.6 248.3 M388.9 244.1 L388.3 242.8 L387.9 241.4 L387.9 240.0 L388.1 238.8 L388.6 237.8 L389.4 237.1 L390.4 236.8 L391.4 236.9 L392.5 237.3 L393.5 238.1 L394.5 239.2 L395.2 240.5 M401.7 243.6 L401.6 245.1 L401.1 246.3 L400.3 247.1 L399.4 247.5 L398.2 247.4 L397.1 246.8 L396.0 245.9 L395.1 244.6 L394.4 243.1 L394.0 241.5 L393.9 239.9 L394.2 238.6 M404.6 237.4 L405.4 238.7 L406.0 240.3 L406.4 241.9 L406.6 243.6 L406.6 245.1 L406.3 246.3 L405.8 247.2 L405.2 247.7 L404.4 247.7 L403.5 247.3 L402.7 246.5 L401.9 245.3 M399.8 242.8 L400.2 243.8 L400.2 244.9 L399.8 246.1 L398.9 247.4 L397.7 248.5 L396.3 249.5 L394.8 250.1 L393.4 250.4 L392.1 250.4 L391.0 249.9 L390.4 249.1 L390.2 248.1 M402.3 248.6 L402.1 249.5 L401.6 250.5 L400.8 251.5 L399.8 252.5 L398.7 253.3 L397.4 254.1 L396.1 254.6 L394.8 255.0 L393.6 255.2 L392.6 255.1 L391.7 254.8 L391.1 254.3 M401.8 256.6 L400.8 257.5 L399.5 258.4 L398.2 259.1 L396.8 259.6 L395.5 259.8 L394.4 259.8 L393.5 259.6 L392.9 259.1 L392.6 258.5 L392.7 257.6 L393.1 256.7 L393.8 255.7 M419.9 176.2 L419.2 177.7 L418.3 179.2 L417.1 180.5 L415.9 181.4 L414.7 181.9 L413.6 182.0 L412.7 181.6 L412.0 180.8 L411.8 179.6 L411.9 178.2 L412.3 176.6 L413.0 175.1 M417.8 185.5 L417.2 185.0 L416.8 184.3 L416.5 183.5 L416.5 182.5 L416.6 181.5 L416.9 180.4 L417.4 179.4 L418.0 178.5 L418.8 177.7 L419.6 177.1 L420.4 176.7 L421.3 176.6 M416.7 181.0 L416.3 182.3 L415.6 183.3 L414.9 184.0 L414.1 184.3 L413.3 184.2 L412.6 183.7 L412.0 182.9 L411.5 181.7 L411.2 180.4 L411.2 178.9 L411.3 177.4 L411.7 176.0 M419.0 186.9 L418.2 186.9 L417.4 186.5 L416.7 185.8 L416.1 184.9 L415.7 183.7 L415.4 182.4 L415.4 181.0 L415.6 179.7 L416.0 178.5 L416.6 177.5 L417.3 176.7 L418.1 176.3 M420.9 184.2 L421.0 183.0 L421.2 181.7 L421.6 180.6 L422.2 179.7 L422.9 179.0 L423.6 178.5 L424.4 178.4 L425.2 178.5 L425.9 179.0 L426.6 179.7 L427.2 180.6 L427.6 181.7 M431.7 188.9 L430.9 188.9 L429.8 188.6 L428.8 188.0 L427.6 187.1 L426.6 185.9 L425.6 184.6 L424.8 183.2 L424.2 181.8 L423.9 180.5 L423.8 179.4 L424.0 178.5 L424.5 177.9 M423.0 191.8 L421.9 191.8 L420.7 191.3 L419.4 190.4 L418.1 189.1 L416.9 187.5 L416.0 185.9 L415.4 184.3 L415.2 182.8 L415.4 181.7 L415.9 180.9 L416.8 180.7 L417.9 180.9 M420.2 182.2 L420.4 181.4 L420.9 180.6 L421.6 179.8 L422.6 179.1 L423.7 178.6 L424.9 178.1 L426.1 177.9 L427.3 177.8 L428.5 177.9 L429.4 178.2 L430.2 178.6 L430.8 179.2 M420.2 186.2 L420.6 185.4 L421.3 184.7 L422.2 184.0 L423.2 183.5 L424.4 183.1 L425.5 182.8 L426.6 182.8 L427.7 182.9 L428.5 183.2 L429.2 183.7 L429.7 184.3 L429.9 185.0 M425.5 172.9 L425.6 174.1 L425.2 175.0 L424.3 175.7 L423.2 176.0 L421.8 175.9 L420.2 175.5 L418.7 174.8 L417.3 173.8 L416.1 172.6 L415.3 171.3 L414.9 170.1 L415.0 169.0 M417.7 179.4 L416.5 179.5 L415.2 179.4 L413.8 178.9 L412.6 178.2 L411.5 177.2 L410.8 176.2 L410.4 175.1 L410.4 174.1 L410.7 173.2 L411.4 172.5 L412.4 172.1 L413.7 172.0 M464.2 171.4 L464.1 172.5 L463.6 173.8 L462.9 175.2 L461.9 176.5 L460.8 177.7 L459.6 178.7 L458.4 179.4 L457.2 179.7 L456.3 179.7 L455.6 179.3 L455.3 178.5 L455.2 177.5 M468.0 184.2 L467.4 185.2 L466.6 186.0 L465.7 186.6 L464.7 187.0 L463.8 187.1 L462.9 186.8 L462.2 186.4 L461.6 185.6 L461.3 184.7 L461.1 183.7 L461.2 182.5 L461.5 181.4 M464.7 173.1 L463.3 173.2 L462.0 173.1 L460.9 172.6 L460.0 171.9 L459.6 171.0 L459.6 170.0 L460.0 169.0 L460.8 168.0 L461.9 167.2 L463.2 166.6 L464.6 166.3 L466.0 166.3 M461.4 173.7 L462.7 173.5 L464.0 173.5 L465.2 173.6 L466.2 174.0 L467.0 174.5 L467.6 175.2 L467.8 176.0 L467.6 176.8 L467.2 177.6 L466.5 178.4 L465.5 179.0 L464.4 179.6 M464.3 168.7 L465.6 168.6 L466.9 168.7 L468.1 168.9 L469.1 169.3 L469.9 169.9 L470.4 170.5 L470.6 171.2 L470.6 172.0 L470.2 172.8 L469.5 173.6 L468.6 174.2 L467.6 174.8 M460.9 175.4 L462.6 175.1 L464.3 175.0 L465.9 175.1 L467.3 175.4 L468.5 175.9 L469.2 176.6 L469.5 177.3 L469.4 178.1 L468.8 178.9 L467.8 179.7 L466.5 180.3 L464.9 180.8 M466.0 179.4 L466.9 179.9 L467.6 180.5 L468.0 181.2 L468.1 182.0 L467.8 182.9 L467.3 183.7 L466.5 184.5 L465.5 185.1 L464.3 185.6 L463.1 185.9 L461.8 186.0 L460.6 185.9 M476.6 185.1 L475.7 186.0 L474.6 186.8 L473.2 187.5 L471.8 188.0 L470.3 188.3 L469.0 188.3 L467.7 188.2 L466.7 187.8 L465.9 187.2 L465.5 186.5 L465.4 185.6 L465.7 184.7 M466.9 192.9 L467.5 191.8 L468.4 190.8 L469.8 189.9 L471.3 189.2 L472.9 188.8 L474.4 188.7 L475.7 189.0 L476.8 189.5 L477.4 190.3 L477.6 191.2 L477.3 192.3 L476.5 193.3 M468.2 180.8 L469.0 180.0 L470.0 179.4 L471.1 178.9 L472.2 178.5 L473.3 178.3 L474.4 178.3 L475.3 178.5 L476.0 178.8 L476.5 179.3 L476.8 179.9 L476.8 180.6 L476.5 181.3 M473.4 190.9 L472.0 191.5 L470.6 191.9 L469.3 192.0 L468.1 191.9 L467.1 191.5 L466.4 190.9 L466.0 190.1 L465.9 189.1 L466.2 188.1 L466.7 187.1 L467.6 186.0 L468.7 185.1 M468.5 196.5 L467.7 196.2 L467.1 195.6 L466.8 194.9 L466.8 194.2 L467.1 193.3 L467.6 192.4 L468.4 191.6 L469.4 190.8 L470.5 190.2 L471.7 189.7 L472.9 189.4 L474.1 189.3 M488.9 217.7 L488.4 216.9 L488.2 215.7 L488.2 214.4 L488.5 212.9 L489.0 211.4 L489.7 210.0 L490.6 208.6 L491.6 207.5 L492.7 206.7 L493.8 206.2 L494.7 206.0 L495.6 206.2 M494.8 218.0 L495.3 216.8 L496.0 215.7 L496.7 214.7 L497.6 214.0 L498.4 213.5 L499.3 213.2 L500.0 213.2 L500.7 213.5 L501.2 214.0 L501.6 214.8 L501.8 215.8 L501.8 216.9 M489.3 199.9 L488.4 198.9 L487.8 197.6 L487.4 196.1 L487.3 194.6 L487.6 193.1 L488.1 191.9 L488.9 191.0 L489.8 190.4 L490.9 190.3 L492.0 190.7 L492.9 191.5 L493.7 192.6 M501.3 198.5 L501.0 199.6 L500.5 200.6 L499.7 201.3 L498.8 201.6 L497.8 201.6 L496.8 201.3 L495.8 200.6 L495.1 199.6 L494.5 198.4 L494.2 197.2 L494.2 195.9 L494.5 194.7 M489.7 194.2 L488.2 194.4 L486.7 194.3 L485.2 194.0 L483.9 193.4 L482.8 192.6 L482.2 191.6 L481.9 190.6 L482.1 189.7 L482.8 188.8 L483.8 188.1 L485.1 187.6 L486.6 187.4 M488.3 198.3 L487.2 198.4 L486.0 198.4 L484.7 198.2 L483.5 197.9 L482.3 197.5 L481.3 197.0 L480.5 196.3 L479.9 195.7 L479.5 195.0 L479.5 194.3 L479.7 193.7 L480.2 193.2 M485.8 196.6 L486.6 197.3 L487.2 198.2 L487.4 199.1 L487.3 200.0 L486.8 200.8 L486.1 201.5 L485.1 202.0 L483.8 202.4 L482.5 202.5 L481.1 202.4 L479.7 202.1 L478.4 201.6 M478.9 207.5 L478.5 206.7 L478.5 205.9 L478.8 205.2 L479.5 204.6 L480.5 204.2 L481.8 203.9 L483.2 203.8 L484.7 203.9 L486.2 204.2 L487.6 204.7 L488.9 205.4 L489.8 206.1 M487.2 215.7 L485.8 216.1 L484.3 216.2 L482.7 216.1 L481.0 215.8 L479.5 215.3 L478.2 214.7 L477.1 213.9 L476.4 213.0 L476.1 212.1 L476.2 211.2 L476.7 210.4 L477.6 209.8 M427.1 199.8 L427.9 200.7 L428.6 201.7 L429.2 202.8 L429.6 204.0 L429.8 205.1 L429.8 206.1 L429.6 207.0 L429.2 207.7 L428.7 208.1 L428.0 208.2 L427.2 208.1 L426.4 207.8 M414.2 201.2 L414.8 200.2 L415.7 199.7 L416.9 199.6 L418.2 199.9 L419.5 200.7 L420.6 201.9 L421.6 203.3 L422.3 204.8 L422.6 206.3 L422.5 207.7 L422.1 208.8 L421.3 209.6 M415.4 217.3 L414.9 215.9 L414.7 214.4 L414.8 212.8 L415.1 211.2 L415.7 209.7 L416.4 208.6 L417.4 207.7 L418.3 207.3 L419.3 207.4 L420.2 207.8 L421.0 208.7 L421.5 210.0 M429.2 214.9 L429.5 216.2 L429.5 217.6 L429.4 219.0 L429.0 220.3 L428.5 221.5 L427.8 222.4 L427.1 223.1 L426.2 223.6 L425.4 223.6 L424.6 223.4 L423.8 222.8 L423.2 222.0 M424.6 223.0 L423.9 223.9 L423.0 224.6 L422.1 225.0 L421.2 225.2 L420.3 225.0 L419.5 224.6 L418.9 223.9 L418.5 223.0 L418.3 221.9 L418.4 220.8 L418.7 219.6 L419.1 218.6 M425.4 229.1 L424.4 228.9 L423.6 228.3 L422.9 227.4 L422.4 226.4 L422.3 225.1 L422.4 223.9 L422.7 222.7 L423.4 221.7 L424.2 220.9 L425.1 220.5 L426.1 220.4 L427.1 220.7 M430.9 230.9 L430.1 231.9 L429.1 232.6 L428.2 233.1 L427.2 233.2 L426.4 233.1 L425.7 232.6 L425.3 231.9 L425.1 230.9 L425.2 229.8 L425.5 228.7 L426.1 227.6 L426.9 226.6 M431.2 221.9 L432.0 222.7 L432.7 223.8 L433.2 225.0 L433.6 226.2 L433.8 227.4 L433.7 228.6 L433.5 229.7 L433.1 230.5 L432.6 231.2 L431.9 231.6 L431.1 231.7 L430.3 231.6 M436.3 222.7 L437.1 223.0 L438.0 223.6 L438.8 224.4 L439.4 225.5 L439.9 226.7 L440.2 228.0 L440.2 229.2 L440.1 230.3 L439.7 231.1 L439.1 231.8 L438.4 232.1 L437.6 232.1 M438.0 219.0 L438.9 220.1 L439.8 221.4 L440.4 222.9 L440.7 224.3 L440.7 225.7 L440.5 227.0 L440.0 227.9 L439.2 228.6 L438.3 228.8 L437.2 228.7 L436.1 228.2 L435.0 227.4 M428.9 218.5 L429.7 218.3 L430.6 218.5 L431.6 219.1 L432.5 220.0 L433.4 221.3 L434.1 222.7 L434.6 224.2 L434.8 225.7 L434.8 227.1 L434.5 228.2 L434.0 229.0 L433.3 229.4 M423.0 223.1 L422.9 221.9 L422.9 220.7 L423.1 219.8 L423.5 219.0 L424.0 218.6 L424.6 218.4 L425.4 218.5 L426.1 218.9 L426.9 219.5 L427.7 220.4 L428.4 221.5 L429.1 222.8 M412.2 220.6 L412.9 221.0 L413.5 221.5 L414.2 222.3 L414.7 223.2 L415.1 224.2 L415.4 225.2 L415.5 226.3 L415.4 227.3 L415.3 228.2 L414.9 229.0 L414.5 229.6 L413.9 230.0 M418.5 228.9 L417.9 229.2 L417.2 229.4 L416.5 229.3 L415.7 229.0 L415.0 228.5 L414.4 227.9 L413.8 227.1 L413.4 226.3 L413.1 225.4 L412.9 224.5 L413.0 223.6 L413.1 222.8 M425.3 229.5 L424.8 230.2 L424.1 230.7 L423.3 230.8 L422.5 230.8 L421.6 230.4 L420.7 229.9 L420.0 229.1 L419.3 228.1 L418.8 227.0 L418.5 225.9 L418.3 224.7 L418.3 223.6 M441.8 236.4 L441.7 235.3 L441.8 234.4 L442.2 233.6 L442.9 233.0 L443.7 232.8 L444.7 232.8 L445.8 233.1 L446.8 233.7 L447.8 234.6 L448.7 235.6 L449.4 236.7 L449.8 237.9 M441.5 234.5 L442.4 235.1 L443.2 235.8 L443.9 236.6 L444.4 237.5 L444.6 238.5 L444.6 239.4 L444.4 240.2 L444.0 240.9 L443.4 241.4 L442.6 241.8 L441.6 241.9 L440.6 241.8 M438.2 237.7 L438.9 238.7 L439.4 239.7 L439.7 240.7 L439.8 241.7 L439.7 242.5 L439.4 243.2 L438.9 243.6 L438.3 243.9 L437.5 243.9 L436.6 243.6 L435.7 243.2 L434.8 242.5 M447.4 239.4 L447.4 240.2 L447.2 241.0 L446.7 241.8 L446.0 242.5 L445.2 243.1 L444.2 243.5 L443.2 243.8 L442.1 244.0 L441.1 243.9 L440.2 243.6 L439.4 243.2 L438.8 242.6 M440.8 248.4 L439.6 248.4 L438.4 248.2 L437.4 247.8 L436.6 247.3 L436.2 246.6 L436.0 245.8 L436.1 244.9 L436.6 244.1 L437.4 243.4 L438.3 242.7 L439.5 242.2 L440.7 241.9 M444.1 251.5 L443.7 252.4 L443.0 253.2 L442.1 253.9 L441.1 254.4 L440.0 254.6 L439.0 254.7 L438.0 254.4 L437.2 254.0 L436.7 253.3 L436.4 252.5 L436.3 251.6 L436.6 250.7 M434.1 243.4 L433.4 242.7 L433.2 241.7 L433.3 240.5 L433.9 239.2 L434.8 238.0 L436.1 236.8 L437.5 235.9 L439.1 235.2 L440.6 234.8 L441.9 234.8 L443.0 235.2 L443.7 235.9 M435.8 245.4 L436.5 244.2 L437.5 243.1 L438.7 242.1 L440.0 241.3 L441.4 240.8 L442.7 240.6 L443.8 240.8 L444.7 241.2 L445.4 241.9 L445.7 242.8 L445.7 243.9 L445.3 245.1 M447.2 237.7 L448.2 238.4 L449.1 239.5 L449.7 240.9 L449.9 242.3 L449.9 243.7 L449.6 245.0 L449.0 246.0 L448.1 246.6 L447.1 246.9 L446.0 246.7 L445.0 246.1 L444.0 245.2 M449.9 246.8 L449.2 245.8 L448.7 244.7 L448.4 243.4 L448.3 242.2 L448.5 241.0 L448.9 240.0 L449.6 239.2 L450.4 238.7 L451.3 238.6 L452.2 238.8 L453.1 239.3 L453.9 240.2 M458.7 249.6 L457.8 249.5 L457.0 249.1 L456.2 248.4 L455.5 247.6 L455.0 246.5 L454.6 245.4 L454.5 244.2 L454.6 243.1 L454.9 242.1 L455.3 241.3 L456.0 240.7 L456.7 240.3 M488.9 221.4 L487.8 221.5 L486.9 221.1 L486.4 220.4 L486.2 219.5 L486.3 218.2 L486.8 216.9 L487.6 215.5 L488.7 214.1 L489.9 212.9 L491.2 212.0 L492.5 211.4 L493.7 211.1 M500.2 224.1 L499.7 225.2 L498.9 226.2 L498.1 227.1 L497.1 227.9 L496.1 228.5 L495.2 228.9 L494.3 229.0 L493.5 228.9 L492.9 228.5 L492.4 228.0 L492.2 227.2 L492.2 226.3 M479.5 205.9 L480.6 205.6 L481.6 205.5 L482.5 205.7 L483.3 206.0 L484.0 206.6 L484.4 207.3 L484.5 208.1 L484.4 209.0 L484.0 210.0 L483.4 210.8 L482.6 211.5 L481.7 212.1 M475.7 214.2 L476.7 213.6 L477.9 213.2 L479.1 212.9 L480.2 212.8 L481.3 212.9 L482.3 213.2 L483.0 213.6 L483.5 214.2 L483.7 214.9 L483.6 215.7 L483.2 216.4 L482.6 217.2 M471.4 210.1 L471.6 208.6 L472.1 207.3 L472.8 206.0 L473.6 205.1 L474.5 204.5 L475.4 204.2 L476.2 204.4 L477.0 204.9 L477.5 205.8 L477.9 207.0 L477.9 208.3 L477.8 209.7 M476.6 216.9 L476.3 216.0 L476.2 215.0 L476.2 213.9 L476.4 212.8 L476.7 211.7 L477.2 210.7 L477.8 209.8 L478.4 209.1 L479.1 208.7 L479.9 208.4 L480.6 208.4 L481.3 208.7 M489.9 216.3 L489.0 216.2 L488.2 215.9 L487.6 215.3 L487.2 214.7 L487.1 213.9 L487.4 213.1 L487.8 212.2 L488.5 211.4 L489.4 210.8 L490.5 210.2 L491.6 209.8 L492.7 209.7 M490.3 223.6 L489.3 223.8 L488.3 223.7 L487.4 223.5 L486.7 223.1 L486.1 222.6 L485.8 222.0 L485.7 221.2 L485.9 220.5 L486.3 219.7 L486.8 218.9 L487.6 218.2 L488.5 217.5 M467.0 209.7 L467.9 209.7 L468.9 210.2 L469.8 211.0 L470.7 212.1 L471.5 213.4 L472.0 214.9 L472.3 216.5 L472.4 218.0 L472.2 219.3 L471.7 220.3 L471.0 221.0 L470.2 221.3 M471.6 210.3 L472.6 210.4 L473.5 210.9 L474.5 211.8 L475.3 212.8 L476.0 214.1 L476.5 215.5 L476.8 216.9 L476.9 218.2 L476.7 219.5 L476.3 220.5 L475.6 221.2 L474.9 221.7 M482.4 218.4 L482.0 219.4 L481.4 220.2 L480.5 220.6 L479.6 220.7 L478.5 220.5 L477.5 219.9 L476.5 219.1 L475.7 218.0 L475.2 216.7 L474.8 215.5 L474.8 214.2 L475.0 213.1 M481.7 226.4 L480.6 226.0 L479.4 225.3 L478.3 224.2 L477.2 222.9 L476.3 221.4 L475.7 219.9 L475.3 218.4 L475.3 217.0 L475.5 215.9 L476.0 215.1 L476.8 214.7 L477.8 214.6 M477.6 224.7 L477.0 225.0 L476.3 225.0 L475.5 224.7 L474.6 224.3 L473.8 223.6 L473.0 222.8 L472.3 221.8 L471.8 220.8 L471.4 219.7 L471.2 218.7 L471.1 217.7 L471.3 216.9 M500.8 244.7 L501.9 245.7 L502.6 246.9 L503.1 248.0 L503.1 249.0 L502.8 249.8 L502.2 250.3 L501.3 250.6 L500.2 250.5 L498.9 250.1 L497.7 249.3 L496.5 248.4 L495.6 247.3 M492.4 253.9 L491.5 253.7 L490.6 253.3 L489.7 252.7 L488.9 252.1 L488.2 251.3 L487.6 250.5 L487.3 249.7 L487.1 248.9 L487.1 248.2 L487.4 247.5 L487.8 247.0 L488.4 246.7 M511.5 178.4 L511.4 177.6 L511.5 176.6 L511.8 175.5 L512.3 174.4 L513.1 173.3 L514.0 172.2 L515.0 171.3 L516.0 170.6 L517.1 170.1 L518.1 169.8 L519.0 169.7 L519.7 169.9 M519.2 182.9 L518.2 183.5 L517.1 183.8 L516.2 183.8 L515.3 183.5 L514.6 182.9 L514.2 182.1 L514.0 181.2 L514.0 180.0 L514.3 178.9 L514.9 177.7 L515.6 176.6 L516.5 175.7 M523.1 179.1 L524.3 179.1 L525.3 179.5 L526.0 180.2 L526.3 181.3 L526.3 182.6 L525.9 184.1 L525.2 185.5 L524.2 186.9 L523.0 188.0 L521.7 188.9 L520.3 189.3 L519.1 189.4 M519.9 165.4 L520.4 165.9 L520.8 166.6 L521.0 167.5 L521.0 168.5 L520.7 169.6 L520.2 170.6 L519.5 171.6 L518.7 172.5 L517.8 173.3 L516.9 173.8 L515.9 174.1 L515.0 174.2 M519.4 170.9 L520.6 170.4 L521.6 170.3 L522.5 170.5 L523.2 171.1 L523.5 171.9 L523.6 173.0 L523.3 174.2 L522.6 175.4 L521.8 176.6 L520.7 177.6 L519.6 178.3 L518.5 178.7 M542.4 186.1 L542.9 184.9 L543.5 183.8 L544.2 182.8 L545.1 182.2 L546.1 181.9 L546.9 181.8 L547.8 182.1 L548.4 182.8 L548.9 183.7 L549.2 184.7 L549.2 186.0 L548.9 187.2 M552.7 192.9 L552.2 193.7 L551.5 194.4 L550.7 194.9 L549.9 195.1 L549.1 195.1 L548.4 194.8 L547.8 194.2 L547.3 193.4 L547.0 192.5 L546.9 191.5 L547.0 190.4 L547.3 189.3 M542.2 202.1 L541.5 202.6 L540.7 203.0 L539.7 203.3 L538.6 203.4 L537.4 203.3 L536.2 203.1 L535.1 202.7 L534.1 202.2 L533.3 201.6 L532.7 201.0 L532.4 200.3 L532.3 199.6 M537.9 208.2 L537.0 208.6 L535.9 208.9 L534.8 209.1 L533.6 209.1 L532.4 208.9 L531.3 208.5 L530.3 208.0 L529.4 207.4 L528.8 206.7 L528.4 206.0 L528.3 205.2 L528.4 204.5 M522.4 195.4 L522.4 196.8 L522.1 198.2 L521.7 199.4 L521.0 200.5 L520.2 201.2 L519.3 201.6 L518.4 201.5 L517.6 201.2 L516.9 200.4 L516.3 199.4 L516.0 198.1 L515.9 196.7 M523.3 202.7 L523.0 201.5 L522.9 200.3 L523.0 199.1 L523.2 197.9 L523.7 196.8 L524.3 195.9 L525.0 195.3 L525.8 194.9 L526.6 194.8 L527.3 195.0 L528.1 195.5 L528.7 196.3 M539.4 203.8 L537.9 203.9 L536.4 203.9 L535.1 203.7 L534.0 203.3 L533.2 202.8 L532.7 202.2 L532.5 201.5 L532.7 200.8 L533.2 200.0 L534.0 199.3 L535.1 198.7 L536.4 198.1 M542.0 207.5 L541.5 208.3 L540.7 209.0 L539.8 209.7 L538.7 210.2 L537.5 210.6 L536.3 210.8 L535.2 210.8 L534.1 210.7 L533.1 210.3 L532.4 209.8 L531.8 209.2 L531.5 208.5 M498.4 210.1 L497.6 210.5 L496.8 210.6 L496.0 210.4 L495.1 209.9 L494.2 209.3 L493.4 208.4 L492.7 207.4 L492.2 206.3 L491.8 205.1 L491.6 203.9 L491.6 202.8 L491.8 201.8 M501.9 200.1 L502.7 199.8 L503.7 199.8 L504.8 200.3 L505.8 201.0 L506.7 202.1 L507.4 203.4 L508.0 204.7 L508.3 206.2 L508.3 207.5 L508.0 208.7 L507.5 209.6 L506.8 210.3 M531.9 203.7 L533.0 203.4 L534.1 203.2 L535.1 203.2 L536.1 203.4 L536.9 203.8 L537.5 204.3 L537.8 205.0 L537.9 205.7 L537.8 206.6 L537.4 207.4 L536.8 208.2 L536.0 209.0 M530.3 214.4 L529.8 213.8 L529.5 213.1 L529.4 212.2 L529.5 211.3 L529.9 210.4 L530.5 209.6 L531.3 208.8 L532.2 208.1 L533.3 207.6 L534.3 207.3 L535.4 207.2 L536.3 207.3 M521.6 209.1 L522.2 208.5 L522.9 208.1 L523.8 208.0 L524.7 208.2 L525.6 208.7 L526.5 209.4 L527.2 210.3 L527.7 211.3 L528.0 212.4 L528.1 213.5 L527.9 214.5 L527.5 215.3 M527.4 208.0 L528.0 207.4 L528.7 207.0 L529.5 206.9 L530.4 207.2 L531.2 207.6 L532.0 208.4 L532.7 209.4 L533.3 210.5 L533.6 211.7 L533.8 212.9 L533.8 214.1 L533.6 215.2 M525.0 210.0 L525.6 209.0 L526.5 208.1 L527.8 207.2 L529.2 206.6 L530.7 206.2 L532.3 206.1 L533.6 206.3 L534.8 206.7 L535.6 207.4 L536.0 208.3 L536.0 209.2 L535.6 210.2 M523.8 217.3 L523.7 216.3 L524.0 215.3 L524.8 214.2 L525.9 213.3 L527.3 212.6 L528.8 212.1 L530.3 212.0 L531.7 212.1 L532.8 212.6 L533.6 213.3 L534.0 214.2 L533.9 215.2 M528.6 217.8 L530.1 217.5 L531.6 217.4 L533.0 217.5 L534.1 217.9 L535.0 218.5 L535.5 219.2 L535.6 220.1 L535.4 221.0 L534.8 222.0 L533.8 222.9 L532.6 223.6 L531.2 224.3 M527.2 240.4 L525.9 241.2 L524.6 241.7 L523.4 242.0 L522.3 242.0 L521.4 241.7 L520.8 241.2 L520.5 240.5 L520.5 239.5 L520.8 238.4 L521.3 237.3 L522.2 236.1 L523.3 235.0 M534.5 239.8 L534.3 240.8 L533.8 241.9 L532.9 243.1 L531.8 244.3 L530.5 245.5 L529.1 246.4 L527.6 247.2 L526.2 247.7 L525.0 248.0 L524.0 247.9 L523.2 247.5 L522.9 246.9 M506.0 237.8 L504.7 237.7 L503.4 237.5 L502.2 237.1 L501.2 236.6 L500.3 235.9 L499.7 235.2 L499.4 234.4 L499.4 233.6 L499.7 232.8 L500.2 232.1 L501.0 231.5 L502.0 231.0 M502.9 242.4 L501.4 242.2 L499.9 241.8 L498.6 241.3 L497.6 240.6 L496.9 239.9 L496.5 239.1 L496.5 238.3 L496.8 237.6 L497.5 237.0 L498.5 236.5 L499.8 236.2 L501.2 236.1 M539.5 227.0 L540.7 227.6 L541.8 228.3 L542.5 229.2 L543.0 230.1 L543.0 230.9 L542.6 231.7 L541.9 232.3 L540.9 232.6 L539.7 232.7 L538.4 232.5 L537.1 232.1 L535.9 231.5 M530.8 231.6 L531.8 231.2 L533.0 231.1 L534.3 231.1 L535.6 231.4 L536.8 231.9 L537.9 232.6 L538.7 233.4 L539.3 234.3 L539.6 235.2 L539.5 236.1 L539.1 236.9 L538.4 237.5 M533.8 241.7 L532.8 242.0 L531.7 242.0 L530.6 241.9 L529.6 241.5 L528.7 241.1 L527.9 240.4 L527.4 239.7 L527.0 238.9 L527.0 238.1 L527.2 237.3 L527.7 236.6 L528.3 236.0 M528.4 229.4 L528.7 230.5 L528.6 231.5 L528.1 232.2 L527.2 232.6 L526.2 232.6 L524.9 232.3 L523.6 231.6 L522.4 230.7 L521.3 229.7 L520.5 228.5 L520.0 227.3 L519.9 226.3 M523.8 232.7 L523.8 233.7 L523.4 234.4 L522.8 235.0 L521.9 235.3 L520.8 235.2 L519.6 234.9 L518.3 234.3 L517.0 233.4 L515.9 232.4 L515.0 231.3 L514.3 230.1 L514.0 229.0 M514.5 237.7 L512.9 236.8 L511.4 235.6 L510.1 234.2 L509.2 232.7 L508.7 231.3 L508.7 230.0 L509.1 229.0 L510.0 228.4 L511.2 228.2 L512.6 228.4 L514.2 229.0 L515.8 229.9 M528.3 236.2 L528.7 237.1 L528.6 238.0 L528.1 238.7 L527.2 239.4 L526.0 239.8 L524.7 239.9 L523.3 239.8 L521.9 239.4 L520.8 238.8 L519.9 238.0 L519.4 237.1 L519.3 236.2 M519.7 243.3 L519.0 242.8 L518.4 242.2 L518.1 241.5 L517.9 240.8 L518.0 240.0 L518.3 239.3 L518.8 238.6 L519.5 238.1 L520.3 237.6 L521.2 237.3 L522.2 237.1 L523.2 237.1 M520.2 247.6 L518.9 247.5 L517.6 247.2 L516.5 246.7 L515.6 246.0 L515.0 245.2 L514.7 244.3 L514.7 243.4 L515.1 242.5 L515.8 241.8 L516.7 241.2 L517.8 240.8 L519.1 240.6 M502.1 215.9 L502.3 216.9 L502.2 218.0 L501.8 219.2 L501.1 220.5 L500.2 221.7 L499.1 222.8 L497.8 223.7 L496.6 224.3 L495.4 224.6 L494.3 224.6 L493.5 224.3 L492.9 223.7 M503.8 226.4 L502.7 227.6 L501.4 228.6 L500.1 229.3 L498.9 229.7 L497.7 229.7 L496.8 229.5 L496.2 228.9 L495.8 228.0 L495.8 226.9 L496.2 225.6 L496.9 224.3 L497.8 223.0 M525.8 226.5 L526.7 227.1 L527.4 227.8 L527.8 228.6 L527.8 229.4 L527.6 230.2 L527.0 231.0 L526.2 231.7 L525.1 232.2 L523.9 232.5 L522.6 232.6 L521.3 232.5 L520.2 232.2 M518.2 236.5 L517.1 236.1 L516.2 235.6 L515.5 235.0 L515.0 234.4 L514.8 233.7 L514.9 233.0 L515.2 232.3 L515.8 231.7 L516.6 231.2 L517.7 230.9 L518.8 230.6 L520.0 230.5 M514.8 236.0 L515.9 235.3 L517.3 234.9 L518.8 234.7 L520.3 234.7 L521.7 235.1 L522.9 235.7 L523.8 236.5 L524.2 237.4 L524.2 238.4 L523.7 239.3 L522.8 240.1 L521.6 240.7 M504.9 236.0 L505.1 236.8 L505.1 237.4 L504.8 238.0 L504.2 238.5 L503.5 238.8 L502.6 238.9 L501.7 238.9 L500.6 238.7 L499.6 238.4 L498.6 237.9 L497.7 237.3 L497.0 236.6 M490.8 241.7 L490.6 240.7 L490.8 239.7 L491.5 238.9 L492.5 238.3 L493.7 238.0 L495.1 238.0 L496.5 238.3 L497.9 238.8 L499.1 239.6 L500.0 240.6 L500.6 241.6 L500.7 242.6 M531.7 219.6 L530.9 220.4 L529.8 221.0 L528.6 221.3 L527.2 221.3 L525.9 221.0 L524.7 220.5 L523.7 219.7 L523.1 218.8 L522.8 217.8 L522.9 216.8 L523.3 215.9 L524.1 215.2 M523.9 226.5 L522.7 226.6 L521.4 226.3 L520.2 225.8 L519.1 225.2 L518.3 224.4 L517.7 223.4 L517.5 222.5 L517.7 221.6 L518.2 220.8 L519.0 220.2 L520.0 219.8 L521.2 219.6 M503.2 229.2 L504.1 228.1 L505.0 227.4 L505.9 227.1 L506.8 227.3 L507.5 227.8 L508.0 228.7 L508.2 229.9 L508.2 231.4 L508.0 232.9 L507.5 234.5 L506.8 235.9 L506.0 237.2 M510.3 241.3 L509.5 241.7 L508.6 241.7 L507.8 241.5 L507.1 240.9 L506.5 240.1 L506.1 239.0 L506.0 237.8 L506.0 236.5 L506.2 235.2 L506.7 233.9 L507.3 232.8 L508.0 231.9 M515.1 233.8 L515.7 234.7 L516.1 236.2 L516.1 237.9 L515.8 239.7 L515.2 241.6 L514.4 243.3 L513.4 244.7 L512.3 245.7 L511.2 246.2 L510.2 246.1 L509.3 245.4 L508.8 244.3 M497.2 245.0 L498.0 243.9 L499.1 242.9 L500.4 242.0 L502.0 241.2 L503.6 240.8 L505.1 240.6 L506.5 240.7 L507.6 241.0 L508.4 241.7 L508.8 242.5 L508.8 243.5 L508.4 244.6 M499.9 253.4 L499.0 253.0 L498.3 252.4 L498.0 251.6 L498.1 250.7 L498.6 249.7 L499.4 248.8 L500.5 247.9 L501.8 247.1 L503.2 246.6 L504.7 246.3 L506.0 246.2 L507.1 246.4 M498.1 254.9 L499.2 253.8 L500.7 252.8 L502.4 252.0 L504.2 251.5 L505.9 251.3 L507.4 251.4 L508.5 251.8 L509.2 252.5 L509.4 253.4 L509.1 254.5 L508.3 255.6 L507.1 256.7 M383.4 259.4 L382.7 259.9 L381.8 260.1 L381.0 259.9 L380.2 259.4 L379.4 258.6 L378.7 257.5 L378.3 256.3 L378.0 254.9 L377.9 253.6 L378.0 252.3 L378.4 251.1 L378.9 250.2 M384.3 251.9 L385.1 251.4 L386.0 251.2 L387.0 251.3 L388.0 251.7 L388.9 252.4 L389.7 253.3 L390.3 254.4 L390.7 255.6 L390.7 256.7 L390.6 257.8 L390.1 258.8 L389.5 259.5 M386.5 251.6 L385.2 251.5 L383.9 251.2 L383.0 250.6 L382.4 249.8 L382.1 248.9 L382.3 247.9 L382.9 247.0 L383.8 246.1 L385.0 245.4 L386.3 244.9 L387.7 244.7 L389.1 244.8 M386.3 256.6 L385.1 256.5 L384.1 256.2 L383.3 255.7 L382.8 255.0 L382.6 254.1 L382.8 253.3 L383.4 252.4 L384.2 251.7 L385.3 251.1 L386.5 250.7 L387.7 250.6 L388.9 250.8 M382.0 247.3 L383.5 247.6 L384.8 248.3 L385.9 249.1 L386.5 250.1 L386.7 251.2 L386.5 252.2 L385.9 253.1 L384.9 253.8 L383.6 254.2 L382.1 254.4 L380.6 254.3 L379.1 253.8 M377.2 257.5 L378.4 258.0 L379.5 258.7 L380.2 259.5 L380.6 260.3 L380.6 261.1 L380.3 261.9 L379.6 262.5 L378.7 262.9 L377.5 263.1 L376.2 263.1 L374.8 262.8 L373.5 262.4 M413.4 242.4 L413.5 243.3 L413.3 244.3 L412.9 245.3 L412.1 246.3 L411.2 247.1 L410.1 247.8 L408.9 248.3 L407.8 248.5 L406.7 248.5 L405.7 248.2 L405.0 247.7 L404.5 247.0 M412.8 253.7 L412.0 254.6 L411.0 255.4 L409.9 255.9 L408.8 256.2 L407.7 256.2 L406.8 255.9 L406.0 255.4 L405.5 254.7 L405.3 253.8 L405.4 252.8 L405.7 251.8 L406.3 250.8 M447.0 266.6 L446.3 265.8 L445.7 264.8 L445.2 263.8 L444.9 262.7 L444.8 261.7 L444.9 260.8 L445.2 260.0 L445.6 259.4 L446.2 259.1 L446.9 259.0 L447.7 259.1 L448.5 259.5 M438.8 263.7 L438.6 262.6 L438.6 261.5 L438.9 260.6 L439.4 259.9 L440.2 259.4 L441.1 259.2 L442.0 259.4 L443.0 259.8 L444.0 260.4 L444.8 261.3 L445.5 262.3 L445.9 263.4 M434.5 260.4 L435.6 260.4 L436.8 260.6 L437.9 261.2 L438.9 262.0 L439.7 263.0 L440.2 264.1 L440.4 265.3 L440.3 266.3 L439.9 267.3 L439.2 268.0 L438.3 268.4 L437.2 268.5 M440.1 270.7 L440.7 272.1 L440.9 273.6 L440.9 274.8 L440.6 275.8 L440.0 276.5 L439.2 276.7 L438.3 276.5 L437.3 275.9 L436.3 275.0 L435.4 273.8 L434.7 272.4 L434.3 270.9 M427.6 268.1 L428.2 267.6 L429.0 267.4 L429.9 267.6 L430.8 268.1 L431.7 268.8 L432.5 269.8 L433.1 270.9 L433.4 272.1 L433.5 273.2 L433.4 274.2 L432.9 274.9 L432.3 275.4 M422.0 271.0 L421.9 269.8 L422.1 268.6 L422.5 267.6 L423.1 266.7 L423.9 266.1 L424.9 265.9 L425.8 265.9 L426.7 266.3 L427.5 267.0 L428.1 268.0 L428.4 269.1 L428.6 270.3 M429.3 278.1 L429.3 277.0 L429.5 275.9 L429.8 274.7 L430.3 273.7 L430.9 272.7 L431.6 272.0 L432.3 271.5 L433.1 271.2 L433.8 271.2 L434.4 271.5 L434.9 272.0 L435.3 272.7 M451.0 257.5 L451.1 256.3 L451.2 255.1 L451.6 254.0 L452.1 253.0 L452.6 252.3 L453.3 251.8 L454.0 251.5 L454.6 251.6 L455.3 251.9 L455.9 252.5 L456.4 253.3 L456.7 254.3 M460.3 253.2 L460.9 254.1 L461.4 255.2 L461.7 256.5 L461.8 258.0 L461.7 259.5 L461.4 260.9 L460.9 262.1 L460.3 263.2 L459.5 263.9 L458.7 264.3 L457.9 264.3 L457.1 263.9 M464.7 266.3 L463.9 266.6 L463.1 266.6 L462.3 266.3 L461.6 265.7 L461.0 264.9 L460.5 263.8 L460.2 262.6 L460.0 261.3 L460.1 260.0 L460.3 258.7 L460.7 257.6 L461.2 256.6 M455.1 251.1 L455.6 249.8 L456.3 248.8 L457.2 248.0 L458.2 247.6 L459.2 247.7 L460.1 248.1 L460.8 248.8 L461.3 249.9 L461.6 251.2 L461.5 252.5 L461.2 253.9 L460.6 255.1 M465.4 251.1 L466.1 251.6 L466.5 252.3 L466.9 253.2 L467.0 254.2 L467.0 255.4 L466.8 256.5 L466.4 257.7 L465.9 258.7 L465.3 259.6 L464.5 260.3 L463.7 260.8 L462.9 261.1 M465.5 264.4 L464.8 264.3 L464.2 263.9 L463.7 263.3 L463.4 262.4 L463.3 261.4 L463.3 260.3 L463.5 259.1 L463.9 257.9 L464.4 256.8 L465.0 255.8 L465.7 255.0 L466.5 254.4 M469.6 257.5 L469.4 256.7 L469.5 255.7 L469.8 254.8 L470.4 253.9 L471.2 253.1 L472.1 252.5 L473.2 252.0 L474.2 251.8 L475.2 251.8 L476.1 252.0 L476.8 252.4 L477.3 253.1 M476.8 260.0 L477.8 260.4 L478.6 261.1 L478.9 262.1 L478.9 263.2 L478.3 264.3 L477.5 265.4 L476.3 266.3 L474.9 267.1 L473.4 267.6 L471.9 267.7 L470.6 267.6 L469.5 267.1 M468.8 258.4 L469.6 257.6 L470.4 256.9 L471.3 256.5 L472.1 256.4 L472.9 256.5 L473.5 256.9 L473.9 257.5 L474.2 258.2 L474.2 259.2 L474.0 260.2 L473.6 261.2 L473.1 262.2 M475.7 261.1 L476.4 261.2 L477.1 261.6 L477.5 262.2 L477.8 263.0 L477.9 263.9 L477.7 264.9 L477.4 265.9 L476.8 266.9 L476.1 267.7 L475.3 268.4 L474.5 268.8 L473.6 269.0 M479.9 266.4 L480.6 267.1 L481.1 268.1 L481.3 269.2 L481.3 270.4 L481.0 271.6 L480.5 272.7 L479.8 273.7 L478.9 274.4 L477.9 274.8 L477.0 274.9 L476.1 274.6 L475.3 274.1 M495.5 252.1 L495.4 253.6 L495.0 254.9 L494.4 255.9 L493.7 256.7 L492.8 257.1 L491.8 257.1 L490.9 256.7 L490.1 255.9 L489.4 254.9 L488.9 253.6 L488.7 252.1 L488.8 250.7 M494.5 254.1 L494.7 252.7 L495.1 251.4 L495.7 250.4 L496.5 249.7 L497.3 249.4 L498.1 249.5 L498.8 250.0 L499.5 250.9 L500.0 252.0 L500.3 253.4 L500.3 254.9 L500.2 256.3 M499.8 252.0 L500.5 251.2 L501.2 250.7 L502.1 250.5 L502.9 250.7 L503.7 251.2 L504.4 252.1 L504.9 253.2 L505.3 254.5 L505.4 255.8 L505.4 257.2 L505.1 258.5 L504.6 259.6 M429.7 241.3 L430.3 241.7 L430.7 242.3 L430.8 243.0 L430.7 244.0 L430.4 245.0 L429.8 246.0 L429.0 247.0 L428.1 247.9 L427.1 248.7 L426.0 249.4 L424.9 249.8 L424.0 249.9 M434.0 251.3 L433.3 252.6 L432.3 253.9 L431.0 255.2 L429.6 256.3 L428.1 257.2 L426.7 257.8 L425.4 258.0 L424.4 258.0 L423.6 257.6 L423.2 256.9 L423.1 255.9 L423.4 254.7 M521.8 245.1 L522.2 245.8 L522.4 246.7 L522.3 247.7 L521.9 248.8 L521.2 249.8 L520.3 250.8 L519.2 251.6 L518.1 252.1 L516.9 252.4 L515.8 252.4 L514.9 252.2 L514.2 251.7 M515.5 257.8 L515.3 256.9 L515.3 255.9 L515.7 254.8 L516.3 253.8 L517.2 252.9 L518.2 252.1 L519.3 251.6 L520.4 251.4 L521.4 251.4 L522.2 251.8 L522.9 252.4 L523.3 253.2 M501.3 245.9 L501.9 246.7 L502.3 247.7 L502.4 249.0 L502.2 250.4 L501.8 251.7 L501.0 253.0 L500.1 254.1 L499.1 254.9 L498.0 255.4 L496.9 255.5 L496.0 255.2 L495.3 254.5 M499.8 252.6 L500.5 251.8 L501.2 251.2 L502.0 250.7 L502.8 250.4 L503.6 250.4 L504.3 250.6 L505.0 251.0 L505.4 251.6 L505.8 252.4 L505.9 253.3 L505.9 254.3 L505.7 255.4 M505.9 255.9 L506.6 256.1 L507.1 256.5 L507.6 257.0 L507.9 257.7 L508.0 258.5 L508.0 259.5 L507.8 260.4 L507.4 261.3 L507.0 262.2 L506.4 263.0 L505.7 263.6 L505.0 264.0 M502.4 246.1 L503.1 245.1 L503.9 244.4 L504.8 244.0 L505.6 243.9 L506.4 244.1 L507.1 244.6 L507.7 245.5 L508.0 246.5 L508.2 247.8 L508.2 249.2 L508.0 250.6 L507.6 252.0 M514.3 248.9 L514.5 250.2 L514.5 251.8 L514.3 253.5 L513.8 255.3 L513.1 257.1 L512.3 258.6 L511.4 259.7 L510.4 260.5 L509.5 260.8 L508.8 260.6 L508.2 259.9 L507.8 258.8 M531.2 247.4 L532.9 247.5 L534.6 247.8 L536.1 248.3 L537.4 248.9 L538.3 249.7 L538.8 250.6 L538.8 251.4 L538.4 252.3 L537.6 253.0 L536.3 253.5 L534.8 253.9 L533.2 254.0 M535.4 256.3 L534.7 257.1 L533.6 257.8 L532.3 258.3 L530.8 258.6 L529.3 258.6 L527.8 258.4 L526.4 258.0 L525.3 257.3 L524.4 256.5 L524.0 255.6 L523.9 254.6 L524.3 253.7 M526.7 263.9 L525.1 263.6 L523.6 263.2 L522.3 262.5 L521.3 261.8 L520.7 261.0 L520.5 260.1 L520.7 259.3 L521.3 258.5 L522.3 257.9 L523.5 257.4 L525.0 257.1 L526.7 257.0 M503.1 264.2 L503.8 264.4 L504.5 264.8 L505.1 265.5 L505.7 266.3 L506.2 267.3 L506.5 268.4 L506.8 269.6 L506.9 270.8 L506.8 271.9 L506.6 272.9 L506.3 273.8 L505.8 274.4 M512.1 273.6 L511.5 274.5 L510.8 275.0 L510.0 275.2 L509.0 275.0 L508.1 274.4 L507.3 273.5 L506.7 272.3 L506.2 271.0 L506.0 269.6 L506.1 268.3 L506.4 267.1 L507.0 266.2 M512.7 275.5 L511.8 274.9 L511.1 274.1 L510.4 273.2 L509.9 272.1 L509.7 270.9 L509.6 269.7 L509.8 268.7 L510.1 267.8 L510.7 267.1 L511.4 266.6 L512.3 266.4 L513.1 266.5" fill="none" stroke="#d00c0c" stroke-width="4.6" stroke-linecap="round" stroke-linejoin="round"/>
<path d="M515.4 129.0 L513.9 129.1 L512.5 129.1 L511.4 128.9 L510.5 128.6 M522.4 129.6 L522.4 130.5 L522.1 131.4 L521.4 132.4 L520.5 133.3 M520.8 139.9 L518.9 140.7 L516.9 141.4 L514.9 141.8 L513.0 141.9 M514.3 141.7 L516.5 141.1 L518.6 140.8 L520.5 140.7 L522.0 140.9 M511.7 150.5 L512.8 149.6 L514.3 148.9 L515.8 148.4 L517.4 148.0 M518.7 159.9 L517.2 160.5 L515.8 160.9 L514.3 161.1 L513.0 161.1 M509.9 166.9 L508.9 166.3 L508.4 165.5 L508.3 164.5 L508.9 163.3 M511.9 168.1 L513.4 167.4 L515.0 166.8 L516.7 166.5 L518.2 166.4 M386.7 255.6 L388.3 255.4 L389.8 255.4 L391.0 255.6 L392.0 256.0 M387.7 262.3 L389.8 262.2 L391.5 262.4 L392.6 263.0 L393.1 263.8 M380.6 271.3 L382.1 270.6 L383.9 270.0 L385.6 269.5 L387.4 269.2 M379.4 278.8 L380.8 277.8 L382.4 277.0 L384.3 276.3 L386.1 275.9 M391.7 286.6 L390.6 287.8 L388.9 288.8 L387.0 289.7 L384.9 290.4 M382.9 155.6 L381.8 156.2 L380.5 156.6 L379.1 156.7 L377.7 156.5 M371.6 156.1 L372.2 155.4 L372.9 154.8 L373.9 154.4 L374.9 154.1 M382.5 147.9 L383.4 148.4 L384.1 149.1 L384.4 150.0 L384.3 151.0 M379.8 153.5 L381.0 153.3 L382.1 153.4 L383.1 153.8 L383.8 154.4 M368.2 152.7 L367.2 153.1 L366.1 153.4 L365.1 153.4 L364.2 153.1 M366.3 155.7 L366.2 154.8 L366.4 153.7 L366.8 152.7 L367.5 151.8 M369.8 156.0 L370.6 155.6 L371.4 155.4 L372.2 155.3 L372.9 155.4 M376.3 156.1 L377.4 156.1 L378.6 156.6 L379.8 157.4 L380.9 158.6 M373.9 165.2 L373.5 166.1 L372.8 166.7 L371.9 166.8 L370.9 166.6 M401.4 148.6 L402.5 148.5 L403.8 148.8 L405.2 149.4 L406.4 150.2 M397.2 151.9 L398.2 152.4 L399.1 153.2 L399.8 154.0 L400.3 155.0 M394.2 145.1 L393.2 145.4 L392.1 145.5 L390.7 145.2 L389.4 144.7 M382.6 146.3 L381.6 145.3 L380.8 144.2 L380.3 143.1 L380.2 142.1 M417.7 157.0 L417.8 156.1 L418.3 155.2 L419.0 154.4 L420.0 153.7 M423.1 164.4 L422.0 164.7 L420.9 164.8 L419.9 164.7 L419.0 164.3 M421.9 142.6 L420.5 143.1 L419.3 143.4 L418.1 143.4 L417.2 143.1 M427.9 145.3 L427.3 146.2 L426.5 147.1 L425.5 147.9 L424.5 148.6 M470.5 137.5 L471.0 138.4 L471.3 139.3 L471.2 140.3 L470.8 141.1 M458.6 142.7 L457.9 141.9 L457.4 141.0 L457.1 140.1 L457.1 139.3 M453.8 143.4 L453.7 142.5 L453.8 141.8 L454.2 141.1 L454.9 140.7 M472.0 144.2 L471.6 144.7 L471.0 145.1 L470.2 145.3 L469.3 145.3 M467.6 143.0 L468.1 144.2 L468.3 145.3 L468.2 146.3 L467.7 147.1 M462.5 148.9 L461.5 149.3 L460.3 149.4 L459.0 149.0 L457.6 148.3 M402.2 163.9 L402.7 164.5 L403.0 165.2 L403.0 166.2 L402.8 167.1 M404.0 172.7 L403.2 173.7 L402.2 174.6 L401.1 175.3 L399.9 175.9 M404.4 172.9 L405.0 173.5 L405.3 174.4 L405.1 175.4 L404.7 176.5 M384.3 162.3 L385.7 162.5 L387.0 162.9 L388.1 163.5 L389.1 164.2 M385.8 173.8 L384.7 174.1 L383.4 174.1 L382.1 174.0 L380.9 173.8 M381.3 172.9 L382.5 173.5 L383.4 174.2 L384.1 175.1 L384.3 176.0 M401.9 169.6 L403.1 170.3 L404.0 171.1 L404.6 172.0 L404.8 172.9 M398.6 178.6 L398.9 179.6 L398.7 180.6 L398.1 181.4 L397.2 182.0 M388.1 187.8 L387.5 188.3 L386.8 188.6 L386.0 188.5 L385.0 188.1 M372.4 182.7 L372.6 181.7 L373.1 180.8 L373.8 180.3 L374.7 180.1 M367.9 173.0 L369.3 173.0 L370.7 173.2 L372.0 173.6 L373.0 174.2 M368.7 184.6 L367.2 184.8 L365.7 184.6 L364.3 184.3 L363.1 183.7 M367.4 186.0 L368.3 186.5 L369.0 187.1 L369.5 187.7 L369.7 188.3 M375.5 177.0 L374.2 176.7 L373.0 176.2 L372.0 175.6 L371.3 174.8 M374.8 175.6 L376.0 175.9 L377.1 176.5 L377.9 177.2 L378.4 178.0 M362.9 166.4 L363.9 166.1 L364.9 166.3 L366.0 166.9 L367.0 167.8 M369.0 168.4 L369.6 168.2 L370.3 168.2 L371.1 168.5 L371.8 169.0 M373.1 176.8 L372.3 175.9 L371.7 174.9 L371.3 173.8 L371.2 172.6 M368.6 192.1 L369.2 191.4 L370.0 190.9 L371.0 190.6 L372.1 190.7 M370.5 195.7 L371.2 196.7 L371.6 197.7 L371.8 198.7 L371.7 199.6 M384.9 206.7 L383.7 206.7 L382.4 206.3 L381.1 205.8 L379.9 205.0 M376.1 207.4 L375.4 206.7 L374.8 205.8 L374.4 204.9 L374.3 204.0 M378.1 211.3 L377.5 211.7 L376.8 211.8 L375.9 211.8 L374.9 211.6 M378.6 189.9 L379.7 190.0 L380.9 190.4 L382.0 191.0 L383.0 191.9 M378.0 199.1 L377.6 199.6 L377.1 200.0 L376.4 200.2 L375.7 200.2 M371.8 201.9 L371.1 202.2 L370.2 202.2 L369.2 202.0 L368.2 201.6 M363.6 186.1 L364.5 185.6 L365.4 185.5 L366.1 185.7 L366.7 186.4 M368.6 193.3 L369.3 192.5 L370.1 191.9 L371.0 191.6 L371.8 191.6 M372.9 182.0 L373.2 182.8 L373.0 183.7 L372.5 184.8 L371.6 185.9 M372.0 188.4 L373.2 188.3 L374.2 188.5 L374.9 189.0 L375.3 189.8 M391.3 192.6 L392.7 192.5 L394.0 192.6 L395.1 192.9 L395.9 193.4 M385.4 207.2 L385.9 206.3 L386.7 205.5 L387.8 204.8 L389.0 204.2 M402.9 211.6 L402.5 212.5 L401.7 213.0 L400.5 213.2 L399.0 213.1 M390.8 214.4 L389.7 213.6 L388.7 212.7 L387.9 211.8 L387.4 210.9 M387.2 211.8 L388.8 212.3 L390.3 213.0 L391.8 214.0 L392.9 215.1 M398.6 200.9 L398.4 201.9 L398.1 202.7 L397.6 203.4 L397.0 203.8 M405.3 206.6 L404.4 206.3 L403.5 205.8 L402.8 204.9 L402.2 203.9 M386.7 194.8 L386.7 193.7 L386.9 192.7 L387.3 191.8 L387.9 191.0 M394.0 201.0 L393.4 200.1 L393.0 199.0 L392.9 197.8 L392.9 196.6 M391.3 197.1 L390.8 197.8 L390.1 198.2 L389.3 198.4 L388.6 198.3 M393.0 192.3 L393.8 191.9 L394.6 191.7 L395.4 191.9 L396.2 192.3 M410.4 205.7 L410.1 206.7 L409.5 207.5 L408.9 208.1 L408.2 208.5 M412.4 212.9 L411.5 212.8 L410.7 212.3 L410.0 211.4 L409.5 210.3 M368.5 204.7 L369.2 206.0 L369.4 207.2 L369.2 208.2 L368.7 208.8 M362.1 211.3 L361.0 211.2 L359.7 210.7 L358.5 209.9 L357.3 209.0 M351.9 205.7 L353.2 205.6 L354.6 205.9 L356.0 206.6 L357.2 207.5 M356.5 205.4 L356.7 204.2 L357.1 203.2 L357.7 202.4 L358.4 201.9 M366.3 211.9 L365.5 211.7 L364.7 211.2 L364.0 210.4 L363.4 209.5 M367.9 206.9 L368.1 208.6 L368.0 210.1 L367.6 211.4 L367.0 212.4 M374.0 207.2 L374.3 208.6 L374.4 209.8 L374.2 211.0 L373.8 212.0 M377.6 204.1 L378.5 204.8 L379.3 205.9 L380.0 207.1 L380.4 208.5 M341.2 227.6 L340.7 228.8 L340.0 229.6 L339.1 229.9 L338.1 229.6 M348.6 220.9 L349.3 222.0 L349.9 223.2 L350.3 224.6 L350.5 226.0 M389.1 215.8 L388.9 216.8 L388.6 217.7 L388.2 218.5 L387.6 219.3 M391.5 226.5 L390.6 226.7 L389.8 226.6 L389.1 226.2 L388.6 225.4 M394.5 214.8 L394.8 216.0 L394.7 217.1 L394.1 218.0 L393.2 218.6 M379.8 219.1 L380.1 218.3 L380.7 217.6 L381.6 217.1 L382.6 216.8 M397.7 223.2 L397.6 224.0 L397.2 224.7 L396.7 225.1 L395.9 225.4 M389.4 228.8 L388.2 228.3 L387.0 227.5 L385.9 226.6 L385.0 225.6 M378.4 225.3 L378.4 224.4 L378.7 223.6 L379.2 223.0 L379.9 222.6 M383.8 212.5 L383.0 212.0 L382.5 211.2 L382.3 210.4 L382.5 209.4 M386.6 220.4 L385.8 220.5 L385.0 220.5 L384.3 220.3 L383.6 219.9 M380.6 216.7 L381.5 217.0 L382.2 217.6 L382.6 218.7 L382.7 220.1 M382.9 220.4 L383.7 220.4 L384.4 220.6 L385.0 221.1 L385.3 221.9 M383.3 224.5 L384.6 223.4 L385.8 222.9 L386.9 222.8 L387.8 223.2 M392.3 237.9 L391.4 237.5 L390.5 236.9 L389.7 236.1 L389.0 235.2 M382.4 233.1 L382.3 232.1 L382.5 231.2 L382.8 230.4 L383.3 229.8 M382.5 237.8 L381.6 238.1 L380.6 238.1 L379.6 237.7 L378.6 237.1 M401.9 221.8 L401.3 223.0 L400.5 224.0 L399.7 224.7 L398.9 225.0 M406.7 218.8 L407.5 219.1 L408.1 219.7 L408.7 220.5 L409.1 221.5 M405.0 227.3 L405.0 226.4 L405.4 225.5 L406.1 224.6 L407.2 223.7 M406.3 236.5 L406.7 235.6 L407.5 234.6 L408.6 233.6 L410.0 232.8 M360.2 250.3 L359.4 248.9 L359.0 247.5 L358.9 246.2 L359.2 245.1 M361.6 254.2 L360.8 254.6 L359.9 254.8 L358.8 254.6 L357.7 254.2 M353.6 256.1 L352.6 255.3 L351.5 254.4 L350.7 253.3 L350.0 252.1 M376.5 245.8 L376.9 246.7 L377.0 247.5 L376.8 248.2 L376.4 248.7 M369.6 249.1 L370.5 250.1 L371.0 251.1 L371.3 252.0 L371.2 252.8 M409.5 242.8 L407.9 243.4 L406.5 243.8 L405.4 243.7 L404.5 243.4 M412.8 248.3 L411.8 248.9 L410.8 249.3 L409.7 249.4 L408.8 249.3 M416.5 247.5 L416.8 248.2 L416.9 249.1 L416.8 250.0 L416.5 251.0 M382.6 234.5 L382.9 235.8 L383.0 237.1 L383.0 238.6 L382.7 240.1 M385.1 235.7 L385.8 236.0 L386.5 236.6 L387.0 237.6 L387.3 238.8 M393.3 246.9 L392.7 248.6 L391.9 249.9 L390.9 250.8 L389.8 251.2 M391.4 252.4 L391.2 253.5 L390.8 254.3 L390.1 254.7 L389.3 254.7 M374.6 247.8 L374.9 246.7 L375.5 245.9 L376.4 245.4 L377.5 245.2 M388.1 238.8 L388.6 237.8 L389.4 237.1 L390.4 236.8 L391.4 236.9 M399.4 247.5 L398.2 247.4 L397.1 246.8 L396.0 245.9 L395.1 244.6 M406.6 243.6 L406.6 245.1 L406.3 246.3 L405.8 247.2 L405.2 247.7 M398.9 247.4 L397.7 248.5 L396.3 249.5 L394.8 250.1 L393.4 250.4 M399.8 252.5 L398.7 253.3 L397.4 254.1 L396.1 254.6 L394.8 255.0 M396.8 259.6 L395.5 259.8 L394.4 259.8 L393.5 259.6 L392.9 259.1 M415.9 181.4 L414.7 181.9 L413.6 182.0 L412.7 181.6 L412.0 180.8 M416.5 182.5 L416.6 181.5 L416.9 180.4 L417.4 179.4 L418.0 178.5 M414.1 184.3 L413.3 184.2 L412.6 183.7 L412.0 182.9 L411.5 181.7 M416.1 184.9 L415.7 183.7 L415.4 182.4 L415.4 181.0 L415.6 179.7 M422.2 179.7 L422.9 179.0 L423.6 178.5 L424.4 178.4 L425.2 178.5 M427.6 187.1 L426.6 185.9 L425.6 184.6 L424.8 183.2 L424.2 181.8 M418.1 189.1 L416.9 187.5 L416.0 185.9 L415.4 184.3 L415.2 182.8 M422.6 179.1 L423.7 178.6 L424.9 178.1 L426.1 177.9 L427.3 177.8 M423.2 183.5 L424.4 183.1 L425.5 182.8 L426.6 182.8 L427.7 182.9 M423.2 176.0 L421.8 175.9 L420.2 175.5 L418.7 174.8 L417.3 173.8 M412.6 178.2 L411.5 177.2 L410.8 176.2 L410.4 175.1 L410.4 174.1 M461.9 176.5 L460.8 177.7 L459.6 178.7 L458.4 179.4 L457.2 179.7 M464.7 187.0 L463.8 187.1 L462.9 186.8 L462.2 186.4 L461.6 185.6 M460.0 171.9 L459.6 171.0 L459.6 170.0 L460.0 169.0 L460.8 168.0 M466.2 174.0 L467.0 174.5 L467.6 175.2 L467.8 176.0 L467.6 176.8 M469.1 169.3 L469.9 169.9 L470.4 170.5 L470.6 171.2 L470.6 172.0 M467.3 175.4 L468.5 175.9 L469.2 176.6 L469.5 177.3 L469.4 178.1 M468.1 182.0 L467.8 182.9 L467.3 183.7 L466.5 184.5 L465.5 185.1 M471.8 188.0 L470.3 188.3 L469.0 188.3 L467.7 188.2 L466.7 187.8 M471.3 189.2 L472.9 188.8 L474.4 188.7 L475.7 189.0 L476.8 189.5 M472.2 178.5 L473.3 178.3 L474.4 178.3 L475.3 178.5 L476.0 178.8 M468.1 191.9 L467.1 191.5 L466.4 190.9 L466.0 190.1 L465.9 189.1 M466.8 194.2 L467.1 193.3 L467.6 192.4 L468.4 191.6 L469.4 190.8 M488.5 212.9 L489.0 211.4 L489.7 210.0 L490.6 208.6 L491.6 207.5 M497.6 214.0 L498.4 213.5 L499.3 213.2 L500.0 213.2 L500.7 213.5 M487.3 194.6 L487.6 193.1 L488.1 191.9 L488.9 191.0 L489.8 190.4 M498.8 201.6 L497.8 201.6 L496.8 201.3 L495.8 200.6 L495.1 199.6 M483.9 193.4 L482.8 192.6 L482.2 191.6 L481.9 190.6 L482.1 189.7 M483.5 197.9 L482.3 197.5 L481.3 197.0 L480.5 196.3 L479.9 195.7 M487.3 200.0 L486.8 200.8 L486.1 201.5 L485.1 202.0 L483.8 202.4 M479.5 204.6 L480.5 204.2 L481.8 203.9 L483.2 203.8 L484.7 203.9 M481.0 215.8 L479.5 215.3 L478.2 214.7 L477.1 213.9 L476.4 213.0 M429.6 204.0 L429.8 205.1 L429.8 206.1 L429.6 207.0 L429.2 207.7 M418.2 199.9 L419.5 200.7 L420.6 201.9 L421.6 203.3 L422.3 204.8 M415.1 211.2 L415.7 209.7 L416.4 208.6 L417.4 207.7 L418.3 207.3 M429.0 220.3 L428.5 221.5 L427.8 222.4 L427.1 223.1 L426.2 223.6 M421.2 225.2 L420.3 225.0 L419.5 224.6 L418.9 223.9 L418.5 223.0 M422.4 226.4 L422.3 225.1 L422.4 223.9 L422.7 222.7 L423.4 221.7 M427.2 233.2 L426.4 233.1 L425.7 232.6 L425.3 231.9 L425.1 230.9 M433.6 226.2 L433.8 227.4 L433.7 228.6 L433.5 229.7 L433.1 230.5 M439.4 225.5 L439.9 226.7 L440.2 228.0 L440.2 229.2 L440.1 230.3 M440.7 224.3 L440.7 225.7 L440.5 227.0 L440.0 227.9 L439.2 228.6 M432.5 220.0 L433.4 221.3 L434.1 222.7 L434.6 224.2 L434.8 225.7 M423.5 219.0 L424.0 218.6 L424.6 218.4 L425.4 218.5 L426.1 218.9 M414.7 223.2 L415.1 224.2 L415.4 225.2 L415.5 226.3 L415.4 227.3 M415.7 229.0 L415.0 228.5 L414.4 227.9 L413.8 227.1 L413.4 226.3 M422.5 230.8 L421.6 230.4 L420.7 229.9 L420.0 229.1 L419.3 228.1 M442.9 233.0 L443.7 232.8 L444.7 232.8 L445.8 233.1 L446.8 233.7 M444.4 237.5 L444.6 238.5 L444.6 239.4 L444.4 240.2 L444.0 240.9 M439.8 241.7 L439.7 242.5 L439.4 243.2 L438.9 243.6 L438.3 243.9 M446.0 242.5 L445.2 243.1 L444.2 243.5 L443.2 243.8 L442.1 244.0 M436.6 247.3 L436.2 246.6 L436.0 245.8 L436.1 244.9 L436.6 244.1 M441.1 254.4 L440.0 254.6 L439.0 254.7 L438.0 254.4 L437.2 254.0 M433.9 239.2 L434.8 238.0 L436.1 236.8 L437.5 235.9 L439.1 235.2 M440.0 241.3 L441.4 240.8 L442.7 240.6 L443.8 240.8 L444.7 241.2 M449.9 242.3 L449.9 243.7 L449.6 245.0 L449.0 246.0 L448.1 246.6 M448.3 242.2 L448.5 241.0 L448.9 240.0 L449.6 239.2 L450.4 238.7 M455.5 247.6 L455.0 246.5 L454.6 245.4 L454.5 244.2 L454.6 243.1 M486.2 219.5 L486.3 218.2 L486.8 216.9 L487.6 215.5 L488.7 214.1 M497.1 227.9 L496.1 228.5 L495.2 228.9 L494.3 229.0 L493.5 228.9 M483.3 206.0 L484.0 206.6 L484.4 207.3 L484.5 208.1 L484.4 209.0 M480.2 212.8 L481.3 212.9 L482.3 213.2 L483.0 213.6 L483.5 214.2 M473.6 205.1 L474.5 204.5 L475.4 204.2 L476.2 204.4 L477.0 204.9 M476.4 212.8 L476.7 211.7 L477.2 210.7 L477.8 209.8 L478.4 209.1 M487.2 214.7 L487.1 213.9 L487.4 213.1 L487.8 212.2 L488.5 211.4 M486.7 223.1 L486.1 222.6 L485.8 222.0 L485.7 221.2 L485.9 220.5 M470.7 212.1 L471.5 213.4 L472.0 214.9 L472.3 216.5 L472.4 218.0 M475.3 212.8 L476.0 214.1 L476.5 215.5 L476.8 216.9 L476.9 218.2 M479.6 220.7 L478.5 220.5 L477.5 219.9 L476.5 219.1 L475.7 218.0 M477.2 222.9 L476.3 221.4 L475.7 219.9 L475.3 218.4 L475.3 217.0 M474.6 224.3 L473.8 223.6 L473.0 222.8 L472.3 221.8 L471.8 220.8 M503.1 249.0 L502.8 249.8 L502.2 250.3 L501.3 250.6 L500.2 250.5 M488.9 252.1 L488.2 251.3 L487.6 250.5 L487.3 249.7 L487.1 248.9 M512.3 174.4 L513.1 173.3 L514.0 172.2 L515.0 171.3 L516.0 170.6 M515.3 183.5 L514.6 182.9 L514.2 182.1 L514.0 181.2 L514.0 180.0 M526.3 181.3 L526.3 182.6 L525.9 184.1 L525.2 185.5 L524.2 186.9 M521.0 168.5 L520.7 169.6 L520.2 170.6 L519.5 171.6 L518.7 172.5 M523.2 171.1 L523.5 171.9 L523.6 173.0 L523.3 174.2 L522.6 175.4 M545.1 182.2 L546.1 181.9 L546.9 181.8 L547.8 182.1 L548.4 182.8 M549.9 195.1 L549.1 195.1 L548.4 194.8 L547.8 194.2 L547.3 193.4 M538.6 203.4 L537.4 203.3 L536.2 203.1 L535.1 202.7 L534.1 202.2 M533.6 209.1 L532.4 208.9 L531.3 208.5 L530.3 208.0 L529.4 207.4 M521.0 200.5 L520.2 201.2 L519.3 201.6 L518.4 201.5 L517.6 201.2 M523.2 197.9 L523.7 196.8 L524.3 195.9 L525.0 195.3 L525.8 194.9 M534.0 203.3 L533.2 202.8 L532.7 202.2 L532.5 201.5 L532.7 200.8 M538.7 210.2 L537.5 210.6 L536.3 210.8 L535.2 210.8 L534.1 210.7 M495.1 209.9 L494.2 209.3 L493.4 208.4 L492.7 207.4 L492.2 206.3 M505.8 201.0 L506.7 202.1 L507.4 203.4 L508.0 204.7 L508.3 206.2 M536.1 203.4 L536.9 203.8 L537.5 204.3 L537.8 205.0 L537.9 205.7 M529.5 211.3 L529.9 210.4 L530.5 209.6 L531.3 208.8 L532.2 208.1 M524.7 208.2 L525.6 208.7 L526.5 209.4 L527.2 210.3 L527.7 211.3 M530.4 207.2 L531.2 207.6 L532.0 208.4 L532.7 209.4 L533.3 210.5 M529.2 206.6 L530.7 206.2 L532.3 206.1 L533.6 206.3 L534.8 206.7 M525.9 213.3 L527.3 212.6 L528.8 212.1 L530.3 212.0 L531.7 212.1 M534.1 217.9 L535.0 218.5 L535.5 219.2 L535.6 220.1 L535.4 221.0 M522.3 242.0 L521.4 241.7 L520.8 241.2 L520.5 240.5 L520.5 239.5 M531.8 244.3 L530.5 245.5 L529.1 246.4 L527.6 247.2 L526.2 247.7 M501.2 236.6 L500.3 235.9 L499.7 235.2 L499.4 234.4 L499.4 233.6 M497.6 240.6 L496.9 239.9 L496.5 239.1 L496.5 238.3 L496.8 237.6 M543.0 230.1 L543.0 230.9 L542.6 231.7 L541.9 232.3 L540.9 232.6 M535.6 231.4 L536.8 231.9 L537.9 232.6 L538.7 233.4 L539.3 234.3 M529.6 241.5 L528.7 241.1 L527.9 240.4 L527.4 239.7 L527.0 238.9 M527.2 232.6 L526.2 232.6 L524.9 232.3 L523.6 231.6 L522.4 230.7 M521.9 235.3 L520.8 235.2 L519.6 234.9 L518.3 234.3 L517.0 233.4 M509.2 232.7 L508.7 231.3 L508.7 230.0 L509.1 229.0 L510.0 228.4 M527.2 239.4 L526.0 239.8 L524.7 239.9 L523.3 239.8 L521.9 239.4 M517.9 240.8 L518.0 240.0 L518.3 239.3 L518.8 238.6 L519.5 238.1 M515.6 246.0 L515.0 245.2 L514.7 244.3 L514.7 243.4 L515.1 242.5 M501.1 220.5 L500.2 221.7 L499.1 222.8 L497.8 223.7 L496.6 224.3 M498.9 229.7 L497.7 229.7 L496.8 229.5 L496.2 228.9 L495.8 228.0 M527.8 229.4 L527.6 230.2 L527.0 231.0 L526.2 231.7 L525.1 232.2 M515.0 234.4 L514.8 233.7 L514.9 233.0 L515.2 232.3 L515.8 231.7 M520.3 234.7 L521.7 235.1 L522.9 235.7 L523.8 236.5 L524.2 237.4 M504.2 238.5 L503.5 238.8 L502.6 238.9 L501.7 238.9 L500.6 238.7 M492.5 238.3 L493.7 238.0 L495.1 238.0 L496.5 238.3 L497.9 238.8 M527.2 221.3 L525.9 221.0 L524.7 220.5 L523.7 219.7 L523.1 218.8 M519.1 225.2 L518.3 224.4 L517.7 223.4 L517.5 222.5 L517.7 221.6 M506.8 227.3 L507.5 227.8 L508.0 228.7 L508.2 229.9 L508.2 231.4 M507.1 240.9 L506.5 240.1 L506.1 239.0 L506.0 237.8 L506.0 236.5 M515.8 239.7 L515.2 241.6 L514.4 243.3 L513.4 244.7 L512.3 245.7 M502.0 241.2 L503.6 240.8 L505.1 240.6 L506.5 240.7 L507.6 241.0 M498.1 250.7 L498.6 249.7 L499.4 248.8 L500.5 247.9 L501.8 247.1 M504.2 251.5 L505.9 251.3 L507.4 251.4 L508.5 251.8 L509.2 252.5 M380.2 259.4 L379.4 258.6 L378.7 257.5 L378.3 256.3 L378.0 254.9 M388.0 251.7 L388.9 252.4 L389.7 253.3 L390.3 254.4 L390.7 255.6 M382.4 249.8 L382.1 248.9 L382.3 247.9 L382.9 247.0 L383.8 246.1 M382.8 255.0 L382.6 254.1 L382.8 253.3 L383.4 252.4 L384.2 251.7 M386.5 250.1 L386.7 251.2 L386.5 252.2 L385.9 253.1 L384.9 253.8 M380.6 260.3 L380.6 261.1 L380.3 261.9 L379.6 262.5 L378.7 262.9 M412.1 246.3 L411.2 247.1 L410.1 247.8 L408.9 248.3 L407.8 248.5 M408.8 256.2 L407.7 256.2 L406.8 255.9 L406.0 255.4 L405.5 254.7 M444.9 262.7 L444.8 261.7 L444.9 260.8 L445.2 260.0 L445.6 259.4 M439.4 259.9 L440.2 259.4 L441.1 259.2 L442.0 259.4 L443.0 259.8 M438.9 262.0 L439.7 263.0 L440.2 264.1 L440.4 265.3 L440.3 266.3 M440.6 275.8 L440.0 276.5 L439.2 276.7 L438.3 276.5 L437.3 275.9 M430.8 268.1 L431.7 268.8 L432.5 269.8 L433.1 270.9 L433.4 272.1 M423.1 266.7 L423.9 266.1 L424.9 265.9 L425.8 265.9 L426.7 266.3 M430.3 273.7 L430.9 272.7 L431.6 272.0 L432.3 271.5 L433.1 271.2 M452.1 253.0 L452.6 252.3 L453.3 251.8 L454.0 251.5 L454.6 251.6 M461.8 258.0 L461.7 259.5 L461.4 260.9 L460.9 262.1 L460.3 263.2 M461.6 265.7 L461.0 264.9 L460.5 263.8 L460.2 262.6 L460.0 261.3 M458.2 247.6 L459.2 247.7 L460.1 248.1 L460.8 248.8 L461.3 249.9 M467.0 254.2 L467.0 255.4 L466.8 256.5 L466.4 257.7 L465.9 258.7 M463.4 262.4 L463.3 261.4 L463.3 260.3 L463.5 259.1 L463.9 257.9 M470.4 253.9 L471.2 253.1 L472.1 252.5 L473.2 252.0 L474.2 251.8 M478.9 263.2 L478.3 264.3 L477.5 265.4 L476.3 266.3 L474.9 267.1 M472.1 256.4 L472.9 256.5 L473.5 256.9 L473.9 257.5 L474.2 258.2 M477.8 263.0 L477.9 263.9 L477.7 264.9 L477.4 265.9 L476.8 266.9 M481.3 270.4 L481.0 271.6 L480.5 272.7 L479.8 273.7 L478.9 274.4 M493.7 256.7 L492.8 257.1 L491.8 257.1 L490.9 256.7 L490.1 255.9 M496.5 249.7 L497.3 249.4 L498.1 249.5 L498.8 250.0 L499.5 250.9 M502.9 250.7 L503.7 251.2 L504.4 252.1 L504.9 253.2 L505.3 254.5 M430.7 244.0 L430.4 245.0 L429.8 246.0 L429.0 247.0 L428.1 247.9 M429.6 256.3 L428.1 257.2 L426.7 257.8 L425.4 258.0 L424.4 258.0 M521.9 248.8 L521.2 249.8 L520.3 250.8 L519.2 251.6 L518.1 252.1 M516.3 253.8 L517.2 252.9 L518.2 252.1 L519.3 251.6 L520.4 251.4 M502.2 250.4 L501.8 251.7 L501.0 253.0 L500.1 254.1 L499.1 254.9 M502.8 250.4 L503.6 250.4 L504.3 250.6 L505.0 251.0 L505.4 251.6 M507.9 257.7 L508.0 258.5 L508.0 259.5 L507.8 260.4 L507.4 261.3 M505.6 243.9 L506.4 244.1 L507.1 244.6 L507.7 245.5 L508.0 246.5 M513.8 255.3 L513.1 257.1 L512.3 258.6 L511.4 259.7 L510.4 260.5 M537.4 248.9 L538.3 249.7 L538.8 250.6 L538.8 251.4 L538.4 252.3 M530.8 258.6 L529.3 258.6 L527.8 258.4 L526.4 258.0 L525.3 257.3 M521.3 261.8 L520.7 261.0 L520.5 260.1 L520.7 259.3 L521.3 258.5 M505.7 266.3 L506.2 267.3 L506.5 268.4 L506.8 269.6 L506.9 270.8 M509.0 275.0 L508.1 274.4 L507.3 273.5 L506.7 272.3 L506.2 271.0 M509.9 272.1 L509.7 270.9 L509.6 269.7 L509.8 268.7 L510.1 267.8" fill="none" stroke="#ff4030" stroke-width="1.8" stroke-linecap="round"/>
<path d="M372.5 184.4 L369.8 183.8 L367.8 182.1 L368.0 179.0 L369.8 175.0 M439.6 167.4 L441.9 165.0 L441.0 161.6 L436.6 160.6 L433.4 158.3 M459.9 235.6 L460.3 231.3 L458.2 227.4 M400.1 119.7 L396.4 120.4 L393.1 120.8 L389.3 123.0 L387.4 125.0 M474.4 179.8 L471.8 179.8 L470.1 183.0 L466.4 185.5 L463.2 184.8 M514.6 216.8 L515.5 219.6 L514.5 223.5 L515.2 226.0 L517.5 228.8 M402.7 265.6 L400.3 263.5 L401.6 260.1 M351.6 254.8 L349.6 256.9 L346.3 258.0 L344.1 261.7 L341.7 265.0 M525.5 153.9 L527.1 157.7 L530.7 160.4 L534.5 159.0 M559.0 206.4 L556.2 205.4 L556.3 202.9 M544.0 265.5 L540.9 262.8 L541.7 259.2 L543.7 256.9 M427.4 253.4 L425.2 251.8 L422.2 249.9 L419.8 248.9 L419.6 244.7 M397.2 229.3 L393.8 231.1 L394.0 233.8 M487.5 223.4 L485.9 219.9 L483.3 218.2 L482.5 214.7 M520.1 189.0 L516.3 190.5 L514.2 194.2 L511.5 194.6 L510.9 197.9 M366.6 277.1 L365.0 273.1 L362.9 270.6 L359.7 271.5 L357.6 273.8 M517.9 199.8 L520.1 202.0 L520.7 205.2 L523.9 205.9 L525.9 202.8 M457.8 162.3 L454.1 161.5 L450.8 164.1 L449.1 167.3 L446.8 168.8 M413.7 168.6 L415.1 171.8 L419.2 173.4 L419.6 176.9 L422.5 178.9 M362.0 237.9 L362.0 240.8 L359.9 244.7 M518.4 140.5 L514.6 142.0 L510.4 143.3 L507.8 140.6 M365.4 261.4 L367.7 260.0 L371.3 262.6 L375.2 264.0 L378.1 265.0 M413.4 211.4 L410.8 214.6 L408.0 213.5 L404.6 213.7 L403.1 215.7 M493.6 259.6 L494.2 262.8 L495.0 267.1 M458.5 244.3 L457.0 246.5 L458.3 250.1 M347.4 227.2 L350.6 225.7 L351.4 222.4 M498.5 148.0 L496.7 150.7 L496.5 153.2 L496.8 156.8 L497.1 160.7 M370.7 186.3 L370.8 189.6 L367.0 191.7 L367.4 196.2 M508.3 131.9 L508.3 136.2 L505.6 137.7 L504.2 141.1 L506.7 143.1 M543.6 252.5 L546.9 251.1 L546.6 247.2 M434.8 124.6 L431.7 127.0 L430.9 131.4 M527.6 142.2 L525.0 140.2 L522.0 139.2 L518.3 141.0 L516.4 143.7 M544.4 227.4 L547.5 226.2 L547.9 223.5 L550.1 220.3 L553.2 218.9 M379.8 217.5 L379.6 220.3 L380.2 223.0 M519.3 289.5 L516.7 289.3 L513.9 286.9 M379.6 188.2 L375.8 189.5 L375.7 193.0 M523.0 193.2 L525.8 193.9 L527.3 197.0 L528.4 201.1 L527.3 203.4 M452.4 289.0 L449.8 291.3 L448.6 294.5 L446.8 296.3 M386.9 250.7 L384.1 249.5 L381.7 246.2 M443.2 265.7 L444.7 268.7 L442.9 271.9 M528.3 267.3 L531.6 269.7 L533.8 268.1 L533.0 265.3 L532.6 262.0 M470.0 294.8 L470.7 298.5 L473.1 300.3 M374.0 246.4 L377.6 244.2 L378.8 240.9 L379.7 237.7 M376.7 170.2 L378.2 166.2 L381.7 166.5 L383.1 169.5 L381.5 172.6 M403.0 166.8 L406.9 168.8 L409.4 168.4 L412.9 169.5 L415.8 169.2 M510.6 267.0 L513.4 267.9 L513.6 271.5 L513.2 274.4 M374.1 164.3 L377.8 165.6 L379.6 168.9 M348.3 210.3 L351.0 209.9 L353.8 209.1 L354.2 205.8 M386.4 260.0 L386.3 262.9 L384.6 266.0 M422.9 168.9 L422.4 171.6 L418.2 172.0 L414.6 171.0 L412.0 171.7 M431.3 239.6 L429.1 238.3 L428.6 234.8 M509.3 242.3 L512.9 242.9 L514.3 246.6 L511.7 250.2 L511.5 254.5 M366.0 223.8 L364.7 227.2 L364.8 229.7 M379.0 219.3 L374.6 218.6 L372.8 220.5 L368.7 220.5 L365.0 222.4 M501.8 171.0 L499.2 170.5 L497.6 173.2 L495.8 177.1 L493.4 180.4 M412.3 255.9 L410.5 259.1 L409.4 262.0 L405.1 261.5 L403.5 264.6 M367.1 247.5 L366.5 251.5 L365.9 254.3 M403.6 166.3 L401.0 168.4 L397.8 167.3 M350.1 198.9 L347.2 199.5 L345.7 197.3 L343.6 193.8 M403.1 221.1 L406.1 219.8 L409.1 220.8 L409.6 224.9 L413.0 227.0 M360.2 220.1 L356.4 220.2 L355.7 217.7 L353.5 216.2 L350.0 214.1 M518.5 166.8 L520.2 170.2 L523.0 171.3 L522.7 175.3 L522.4 178.7 M528.5 243.4 L530.2 246.3 L528.8 248.9 M526.5 142.0 L524.2 143.7 L521.2 144.7 L518.8 143.7 L514.7 142.6 M385.8 281.4 L384.6 284.4 L380.5 284.9 M476.1 129.8 L480.4 129.3 L481.2 126.5 L483.8 124.4 L483.6 121.8 M439.2 259.6 L436.3 257.8 L433.3 254.6 M460.4 171.6 L463.4 170.7 L465.0 168.0 L462.4 164.8 L463.9 161.8 M453.0 256.0 L451.1 260.1 L447.1 261.0 L443.9 260.1 L441.8 261.8 M416.3 234.8 L419.2 234.5 L421.5 233.1 L422.7 228.8 M464.3 184.8 L463.2 182.4 L459.6 182.3 M452.4 283.4 L449.0 281.9 L446.5 283.6 M508.8 173.4 L505.6 174.6 L503.2 175.4 L499.5 176.1 L497.6 179.6 M421.7 116.5 L424.2 113.2 L422.8 110.6 L423.7 107.2 M453.4 257.2 L456.3 257.8 L459.5 258.8 L462.3 260.2 L465.2 259.1 M558.6 205.9 L561.9 203.2 L564.9 204.4 M380.7 130.2 L382.4 133.4 L385.3 132.9 L387.2 136.5 L388.5 139.4 M383.7 282.6 L380.8 283.8 L378.5 285.2 M384.0 174.1 L387.1 175.3 L389.4 173.7 L390.6 169.5 L390.0 165.4 M522.7 167.8 L525.7 164.6 L524.0 160.7 L524.2 158.2 L526.7 156.3 M490.4 241.7 L489.9 244.5 L493.3 246.6 L492.2 250.7 M536.7 175.0 L532.5 175.6 L531.2 173.1 L526.9 171.9 M375.5 186.8 L378.9 184.4 L382.0 181.7 L383.7 178.1 M511.7 252.3 L514.4 251.5 L516.4 249.5 M396.9 131.2 L392.8 131.9 L390.0 129.9 M361.8 265.0 L361.1 261.6 L357.8 261.2 M414.9 187.9 L416.4 184.9 L418.7 181.7 M461.3 144.6 L461.8 140.9 L464.8 139.7 L467.4 140.0 L471.5 140.0 M461.7 236.8 L459.4 238.5 L456.9 241.9 L458.7 244.5 L460.4 246.9 M389.2 280.2 L388.2 276.3 L386.8 273.9 L385.6 271.5 M521.0 272.7 L523.2 271.2 L524.8 267.9 L524.1 264.1 M393.1 220.1 L392.0 217.3 L389.3 215.3 L385.9 213.7 M368.9 230.1 L368.8 226.4 L364.8 224.8 L362.2 222.2 L359.7 221.1 M443.2 184.5 L445.3 183.0 L446.5 180.1 L448.8 177.4 M390.7 267.6 L392.2 264.2 L394.3 261.6 M390.1 283.0 L392.6 282.1 L396.1 284.2 L396.4 287.5 M425.1 216.0 L424.9 219.4 L422.6 220.9 M411.9 232.4 L414.5 230.6 L416.6 232.0 M536.8 194.1 L540.1 195.6 L542.9 198.2 M421.2 227.7 L421.6 230.3 L420.9 234.2 L418.9 236.4 L417.2 239.5 M514.5 144.1 L514.5 141.1 L516.7 139.2 L520.2 140.9 L523.4 140.1 M473.6 133.4 L476.6 135.7 L478.6 137.8 M475.4 244.5 L472.0 242.9 L469.7 244.0 L468.1 246.9 L466.7 249.5 M352.8 212.3 L352.4 209.3 L349.8 207.8 L348.9 205.2 M400.2 275.1 L401.0 279.2 L398.5 281.6 L397.5 284.3 L398.2 288.1 M346.7 231.8 L348.9 230.5 L352.0 231.5 M422.5 202.5 L424.2 205.4 L423.5 209.1 L424.7 211.7 M491.0 218.0 L490.0 221.2 L486.3 221.4 L482.2 222.5 M354.9 217.8 L357.1 220.9 L358.0 224.9 L361.0 225.3 L364.6 227.5 M526.1 158.7 L529.9 159.7 L532.8 159.9 L535.4 162.2 L537.6 164.5 M463.9 230.9 L462.1 227.2 L460.5 224.3 L457.6 222.5 L455.2 224.4 M441.0 270.2 L441.9 274.0 L442.5 278.0 L445.3 280.1 M467.1 158.8 L469.5 158.1 L472.3 155.3 M459.0 254.7 L458.8 251.2 L461.2 247.8 L461.1 243.4 L458.1 241.8 M410.5 251.2 L409.0 253.9 L406.6 255.3 M367.9 154.0 L365.9 156.1 L363.4 158.9 L360.5 162.2 M448.1 121.2 L448.8 124.6 L451.0 128.4 L449.4 132.4 L448.4 135.2 M416.4 256.1 L415.3 253.5 L416.3 250.8 L413.8 248.2 M465.6 247.7 L462.6 248.1 L460.9 250.2 M406.1 290.8 L406.8 287.1 L403.8 284.6 L401.9 282.3 M381.7 168.2 L379.0 166.8 L376.3 167.3 L373.2 167.2 M381.9 256.4 L381.0 253.0 L382.2 249.6 M386.0 189.3 L382.3 189.5 L381.4 193.0 L384.8 195.6 L388.6 196.0 M401.4 245.8 L398.3 247.2 L394.8 246.8 L391.2 248.1 M509.7 256.6 L509.8 259.3 L513.3 260.8 M427.2 249.4 L424.3 249.4 L420.0 249.7 L418.9 252.1 M408.3 202.7 L410.9 200.3 L413.7 200.8 L416.2 202.6 M416.5 247.6 L418.5 244.6 L421.1 242.8 L423.8 242.3 M481.8 222.2 L484.7 224.1 L487.5 225.4 L490.7 228.5 L492.5 231.1 M501.9 215.1 L501.8 211.7 L498.7 209.2 L495.9 210.4 M388.4 264.2 L389.8 261.9 L392.8 260.5 M477.0 162.4 L479.1 164.6 L477.1 168.1 L477.6 172.0 M412.0 220.4 L411.1 224.4 L408.4 226.9 M533.7 267.1 L533.1 270.4 L534.9 272.6 L536.1 275.8 M386.8 287.1 L388.0 284.3 L388.6 281.1 L386.7 278.1 L385.6 274.7 M422.9 124.6 L420.7 121.9 L417.4 123.2 L414.8 121.2 M393.5 278.6 L394.9 276.0 L393.0 272.7 M363.6 241.7 L366.0 242.3 L368.4 240.4 L368.1 237.7 M492.5 144.0 L490.0 143.5 L487.0 141.2 M442.1 294.1 L442.8 296.7 L441.8 300.7 L438.8 303.3 L439.8 307.4 M499.3 257.8 L497.6 255.9 L497.1 251.7 L493.6 251.1 L492.3 247.5 M388.0 283.7 L385.6 286.4 L384.5 289.5 M411.6 288.4 L412.3 285.4 L412.2 282.0 L415.2 280.1 M547.5 219.6 L544.2 220.6 L541.2 219.2 M541.3 163.3 L543.7 160.1 L543.2 156.0 L541.8 153.6 M438.4 139.4 L438.0 142.1 L436.0 144.6 L433.5 144.3 M501.6 176.7 L498.0 174.3 L494.4 176.4 L490.5 175.6 M504.4 225.4 L507.2 225.6 L509.8 224.9 L513.1 222.5 L516.4 224.8 M535.0 224.3 L536.1 221.1 L533.8 218.3 L531.2 219.4 L528.0 219.7 M500.3 282.9 L497.2 283.7 L495.1 286.2 L490.8 285.2 M406.4 291.9 L409.1 289.3 L412.5 291.2 L413.7 295.0 L412.6 298.4 M449.3 173.6 L446.0 172.5 L442.1 171.1 L440.1 172.6 L439.0 176.6 M487.7 145.4 L486.3 142.9 L484.0 139.7 M383.7 216.4 L384.0 213.9 L388.2 212.8 L390.6 209.4 M521.2 197.9 L516.8 198.3 L514.3 197.2 L513.0 193.1 M439.2 133.0 L442.1 130.0 L442.4 127.2 L446.5 125.9 L449.0 126.3 M356.1 223.6 L358.8 222.6 L362.7 224.5 L365.0 227.0 L368.9 226.8 M521.9 216.1 L523.4 212.6 L527.2 211.4 M353.2 160.6 L355.9 162.7 L359.8 160.6 M382.2 140.8 L386.4 141.2 L388.2 139.4 M514.0 273.3 L509.5 273.3 L508.0 276.0 M444.8 124.1 L442.2 123.1 L438.9 121.4 L436.3 123.8 M361.8 168.5 L360.9 164.3 L357.7 162.2 M373.5 281.4 L370.0 280.9 L367.8 282.7 L366.2 284.6 M410.4 210.4 L406.8 213.0 L407.8 216.0 L409.8 217.8 L411.6 221.8 M477.9 121.5 L478.1 118.3 L476.2 114.7 L475.9 111.9 L473.7 109.0 M536.8 230.7 L533.7 229.6 L531.4 232.9 L528.5 234.9 M416.3 275.1 L418.4 278.4 L422.2 279.3 L425.5 279.9 L429.7 281.5 M476.4 143.6 L476.5 147.1 L473.1 149.9 M367.7 245.8 L363.6 246.7 L360.4 248.3 L356.2 249.2 M525.5 223.5 L522.4 221.9 L520.1 220.6 L517.8 217.8 M495.4 282.8 L495.4 285.5 L494.9 288.6 L497.6 289.7 L501.9 290.6 M381.2 278.4 L379.5 276.3 L376.9 273.5 L372.7 273.1 M423.8 280.8 L423.7 285.1 L425.6 286.9 L428.3 285.5 L430.7 282.9 M469.2 289.3 L472.7 290.1 L474.4 287.9 M407.8 115.2 L405.4 118.9 L402.2 118.0 L400.0 116.9 L397.2 115.0 M523.5 259.8 L520.3 259.6 L516.2 258.3 L512.2 258.8 L509.4 256.7 M503.0 261.0 L498.9 261.5 L497.8 265.0 L498.1 268.6 M539.7 160.4 L535.6 159.5 L533.1 160.7 L530.5 162.3 L527.7 163.1 M536.1 220.0 L533.8 216.8 L533.9 212.8 L537.9 211.7 L538.4 209.0 M490.3 170.9 L490.8 174.2 L487.4 176.0 L484.6 176.7 L481.8 175.0 M424.2 189.2 L427.1 188.3 L430.1 189.3 L434.3 187.6 L437.5 190.4 M540.2 287.1 L536.6 287.9 L534.1 287.0 L534.3 283.3 M467.7 250.8 L465.1 249.1 L462.1 249.9 L459.4 251.6 M464.2 231.2 L462.0 234.6 L461.8 238.3 L461.3 241.8 M454.3 242.4 L451.0 239.6 L447.8 241.5 M398.4 256.5 L395.4 256.5 L392.3 256.3 L391.7 253.3 M415.2 291.2 L415.0 287.4 L412.3 285.9 M471.1 288.6 L471.4 292.0 L474.5 294.9 L473.8 297.8 L476.2 300.7 M486.6 158.2 L489.6 156.7 L492.0 154.3 M466.5 286.3 L468.3 284.3 L470.3 281.3 M541.7 152.6 L542.4 155.2 L542.3 159.3 L546.1 161.0 L550.3 161.1 M525.6 201.8 L522.8 199.1 L519.5 201.0 L520.0 204.3 M490.4 145.3 L490.1 149.1 L493.2 151.1 L495.7 152.4 M516.2 131.4 L515.3 134.7 L512.2 135.4 M410.2 209.4 L408.5 211.3 L407.3 214.1 L404.8 217.5 M392.6 136.0 L388.4 134.9 L385.8 135.6 L385.4 138.5 L383.0 139.5 M518.7 289.5 L517.3 291.6 L519.0 294.4 M415.5 181.3 L414.1 184.9 L414.6 188.6 M434.5 164.6 L431.4 162.3 L431.4 158.1 L432.7 154.8 L434.8 152.6 M504.3 136.4 L506.3 134.6 L510.2 134.8 L511.3 137.8 L510.5 141.6 M413.9 213.5 L410.8 214.1 L409.0 217.8 L406.5 219.3 L403.5 219.4 M549.8 189.4 L553.8 190.2 L556.0 193.5 L558.7 194.1 L560.0 192.0 M493.4 233.3 L492.4 237.5 L491.4 240.6 L493.3 242.7 L496.7 243.0 M478.8 120.6 L477.0 116.8 L478.4 113.6 L479.5 111.2 M514.7 242.2 L517.5 245.6 L520.2 245.3 M554.2 178.9 L553.3 181.3 L552.0 185.1 L552.4 189.0 L555.4 190.8 M345.0 218.6 L344.4 221.3 L342.5 222.9 L341.6 226.2 L338.7 228.9 M387.4 157.5 L387.2 160.3 L389.1 163.2 L392.7 164.7 L394.7 168.2 M364.1 193.0 L363.4 190.6 L362.1 188.2 L364.4 184.8 M363.4 254.2 L360.7 254.2 L358.2 251.8 L355.6 251.1 L352.1 251.0 M414.2 241.6 L409.9 242.0 L406.5 243.5 M512.1 255.2 L510.7 258.6 L512.1 260.7 M405.3 155.5 L404.7 159.2 L401.9 160.3 M538.7 186.9 L536.6 185.2 L535.6 182.3 L535.9 177.9 L538.4 176.6 M413.8 158.7 L411.9 155.8 L413.8 153.1 L417.3 153.2 M477.0 145.7 L473.4 147.9 L473.0 150.8 L475.4 154.0 L477.2 156.5 M464.4 153.4 L463.7 156.3 L461.2 157.8 M369.6 155.4 L372.6 156.1 L373.8 159.7 L377.8 161.1 M429.0 287.2 L430.1 290.4 L433.9 290.6 L436.0 293.1 M380.2 277.7 L376.4 279.0 L373.7 280.3 M477.8 281.8 L480.7 278.5 L484.1 278.8 L486.1 276.6 L486.5 273.2 M460.2 158.4 L460.8 162.7 L461.3 165.5 M385.5 177.7 L388.4 176.4 L391.8 174.8 L391.1 170.4 L390.1 166.8 M531.2 239.5 L534.9 237.9 L538.5 237.1 L540.8 235.0 L542.5 232.0 M533.2 142.4 L535.7 140.9 L538.9 144.0 L541.0 145.5 M504.2 142.2 L506.2 140.6 L509.1 141.5 L510.9 144.4 L508.9 147.2 M550.4 164.8 L552.6 167.7 L555.4 170.7 L554.4 174.6 M393.8 133.0 L397.2 134.6 L396.7 137.6 L395.8 141.1 M384.1 139.3 L388.2 139.1 L391.3 142.2 L390.7 145.8 L392.5 147.7 M495.0 176.9 L497.6 174.5 L500.7 171.6 L501.4 168.0 M496.3 266.7 L497.0 263.8 L496.0 261.3 L497.2 258.6 M423.5 170.5 L421.8 173.9 L418.8 173.9 L417.3 177.5 L413.2 178.4 M422.8 134.7 L422.8 130.9 L421.3 128.4 L420.6 124.8 L416.9 124.0 M355.8 205.7 L354.0 203.7 L351.4 201.8 L347.6 201.1 L343.7 199.5 M520.8 265.8 L523.5 264.6 L525.3 261.3 L527.4 259.3 L530.5 261.3 M487.8 158.6 L485.5 155.8 L487.0 153.5 L488.1 150.4 L486.0 148.5 M447.7 124.4 L451.2 123.5 L454.3 121.5 M419.8 222.9 L421.9 220.7 L421.4 216.3 L421.2 213.4 L424.5 210.7 M397.8 224.3 L393.7 222.9 L391.2 223.6 M377.1 217.3 L379.2 215.0 L380.6 212.1 L383.3 209.5 L386.7 209.0 M433.7 175.3 L434.1 172.1 L435.4 169.7 M364.2 171.8 L366.6 174.9 L368.6 178.0 L371.0 181.6 L374.7 183.4 M499.0 197.9 L502.0 200.5 L504.0 204.5 L506.2 206.4 L507.0 210.7 M483.6 130.8 L481.8 127.4 L481.2 124.2 M519.7 147.7 L523.9 148.1 L527.8 150.1 L529.3 154.2 M403.8 157.9 L406.2 156.9 L409.1 156.4 M506.9 251.8 L507.5 255.3 L503.9 257.2 M362.4 216.4 L365.1 219.1 L367.5 221.3 M400.2 255.6 L396.5 255.1 L394.4 257.8 M465.6 130.3 L469.1 129.2 L469.7 125.0 M503.8 166.7 L504.5 163.4 L502.4 159.7 M462.3 170.3 L464.4 174.3 L467.0 176.7 L466.3 179.7 L468.4 182.9 M377.4 200.7 L374.0 198.4 L370.4 198.4 M524.8 237.6 L521.7 236.2 L517.4 237.1 M487.8 188.7 L486.7 185.7 L486.8 183.2 M455.8 181.1 L456.3 184.0 L459.5 186.6 M418.5 181.3 L415.3 178.3 L412.3 179.3 L410.9 183.5 M493.8 187.0 L497.6 188.2 L499.0 191.1 L502.2 193.8 L503.1 197.1 M440.7 230.4 L444.6 232.0 L447.6 235.0 M490.7 148.9 L492.1 146.3 L493.6 143.9 L496.1 142.2 L499.7 144.2 M472.5 281.9 L468.8 279.4 L465.0 279.9 L462.7 281.9 L462.4 284.8 M547.0 160.2 L544.5 156.8 L542.3 154.9 L540.0 151.4 L539.4 148.8 M490.6 178.4 L494.5 177.0 L497.2 174.4 M522.8 226.6 L524.6 228.9 L522.3 232.1 M523.5 206.7 L526.9 206.4 L528.4 204.3 L531.2 202.2 M355.7 186.8 L356.6 183.0 L360.4 180.7 L363.8 181.9 M405.2 182.5 L408.7 183.6 L412.2 183.0 L414.8 184.0 L416.8 185.7 M406.5 211.5 L409.2 210.3 L411.9 208.9 M436.7 157.8 L433.4 160.5 L429.7 160.9 L426.6 158.6 L423.3 157.3 M455.2 149.5 L451.4 151.6 L451.9 155.4 M522.9 291.3 L525.5 289.4 L526.5 286.3 M389.7 199.1 L386.4 197.8 L383.1 198.5 L380.1 197.8 M441.5 255.6 L443.5 252.1 L446.3 251.1 L449.1 251.7 L452.4 249.0 M431.7 162.9 L430.6 166.2 L432.3 170.4 L435.5 172.5 M525.3 234.9 L528.7 233.9 L529.6 230.1 M482.5 220.1 L479.3 220.5 L476.6 219.9 L473.8 217.1 L469.8 215.4 M531.2 254.3 L529.7 256.4 L525.4 255.2 L523.2 253.2 L520.4 252.8 M488.6 203.1 L487.1 207.2 L486.4 210.4 M414.9 129.4 L412.6 127.3 L410.0 127.4 L407.5 126.9 L404.7 124.3 M509.5 168.2 L508.0 165.8 L510.6 162.9 L514.1 162.6 L515.7 159.7 M419.1 127.4 L421.7 125.3 L423.5 122.8 M390.4 260.9 L392.5 264.0 L395.6 263.9 M440.2 183.1 L440.6 179.8 L437.7 177.9 L435.1 176.7 M510.1 150.7 L513.1 152.9 L514.0 156.4 L516.8 159.5 M392.8 135.5 L388.8 135.8 L386.1 133.0 L386.7 130.0 M500.2 133.5 L503.8 132.7 L506.2 129.9 M508.0 151.5 L507.9 154.2 L507.5 157.3 L509.4 161.1 L513.3 162.3 M487.3 135.7 L488.0 133.2 L490.4 130.3 M500.0 190.4 L502.3 192.3 L501.3 196.4 L498.9 197.9 M465.6 128.4 L461.8 126.0 L459.0 124.4 L458.2 122.0 L458.1 119.1 M390.9 132.3 L387.3 129.9 L383.5 130.8 M368.1 194.2 L370.8 193.5 L374.0 191.6 L376.1 189.4 M422.0 175.3 L424.7 176.9 L427.5 179.3 L429.1 183.1 L431.7 185.2 M536.1 177.4 L538.5 175.2 L538.9 172.4 L540.8 169.3 M372.9 223.0 L372.8 226.9 L368.9 228.3 M409.3 185.1 L408.6 189.1 L411.7 191.4 M415.4 115.2 L418.2 116.3 L420.5 117.4 L422.7 115.4 L425.9 116.7 M472.2 255.6 L475.6 255.9 L478.3 258.6 L481.2 257.5 L484.5 259.6 M352.7 210.2 L348.5 209.5 L347.0 205.4 L343.3 203.5 L340.9 200.5 M410.0 199.1 L412.7 201.1 L415.1 199.2 M412.1 128.6 L415.6 130.4 L418.5 130.3 M371.6 251.4 L373.5 254.4 L374.4 257.2 M513.2 283.0 L511.9 285.6 L511.2 288.6 M437.8 117.7 L437.7 113.5 L436.9 110.1 L434.6 108.3 L432.7 104.7 M548.4 182.5 L552.2 183.0 L554.6 186.3 L557.6 187.6 L559.5 191.6 M508.1 243.1 L510.8 245.1 L514.1 244.9 M478.6 281.4 L482.1 281.2 L484.5 283.7 L487.7 282.9 L488.2 278.6 M375.8 154.0 L378.8 151.7 L378.9 148.9 M534.2 212.9 L538.1 214.1 L540.5 216.6 L544.5 215.4 L544.5 211.9 M377.4 227.3 L374.6 225.8 L373.3 222.6 L370.9 222.9 M404.8 274.4 L406.8 271.4 L410.0 271.0 L412.4 272.0 M428.3 163.6 L423.9 163.1 L420.9 163.4 L418.9 165.6 M390.9 280.3 L393.1 278.8 L392.9 275.3 L390.6 274.2 M498.9 148.8 L500.6 145.9 L503.6 145.5 L505.4 148.7 M445.7 276.3 L442.0 274.3 L439.7 271.5 L437.1 271.9 L434.8 274.7 M424.8 273.3 L428.6 274.1 L432.7 274.7 L435.1 271.4 L438.5 270.3 M517.9 242.9 L514.7 245.1 L512.1 243.0 L510.1 239.2 M493.9 288.7 L491.6 286.9 L488.6 285.0 L484.6 286.3 M408.7 151.5 L408.8 154.1 L411.3 155.0 L415.6 155.0 L418.7 154.8 M490.7 262.7 L487.2 262.4 L483.6 262.2 L480.7 263.9 L476.9 263.1 M524.5 180.5 L523.6 182.9 L520.5 185.1 M551.9 240.6 L554.3 236.9 L552.1 233.3 L550.0 231.1 M456.3 293.3 L455.2 290.1 L455.5 286.3 L455.0 282.0 L452.0 281.1 M365.0 210.1 L361.9 210.7 L359.4 212.1 L356.1 211.3 L353.5 212.9 M378.7 208.3 L380.5 206.1 L384.6 205.7 M350.3 246.7 L348.7 244.3 L346.5 241.0 L342.9 241.8 L340.5 239.2 M547.9 205.4 L547.8 209.8 L548.7 212.7 L546.1 215.4 L546.4 218.5 M478.2 127.4 L476.4 129.9 L474.5 132.7 M479.6 121.7 L481.5 123.4 L482.3 127.7 L484.2 130.1 L486.4 132.9 M422.4 245.3 L422.4 241.8 L423.4 239.3 M460.1 117.9 L459.1 120.3 L459.3 122.9 M407.9 185.0 L406.2 181.2 L403.6 180.1 L402.3 176.2 L400.4 172.7 M393.3 195.5 L392.4 199.6 L391.4 202.0 M422.2 201.6 L421.1 198.1 L416.8 198.2 L413.9 195.9 M396.3 183.9 L396.2 188.0 L393.8 189.7 M491.6 294.1 L488.5 293.5 L486.2 290.4 M423.9 142.3 L421.3 140.5 L417.8 140.2 L416.4 136.4 L416.9 133.0 M540.6 271.8 L541.7 274.9 L544.2 277.8 M504.7 122.3 L501.7 122.0 L499.1 119.9 L495.2 119.7 M408.6 180.5 L408.7 177.5 L411.0 176.6 M495.4 165.3 L498.4 164.4 L501.3 161.1 M484.0 283.6 L486.7 282.5 L488.4 279.9 L491.5 278.6 M523.7 266.2 L519.8 268.2 L518.1 272.0 L514.3 272.5 L512.0 269.6 M429.9 259.1 L432.1 257.8 L435.4 255.4 M474.6 165.2 L470.3 165.8 L468.0 164.4 L464.7 165.7 L461.7 163.4 M402.4 132.1 L403.8 136.3 L404.2 140.1 L405.1 142.6 L405.1 145.7 M419.2 144.9 L420.1 140.9 L418.1 137.9 L417.0 135.2 L417.4 132.3 M381.6 223.5 L384.2 223.0 L386.1 220.7 M373.5 283.3 L370.9 284.4 L368.1 283.4 L368.0 279.6 M482.3 158.4 L480.7 154.9 L477.9 154.6 M412.3 280.5 L413.1 277.7 L414.8 274.7 L414.1 271.9 L411.8 270.7 M507.6 137.8 L503.6 136.7 L501.2 137.6 L501.6 140.7 M354.0 195.5 L350.6 193.8 L350.3 190.0 M524.7 246.2 L521.0 247.2 L517.9 247.7 M376.7 245.0 L376.2 249.2 L378.5 250.4 M521.4 163.3 L520.8 166.2 L521.9 169.2 M413.9 170.0 L417.7 171.5 L419.6 169.3 L422.1 170.1 M436.9 251.9 L432.7 250.8 L429.7 252.1 L427.6 249.4 L426.0 245.6 M564.1 177.9 L563.1 180.5 L559.7 181.1 M384.8 212.2 L386.8 215.2 L388.1 219.0 M464.2 263.9 L467.3 264.9 L469.5 266.4 L470.2 270.5 L468.9 273.4 M371.8 139.9 L373.5 141.9 L374.3 144.6 L374.3 148.6 L374.0 151.2 M514.5 174.8 L513.7 170.7 L512.6 166.5 M542.6 201.2 L539.9 202.0 L537.9 205.5 M429.4 236.2 L431.3 233.8 L435.4 234.4 M559.8 167.9 L560.7 164.0 L558.9 161.8 L560.9 158.8 L563.5 158.8 M371.8 202.2 L369.1 200.1 L367.6 197.3 L367.5 194.4 M501.8 237.5 L504.1 241.2 L506.2 243.2 L506.3 247.1 L504.2 250.9 M465.7 120.7 L464.5 116.5 L461.4 115.6 M413.5 259.2 L414.4 256.2 L414.7 252.8 L416.6 250.7 L420.6 252.6 M510.6 143.3 L511.5 146.0 L509.7 149.3 L506.2 148.7 L505.3 144.4 M350.3 213.5 L347.6 211.3 L345.3 209.7 L343.2 207.1 M431.0 117.0 L431.6 120.1 L432.5 123.3 L432.9 126.2 M481.7 124.0 L477.9 125.0 L475.6 128.5 L471.6 128.9 M515.9 290.9 L513.0 289.9 L509.6 287.5 L505.7 287.4 M455.3 272.2 L455.3 267.7 L456.7 264.7 L458.9 262.1 M474.6 132.3 L477.6 129.6 L478.5 125.8 M406.2 129.2 L404.0 125.4 L401.0 125.5 L398.1 125.1 M524.7 278.1 L520.5 279.1 L518.2 276.1 M465.6 171.5 L462.3 171.6 L459.1 172.9 M509.9 181.3 L509.9 185.4 L511.5 188.2 L510.8 190.6 L510.3 193.4 M514.9 257.7 L513.0 261.0 L510.4 261.5 M474.8 282.4 L475.6 285.2 L477.5 287.3 L475.8 290.9 L474.5 293.8 M474.6 176.5 L471.2 175.3 L468.8 171.6 L468.8 168.1 L466.6 165.2 M419.7 281.5 L417.5 277.6 L417.0 273.7 L415.0 270.7 L411.0 271.7 M421.3 240.6 L419.0 238.8 L418.0 235.0 L419.6 231.2 L419.7 228.5 M456.0 252.1 L453.7 254.0 L450.8 257.1 L452.4 260.9 M428.0 119.1 L425.1 122.3 L424.6 125.5 L425.1 128.9 M494.4 156.3 L492.6 153.7 L494.1 151.7 L495.9 149.0 M382.1 184.7 L380.8 181.3 L379.0 177.8 L379.8 175.4 M342.6 209.0 L344.9 205.4 L346.5 201.8 L347.9 198.1 L347.2 194.6 M488.5 193.4 L485.0 194.7 L481.5 196.3 M490.6 153.6 L488.1 156.4 L487.9 160.9 M476.4 130.4 L477.2 133.6 L477.7 137.4 M462.6 156.0 L463.5 153.5 L462.3 151.0 L458.1 151.5 L454.8 154.5 M494.4 192.1 L490.8 191.5 L488.3 193.4 L486.5 196.5 L488.2 199.9 M483.9 154.0 L485.2 150.9 L487.9 149.6 L489.3 147.4 M350.6 183.4 L354.0 184.5 L357.5 183.5 L357.6 180.2" fill="none" stroke="#747474" stroke-width="0.7"/>
<path d="M487.1 214.7 l0.4 1.8 M467.5 290.0 l0.6 -1.7 M528.5 168.2 l1.8 0.2 M560.3 183.5 l-1.8 -0.4 M390.8 218.5 l-0.0 1.8 M438.6 154.0 l0.4 1.8 M424.3 221.2 l-1.6 0.7 M562.3 185.5 l-1.0 -1.5 M558.6 212.2 l0.2 1.8 M493.0 171.5 l1.4 1.1 M531.1 214.0 l-0.3 -1.8 M404.6 283.9 l1.4 -1.1 M507.5 232.3 l-0.7 -1.6 M394.4 237.6 l1.6 -0.8 M399.7 197.3 l0.9 -1.6 M375.2 171.0 l-1.3 1.2 M452.7 136.2 l1.4 1.1 M429.9 148.3 l1.8 0.1 M503.5 162.3 l0.7 -1.7 M477.1 178.2 l1.5 0.9 M451.6 132.2 l-0.6 1.7 M411.1 126.9 l-1.6 0.9 M498.5 188.6 l0.2 1.8 M382.0 208.2 l-1.8 0.4 M546.6 230.3 l1.8 -0.3 M381.2 194.1 l-1.8 0.1 M527.7 290.8 l0.4 -1.8 M422.5 237.3 l-0.3 1.8 M375.6 205.3 l-1.8 0.3 M448.1 237.3 l-0.6 -1.7 M489.7 124.8 l1.3 -1.2 M454.3 123.0 l1.7 0.6 M459.9 125.9 l-0.8 1.6 M454.8 263.0 l-1.8 -0.3 M492.7 157.7 l-0.8 1.6 M539.8 159.3 l-1.1 -1.5 M511.7 243.0 l-1.5 1.0 M400.3 176.0 l-1.6 -0.8 M372.1 260.8 l1.1 -1.4 M443.6 138.6 l1.7 0.5 M451.8 275.0 l-0.9 1.5 M543.1 209.6 l1.8 -0.1 M366.2 175.0 l-1.8 0.2 M537.7 223.5 l-1.6 0.8 M474.2 119.4 l1.8 0.0 M525.2 214.7 l-0.3 1.8 M366.7 278.3 l-1.7 -0.7 M524.5 191.1 l-1.5 1.0 M472.8 149.4 l1.0 -1.5 M515.2 166.5 l0.0 1.8 M417.3 206.0 l1.3 1.2 M519.9 279.5 l-1.4 1.2 M411.8 285.5 l1.7 0.4 M487.5 221.8 l-0.0 -1.8 M487.5 291.9 l1.3 -1.3 M414.2 144.1 l1.5 1.0 M430.7 175.3 l-1.8 0.2 M350.6 203.2 l0.2 1.8 M510.8 238.3 l-1.8 0.2 M513.6 136.7 l1.4 -1.2 M413.0 276.0 l-1.3 -1.2 M401.3 292.3 l-0.4 1.7 M519.8 270.3 l-1.8 0.2 M546.8 156.8 l1.8 -0.2 M553.9 202.2 l-0.0 -1.8 M525.0 230.9 l-0.5 1.7 M417.6 121.9 l1.8 -0.4 M357.4 238.8 l-1.1 -1.4 M529.7 280.6 l-1.8 0.4 M470.1 294.4 l0.9 1.6 M523.3 231.9 l-1.0 -1.5 M420.4 207.9 l0.4 1.8 M384.4 258.5 l-0.5 1.7 M394.4 281.3 l0.6 -1.7 M552.7 192.6 l-0.7 -1.7 M537.4 146.1 l0.3 1.8 M510.9 259.1 l-1.5 -0.9 M491.5 238.4 l1.1 -1.4 M409.4 174.6 l-1.8 0.4 M438.7 232.8 l-1.8 0.3 M516.4 176.7 l-1.2 1.4 M540.3 177.1 l1.8 0.2 M459.6 283.0 l-1.2 -1.3 M441.0 164.1 l-1.7 0.6 M461.3 118.0 l1.7 -0.4 M426.4 231.6 l0.6 -1.7 M523.5 164.6 l1.4 1.2 M479.0 298.3 l-0.6 -1.7 M478.2 253.6 l0.2 -1.8 M471.4 250.3 l-1.8 0.4 M496.1 179.6 l0.8 1.6 M413.8 117.8 l0.4 -1.8 M503.6 262.1 l-0.7 -1.7 M410.3 254.9 l0.4 -1.8 M450.1 168.9 l0.8 -1.6 M394.3 195.6 l1.4 -1.1 M503.3 261.4 l-1.2 -1.3 M357.4 263.5 l-0.4 -1.8 M416.1 220.0 l1.8 -0.3 M414.0 193.5 l0.4 -1.8 M395.8 134.7 l-0.5 1.7 M387.7 280.3 l-0.4 -1.8 M352.1 236.9 l-0.1 1.8 M509.8 192.5 l-0.4 1.8 M479.5 145.4 l1.1 -1.4 M419.2 272.3 l-0.5 -1.7 M552.2 186.1 l-1.8 0.2 M464.8 120.9 l0.3 1.8 M400.5 118.8 l1.1 -1.4 M429.3 169.9 l1.0 1.5 M380.2 211.6 l1.4 1.1 M503.1 144.4 l-1.3 -1.2 M502.4 282.5 l0.6 1.7 M517.6 162.6 l-1.2 1.3 M458.2 129.6 l-0.5 1.7 M553.0 183.3 l1.3 -1.2 M375.2 155.1 l-1.8 -0.2 M508.4 172.8 l1.8 0.3 M538.4 260.7 l-0.5 -1.7 M382.3 130.0 l-1.5 -1.1 M348.2 180.5 l0.8 -1.6 M550.3 193.3 l-0.7 -1.6 M473.8 152.3 l1.3 1.2 M415.2 268.3 l1.3 1.2 M525.7 199.6 l-1.8 0.1 M387.3 153.0 l-0.4 -1.8 M509.4 123.6 l1.7 0.4 M479.6 236.8 l0.1 -1.8 M462.0 277.4 l1.6 0.9 M359.1 244.0 l1.8 -0.1 M376.4 269.3 l1.8 0.2 M414.6 124.9 l-1.7 0.4 M378.4 223.7 l1.7 -0.4 M387.6 136.2 l-1.1 -1.4 M505.8 223.8 l-1.4 -1.1 M425.7 266.4 l0.6 -1.7 M406.6 215.3 l1.8 0.0 M506.4 130.4 l1.8 0.0 M531.1 269.8 l-1.6 -0.8 M473.6 247.0 l0.3 1.8 M469.0 287.0 l-1.8 -0.2 M364.2 176.0 l-0.3 -1.8 M501.7 229.0 l1.8 0.1 M470.9 269.0 l0.0 1.8 M410.1 212.5 l0.3 1.8 M532.9 188.1 l-1.2 1.4 M495.6 237.0 l0.9 -1.6 M357.2 270.2 l-0.6 1.7 M527.3 215.5 l0.2 1.8 M438.2 179.5 l-1.0 1.5 M515.5 267.0 l1.8 -0.1 M503.7 291.5 l0.3 -1.8 M512.3 293.0 l-1.5 1.0 M382.3 128.3 l1.3 -1.2 M393.1 257.5 l1.6 -0.9 M445.4 294.7 l-0.3 1.8 M455.7 181.8 l0.8 1.6 M430.5 179.4 l1.2 -1.3 M375.0 263.5 l0.3 -1.8 M428.3 296.9 l-1.8 0.1 M435.4 141.8 l-0.9 -1.6 M494.0 152.9 l0.1 1.8 M449.5 155.9 l1.1 -1.4 M479.2 293.6 l-1.0 -1.5 M413.4 176.9 l1.8 -0.1 M354.9 188.8 l-1.4 -1.1 M427.3 143.5 l-0.1 -1.8 M500.5 252.5 l0.7 1.7 M539.2 280.7 l-1.2 1.4 M453.2 253.7 l-1.6 0.8 M520.6 284.1 l0.7 1.7 M431.4 119.4 l-1.3 -1.3 M380.1 233.9 l-1.3 1.3 M424.7 244.4 l-1.8 -0.3 M390.0 190.0 l1.0 -1.5 M545.8 159.6 l0.2 1.8 M558.2 163.6 l-0.3 1.8 M409.0 147.3 l-0.7 -1.6 M475.6 295.6 l1.4 -1.1 M475.9 278.9 l-0.5 -1.7 M404.6 267.5 l-1.7 -0.5 M385.8 286.5 l-0.5 1.7 M482.1 223.6 l0.8 1.6 M518.4 146.3 l-0.0 -1.8 M369.5 151.0 l-1.6 -0.9 M425.6 120.9 l-1.8 0.4 M371.2 210.1 l-1.2 -1.3 M407.2 166.9 l1.5 -1.0 M503.7 183.8 l0.6 -1.7 M349.6 237.6 l1.3 1.2 M512.8 184.2 l0.8 -1.6 M544.8 223.3 l-1.6 0.9 M413.5 285.8 l1.4 1.1 M532.5 189.2 l-1.4 -1.2 M459.7 120.8 l-0.6 -1.7 M357.6 171.8 l-0.2 -1.8 M546.3 237.4 l-0.9 1.6 M551.6 193.9 l0.5 1.7 M388.3 175.7 l1.1 -1.4 M363.6 141.4 l-0.8 -1.6 M534.1 225.4 l1.4 1.1 M492.6 127.9 l-1.6 -0.7 M354.4 232.6 l-1.6 0.8 M367.7 191.9 l0.1 1.8 M479.1 263.1 l-1.7 0.5 M410.1 241.4 l-1.1 -1.4 M515.7 218.1 l0.3 -1.8 M492.5 264.4 l0.2 -1.8 M435.8 277.9 l-1.4 1.1" fill="none" stroke="#2a2aee" stroke-width="1"/>
<path d="M456.8 107.7 L454 118 L451.5 129" fill="none" stroke="#6a6a6a" stroke-width="0.8"/>
<path d="M368 134 Q369 121 380 120.5 Q389 121 388.5 130 Q388 139 383 141" fill="none" stroke="#d80c0c" stroke-width="3.6" stroke-linecap="round"/>
<ellipse cx="376" cy="137.5" rx="7.2" ry="5.2" fill="none" stroke="#e01010" stroke-width="1.8"/>
<path d="M368 136 Q367.5 130 370 126" fill="none" stroke="#d8c820" stroke-width="2.6" stroke-linecap="round"/>
<circle cx="522.2" cy="281.2" r="8.8" fill="none" stroke="#d80c0c" stroke-width="5"/>
<path d="M513.5 284 Q512 278 515 273" fill="none" stroke="#c8b820" stroke-width="2.4" stroke-linecap="round"/>
<path d="M531 280 Q532 285 529 289" fill="none" stroke="#b8b020" stroke-width="2.2" stroke-linecap="round"/>
<path d="M526 153 Q536 154 544 158 Q550 161 554 160" fill="none" stroke="#d80c0c" stroke-width="3.8" stroke-linecap="round"/>
<path d="M528 152.5 Q537 153.5 545 157" fill="none" stroke="#ff4030" stroke-width="1.6" stroke-linecap="round"/>
<path d="M338 221 Q346 219 354 224" fill="none" stroke="#d80c0c" stroke-width="4.5" stroke-linecap="round"/>
<path d="M346 252 Q356 254 368 256" fill="none" stroke="#d80c0c" stroke-width="4.5" stroke-linecap="round"/>
<path d="M449.0 150.0 L448.5 160.0 L448.0 169.0 M557.0 158.0 L555.0 166.0 L554.0 174.0 M345.0 233.0 L346.0 240.0 L344.5 250.0 M343.0 251.0 L347.0 254.0 L352.0 255.0 M375.0 274.0 L377.0 279.0 L379.0 285.0 M497.0 245.0 L500.0 250.0 L503.0 253.5 M506.0 232.0 L512.0 236.0 L519.0 240.0 M419.0 129.0 L421.0 132.0 M549.0 160.0 L553.0 161.0" fill="none" stroke="#b0a818" stroke-width="2" stroke-linecap="round" stroke-linejoin="round"/>
<path d="M391.7 129.0 L392.8 125.8 Q393.8 122.6 393.3 118.3 Q392.8 114.0 393.3 112.5 Q393.8 110.9 398.1 110.3 Q402.3 109.8 407.6 110.3 Q413.0 110.9 415.1 112.5 Q417.2 114.0 418.1 118.3 Q419.0 122.6 421.9 125.8 Q424.9 129.0 426.9 130.5 L429.0 132.0 M447.2 148.0 L444.6 142.7 Q442.0 137.4 443.0 134.7 Q444.0 132.0 446.7 131.5 Q449.4 131.0 450.4 133.2 Q451.5 135.3 450.4 138.5 Q449.4 141.7 448.3 144.8 Q447.2 148.0 447.6 158.5 L448.0 169.0 M471.7 137.4 L472.4 133.2 Q473.0 129.0 476.5 125.8 Q480.0 122.6 484.4 122.6 Q488.7 122.6 492.9 125.3 Q497.0 128.0 499.5 132.5 Q502.0 137.0 504.9 140.4 L507.8 143.8 M487.0 154.0 L482.5 157.5 Q478.0 161.0 476.0 166.5 Q474.0 172.0 478.0 178.0 Q482.0 184.0 488.0 187.5 Q494.0 191.0 497.5 191.8 Q501.0 192.5 503.5 189.2 Q506.0 186.0 511.0 182.0 Q516.0 178.0 519.5 177.8 L523.0 177.5 M401.0 168.0 L405.5 169.0 Q410.0 170.0 414.0 167.5 Q418.0 165.0 425.5 163.5 Q433.0 162.0 438.5 164.5 Q444.0 167.0 449.5 169.0 L455.0 171.0 M363.0 181.0 L359.0 185.5 Q355.0 190.0 349.5 192.5 Q344.0 195.0 342.5 197.0 Q341.0 199.0 341.5 202.0 Q342.0 205.0 344.0 208.5 Q346.0 212.0 348.5 214.0 Q351.0 216.0 354.0 217.5 Q357.0 219.0 360.0 219.0 Q363.0 219.0 365.5 220.5 Q368.0 222.0 371.0 225.5 Q374.0 229.0 376.0 231.0 Q378.0 233.0 380.0 233.0 Q382.0 233.0 385.5 231.0 Q389.0 229.0 392.0 224.5 Q395.0 220.0 397.5 219.0 Q400.0 218.0 403.0 219.0 Q406.0 220.0 408.0 223.5 Q410.0 227.0 412.5 231.0 L415.0 235.0 M342.0 229.0 L344.2 233.5 Q346.5 238.0 344.9 244.2 L343.4 250.3 M399.5 184.0 L403.8 185.0 Q408.0 186.0 411.5 187.2 Q415.0 188.4 420.0 187.4 L425.0 186.3 M476.0 227.0 L480.5 226.5 Q485.0 226.0 490.0 227.0 Q495.0 228.0 500.0 229.0 Q505.0 230.0 510.0 232.5 L515.0 235.0 M448.0 242.0 L452.5 243.0 Q457.0 244.0 460.0 246.5 Q463.0 249.0 466.5 249.5 Q470.0 250.0 473.5 249.0 Q477.0 248.0 481.0 246.5 Q485.0 245.0 490.0 244.2 Q495.0 243.5 497.5 244.2 L500.0 245.0 M557.0 158.0 L556.0 164.0 Q555.0 170.0 554.0 175.0 Q553.0 180.0 552.0 183.5 L551.0 187.0 M546.0 192.7 L547.1 194.8 Q548.2 197.0 549.8 199.6 Q551.4 202.2 551.9 205.9 Q552.4 209.7 554.5 213.9 Q556.7 218.2 557.8 219.2 Q558.8 220.3 555.6 220.3 Q552.4 220.3 549.2 221.4 Q546.0 222.4 543.4 224.6 L540.7 226.7 M410.0 231.0 L415.3 234.2 Q420.6 237.3 422.8 241.6 Q425.0 245.8 426.0 250.4 L427.0 255.0 M448.3 253.5 L448.3 262.0 Q448.3 270.5 450.4 274.8 Q452.5 279.0 455.8 279.0 Q459.0 279.0 459.0 274.8 Q459.0 270.5 456.9 268.4 Q454.7 266.3 452.5 266.3 L450.4 266.3 M470.0 281.0 L473.0 284.2 Q476.0 287.5 477.5 291.8 Q479.0 296.0 481.5 299.0 Q484.0 302.0 487.5 303.0 Q491.0 304.0 496.0 303.0 Q501.0 302.0 504.0 300.5 Q507.0 299.0 507.5 296.5 Q508.0 294.0 507.0 289.5 L506.0 285.0 M393.0 277.0 L396.5 279.0 Q400.0 281.0 402.0 284.2 Q404.0 287.5 406.0 289.8 Q408.0 292.0 410.5 293.0 Q413.0 294.0 415.0 294.0 Q417.0 294.0 420.0 293.0 Q423.0 292.0 425.0 289.5 Q427.0 287.0 426.0 283.0 L425.0 279.0 M410.0 253.5 L414.2 252.4 Q418.5 251.4 421.8 248.2 L425.0 245.0 M433.4 250.3 L437.7 248.7 Q442.0 247.0 444.0 246.0 L446.0 245.0 M339.0 193.5 L343.4 194.9 Q347.7 196.4 354.9 194.2 Q362.0 192.0 367.5 190.5 L373.0 189.0" fill="none" stroke="#3ee02a" stroke-width="1.7" stroke-linecap="round" stroke-linejoin="round"/>
<g fill="#9a9a9a"><circle cx="476.0" cy="133.8" r="1.6"/><circle cx="482.8" cy="129.9" r="1.6"/><circle cx="489.2" cy="126.0" r="1.6"/><circle cx="475.8" cy="138.1" r="1.6"/><circle cx="479.3" cy="135.7" r="1.6"/><circle cx="485.8" cy="132.4" r="1.6"/><circle cx="489.5" cy="130.4" r="1.6"/><circle cx="493.0" cy="127.9" r="1.6"/><circle cx="476.0" cy="141.8" r="1.6"/><circle cx="479.3" cy="140.2" r="1.6"/><circle cx="483.1" cy="138.2" r="1.6"/><circle cx="485.8" cy="136.0" r="1.6"/><circle cx="489.8" cy="137.7" r="1.6"/><circle cx="482.6" cy="146.0" r="1.6"/><circle cx="486.4" cy="143.5" r="1.6"/><circle cx="489.2" cy="142.0" r="1.6"/><circle cx="485.8" cy="147.9" r="1.6"/><circle cx="489.9" cy="145.8" r="1.6"/><circle cx="496.1" cy="141.5" r="1.6"/><circle cx="482.9" cy="158.8" r="1.6"/><circle cx="486.6" cy="157.5" r="1.6"/><circle cx="490.5" cy="156.3" r="1.6"/><circle cx="478.2" cy="164.6" r="1.6"/><circle cx="482.6" cy="163.1" r="1.6"/><circle cx="489.3" cy="160.0" r="1.6"/><circle cx="493.2" cy="158.8" r="1.6"/><circle cx="488.6" cy="164.1" r="1.6"/><circle cx="492.5" cy="162.6" r="1.6"/><circle cx="481.1" cy="170.4" r="1.6"/><circle cx="484.2" cy="169.6" r="1.6"/><circle cx="495.7" cy="165.5" r="1.6"/><circle cx="487.2" cy="171.8" r="1.6"/><circle cx="414.1" cy="242.2" r="1.6"/><circle cx="424.7" cy="247.1" r="1.6"/><circle cx="414.5" cy="246.5" r="1.6"/><circle cx="417.4" cy="248.2" r="1.6"/><circle cx="428.1" cy="252.5" r="1.6"/><circle cx="414.5" cy="250.4" r="1.6"/><circle cx="417.7" cy="252.0" r="1.6"/><circle cx="425.2" cy="255.4" r="1.6"/><circle cx="407.8" cy="250.7" r="1.6"/><circle cx="411.2" cy="252.4" r="1.6"/><circle cx="421.9" cy="257.3" r="1.6"/><circle cx="411.9" cy="256.2" r="1.6"/><circle cx="418.5" cy="259.3" r="1.6"/><circle cx="417.4" cy="268.9" r="1.6"/><circle cx="421.1" cy="269.4" r="1.6"/><circle cx="406.8" cy="270.4" r="1.6"/><circle cx="410.9" cy="271.1" r="1.6"/><circle cx="418.7" cy="272.1" r="1.6"/><circle cx="422.1" cy="272.8" r="1.6"/><circle cx="426.0" cy="273.4" r="1.6"/><circle cx="404.5" cy="273.0" r="1.6"/><circle cx="408.8" cy="274.0" r="1.6"/><circle cx="412.3" cy="274.9" r="1.6"/><circle cx="423.6" cy="276.4" r="1.6"/><circle cx="427.8" cy="277.3" r="1.6"/><circle cx="410.0" cy="277.7" r="1.6"/><circle cx="417.7" cy="278.9" r="1.6"/><circle cx="421.6" cy="279.5" r="1.6"/><circle cx="424.9" cy="280.6" r="1.6"/><circle cx="407.5" cy="280.4" r="1.6"/><circle cx="422.6" cy="283.6" r="1.6"/><circle cx="426.2" cy="284.2" r="1.6"/><circle cx="405.0" cy="283.5" r="1.6"/><circle cx="408.7" cy="284.4" r="1.6"/><circle cx="420.1" cy="286.1" r="1.6"/><circle cx="406.2" cy="287.6" r="1.6"/><circle cx="412.1" cy="141.2" r="1.6"/><circle cx="415.9" cy="141.0" r="1.6"/><circle cx="482.6" cy="257.3" r="1.6"/><circle cx="486.1" cy="257.5" r="1.6"/><circle cx="480.9" cy="261.0" r="1.6"/><circle cx="484.7" cy="260.6" r="1.6"/><circle cx="488.0" cy="266.9" r="1.6"/><circle cx="478.9" cy="270.4" r="1.6"/><circle cx="480.9" cy="273.4" r="1.6"/><circle cx="484.9" cy="273.9" r="1.6"/><circle cx="482.5" cy="277.2" r="1.6"/></g>
<g fill="#d8d8d8"><circle cx="475.5" cy="133.3" r="0.8"/><circle cx="482.3" cy="129.4" r="0.8"/><circle cx="488.7" cy="125.5" r="0.8"/><circle cx="475.3" cy="137.6" r="0.8"/><circle cx="478.8" cy="135.2" r="0.8"/><circle cx="485.3" cy="131.9" r="0.8"/><circle cx="489.0" cy="129.9" r="0.8"/><circle cx="492.5" cy="127.4" r="0.8"/><circle cx="475.5" cy="141.3" r="0.8"/><circle cx="478.8" cy="139.7" r="0.8"/><circle cx="482.6" cy="137.7" r="0.8"/><circle cx="485.3" cy="135.5" r="0.8"/><circle cx="489.3" cy="137.2" r="0.8"/><circle cx="482.1" cy="145.5" r="0.8"/><circle cx="485.9" cy="143.0" r="0.8"/><circle cx="488.7" cy="141.5" r="0.8"/><circle cx="485.3" cy="147.4" r="0.8"/><circle cx="489.4" cy="145.3" r="0.8"/><circle cx="495.6" cy="141.0" r="0.8"/><circle cx="482.4" cy="158.3" r="0.8"/><circle cx="486.1" cy="157.0" r="0.8"/><circle cx="490.0" cy="155.8" r="0.8"/><circle cx="477.7" cy="164.1" r="0.8"/><circle cx="482.1" cy="162.6" r="0.8"/><circle cx="488.8" cy="159.5" r="0.8"/><circle cx="492.7" cy="158.3" r="0.8"/><circle cx="488.1" cy="163.6" r="0.8"/><circle cx="492.0" cy="162.1" r="0.8"/><circle cx="480.6" cy="169.9" r="0.8"/><circle cx="483.7" cy="169.1" r="0.8"/><circle cx="495.2" cy="165.0" r="0.8"/><circle cx="486.7" cy="171.3" r="0.8"/><circle cx="413.6" cy="241.7" r="0.8"/><circle cx="424.2" cy="246.6" r="0.8"/><circle cx="414.0" cy="246.0" r="0.8"/><circle cx="416.9" cy="247.7" r="0.8"/><circle cx="427.6" cy="252.0" r="0.8"/><circle cx="414.0" cy="249.9" r="0.8"/><circle cx="417.2" cy="251.5" r="0.8"/><circle cx="424.7" cy="254.9" r="0.8"/><circle cx="407.3" cy="250.2" r="0.8"/><circle cx="410.7" cy="251.9" r="0.8"/><circle cx="421.4" cy="256.8" r="0.8"/><circle cx="411.4" cy="255.7" r="0.8"/><circle cx="418.0" cy="258.8" r="0.8"/><circle cx="416.9" cy="268.4" r="0.8"/><circle cx="420.6" cy="268.9" r="0.8"/><circle cx="406.3" cy="269.9" r="0.8"/><circle cx="410.4" cy="270.6" r="0.8"/><circle cx="418.2" cy="271.6" r="0.8"/><circle cx="421.6" cy="272.3" r="0.8"/><circle cx="425.5" cy="272.9" r="0.8"/><circle cx="404.0" cy="272.5" r="0.8"/><circle cx="408.3" cy="273.5" r="0.8"/><circle cx="411.8" cy="274.4" r="0.8"/><circle cx="423.1" cy="275.9" r="0.8"/><circle cx="427.3" cy="276.8" r="0.8"/><circle cx="409.5" cy="277.2" r="0.8"/><circle cx="417.2" cy="278.4" r="0.8"/><circle cx="421.1" cy="279.0" r="0.8"/><circle cx="424.4" cy="280.1" r="0.8"/><circle cx="407.0" cy="279.9" r="0.8"/><circle cx="422.1" cy="283.1" r="0.8"/><circle cx="425.7" cy="283.7" r="0.8"/><circle cx="404.5" cy="283.0" r="0.8"/><circle cx="408.2" cy="283.9" r="0.8"/><circle cx="419.6" cy="285.6" r="0.8"/><circle cx="405.7" cy="287.1" r="0.8"/><circle cx="411.6" cy="140.7" r="0.8"/><circle cx="415.4" cy="140.5" r="0.8"/><circle cx="482.1" cy="256.8" r="0.8"/><circle cx="485.6" cy="257.0" r="0.8"/><circle cx="480.4" cy="260.5" r="0.8"/><circle cx="484.2" cy="260.1" r="0.8"/><circle cx="487.5" cy="266.4" r="0.8"/><circle cx="478.4" cy="269.9" r="0.8"/><circle cx="480.4" cy="272.9" r="0.8"/><circle cx="484.4" cy="273.4" r="0.8"/><circle cx="482.0" cy="276.7" r="0.8"/></g>
<g fill="#e01010"><circle cx="480.0" cy="121.6" r="1.7"/><circle cx="487.3" cy="121.6" r="1.7"/><circle cx="411.3" cy="291.5" r="1.7"/><circle cx="421.0" cy="292.4" r="1.7"/></g>
<g fill="#2030e0"><circle cx="479.0" cy="144.8" r="1.6"/><circle cx="485.7" cy="145.6" r="1.6"/><circle cx="414.0" cy="268.4" r="1.6"/><circle cx="422.0" cy="268.4" r="1.6"/></g>
<g fill="#e08030"><circle cx="480.7" cy="149.7" r="1.8"/><circle cx="418.4" cy="262.2" r="1.8"/></g>
</svg>
</body></html>
